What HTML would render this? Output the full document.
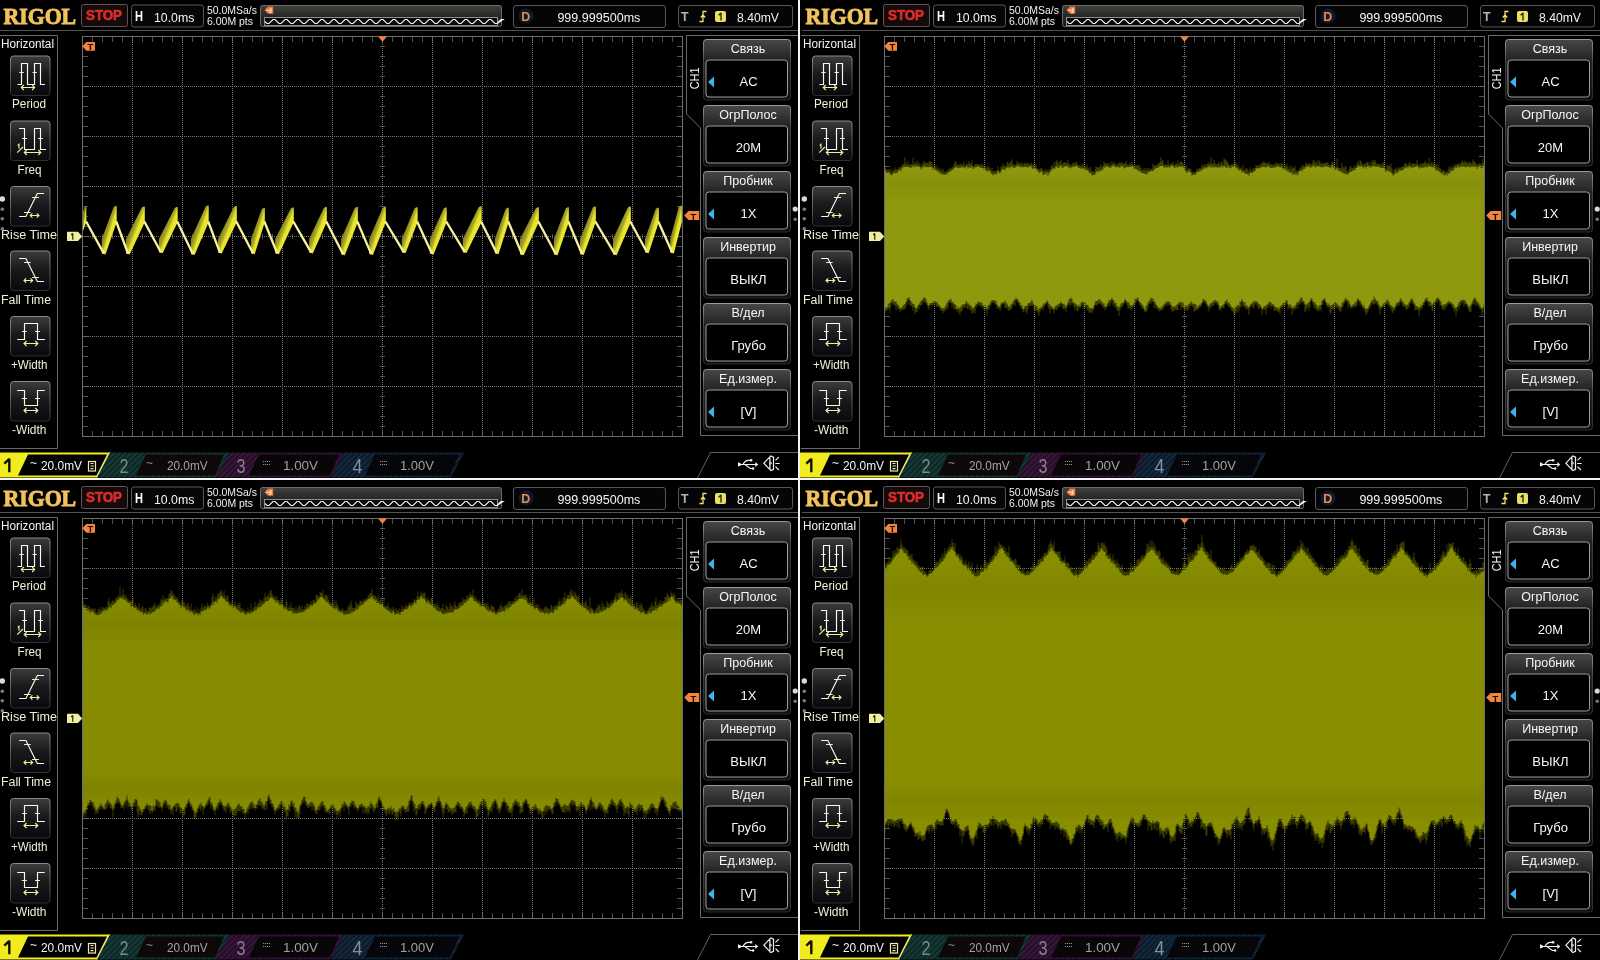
<!DOCTYPE html>
<html><head><meta charset="utf-8"><style>html,body{margin:0;padding:0;background:#000;width:1600px;height:960px;overflow:hidden}svg{display:block}#wrap{will-change:transform}</style></head>
<body><div id="wrap"><svg width="1600" height="960" viewBox="0 0 1600 960" font-family='"Liberation Sans", sans-serif'>

<defs>
<linearGradient id="gMem" x1="0" y1="0" x2="0" y2="1"><stop offset="0" stop-color="#3e423c"/><stop offset="0.55" stop-color="#262624"/><stop offset="1" stop-color="#141414"/></linearGradient>
<linearGradient id="gBtn" x1="0" y1="0" x2="0" y2="1"><stop offset="0" stop-color="#3c3c3c"/><stop offset="0.45" stop-color="#1a1a1c"/><stop offset="1" stop-color="#08080e"/></linearGradient>
<linearGradient id="gBtnS" x1="0" y1="0" x2="0" y2="1"><stop offset="0" stop-color="#8a8a8a"/><stop offset="1" stop-color="#303030"/></linearGradient>
<linearGradient id="gHdr" x1="0" y1="0" x2="0" y2="1"><stop offset="0" stop-color="#474747"/><stop offset="0.33" stop-color="#242424"/><stop offset="1" stop-color="#101010"/></linearGradient>
<linearGradient id="gHdrS" x1="0" y1="0" x2="0" y2="1"><stop offset="0" stop-color="#9a9a9a"/><stop offset="0.4" stop-color="#404040"/><stop offset="1" stop-color="#2a2a2a"/></linearGradient>
<pattern id="hTeal" width="4" height="4" patternUnits="userSpaceOnUse" patternTransform="rotate(45)"><rect width="4" height="4" fill="#0c2826"/><rect width="2" height="4" fill="#153a36"/></pattern>
<pattern id="hPurp" width="4" height="4" patternUnits="userSpaceOnUse" patternTransform="rotate(45)"><rect width="4" height="4" fill="#240e28"/><rect width="2" height="4" fill="#38163a"/></pattern>
<pattern id="hBlue" width="4" height="4" patternUnits="userSpaceOnUse" patternTransform="rotate(45)"><rect width="4" height="4" fill="#0a1a2a"/><rect width="2" height="4" fill="#14283c"/></pattern>
<linearGradient id="gRise" x1="0" y1="0" x2="1" y2="1"><stop offset="0.36" stop-color="#84821e"/><stop offset="0.47" stop-color="#acaa26"/><stop offset="0.54" stop-color="#e8e42c"/><stop offset="1" stop-color="#f6f23c"/></linearGradient>
<filter id="soft" x="-2%" y="-5%" width="104%" height="110%"><feGaussianBlur stdDeviation="0.7"/></filter>
<linearGradient id="gDark" x1="0" y1="0" x2="0" y2="1"><stop offset="0" stop-color="#000" stop-opacity="0"/><stop offset="0.45" stop-color="#000" stop-opacity="0.06"/><stop offset="1" stop-color="#000" stop-opacity="0"/></linearGradient>
<clipPath id="gridClip"><rect x="83" y="37" width="599" height="399"/></clipPath>
<clipPath id="cTL"><rect x="0" y="0" width="798" height="478"/></clipPath>
<clipPath id="cTR"><rect x="800" y="0" width="800" height="478"/></clipPath>
<clipPath id="cBL"><rect x="0" y="480" width="798" height="480"/></clipPath>
<clipPath id="cBR"><rect x="800" y="480" width="800" height="480"/></clipPath>
<g id="chrome"><text x="3.4" y="23.6" font-size="23.5" fill="#f2c25c" textLength="72.8" lengthAdjust="spacingAndGlyphs" font-weight="bold" font-family='"Liberation Serif", serif' stroke="#f2c25c" stroke-width="0.9">RIGOL</text>
<rect x="81.5" y="4.5" width="46" height="22" rx="2" fill="#140a0a" stroke="#5e5656"/>
<text x="86" y="20.3" font-size="14.3" fill="#dc2c2c" textLength="36" lengthAdjust="spacingAndGlyphs" font-weight="bold" stroke="#dc2c2c" stroke-width="0.7">STOP</text>
<rect x="131.5" y="5" width="72" height="22" rx="2.5" fill="#060606" stroke="#585858"/>
<text x="135" y="20.7" font-size="14" fill="#ffffff" textLength="8" lengthAdjust="spacingAndGlyphs" font-weight="bold">H</text>
<text x="154" y="22" font-size="12.5" fill="#f4f4f4" textLength="40.3" lengthAdjust="spacingAndGlyphs">10.0ms</text>
<text x="207" y="13.5" font-size="10" fill="#f0f0f0" textLength="50" lengthAdjust="spacingAndGlyphs">50.0MSa/s</text>
<text x="207" y="24.5" font-size="10" fill="#f0f0f0" textLength="46" lengthAdjust="spacingAndGlyphs">6.00M pts</text>
<rect x="260.5" y="5.5" width="241" height="21" rx="2" fill="url(#gMem)" stroke="#6c6c6c"/>
<rect x="264.5" y="17.5" width="233" height="8" fill="#080808" stroke="#8e8e8e"/>
<path d="M265,21.5 L267,23.5 L269,23.5 L273,19.5 L275,19.5 L279,23.5 L281,23.5 L285,19.5 L287,19.5 L291,23.5 L293,23.5 L297,19.5 L299,19.5 L303,23.5 L305,23.5 L309,19.5 L311,19.5 L315,23.5 L317,23.5 L321,19.5 L323,19.5 L327,23.5 L329,23.5 L333,19.5 L335,19.5 L339,23.5 L341,23.5 L345,19.5 L347,19.5 L351,23.5 L353,23.5 L357,19.5 L359,19.5 L363,23.5 L365,23.5 L369,19.5 L371,19.5 L375,23.5 L377,23.5 L381,19.5 L383,19.5 L387,23.5 L389,23.5 L393,19.5 L395,19.5 L399,23.5 L401,23.5 L405,19.5 L407,19.5 L411,23.5 L413,23.5 L417,19.5 L419,19.5 L423,23.5 L425,23.5 L429,19.5 L431,19.5 L435,23.5 L437,23.5 L441,19.5 L443,19.5 L447,23.5 L449,23.5 L453,19.5 L455,19.5 L459,23.5 L461,23.5 L465,19.5 L467,19.5 L471,23.5 L473,23.5 L477,19.5 L479,19.5 L483,23.5 L485,23.5 L489,19.5 L491,19.5 L495,23.5 L497,23.5 L501,19.5 L503,19.5 L497,23.5" fill="none" stroke="#f4f4f4" stroke-width="1.1"/>
<path d="M264.5,10.2 L268,6.5 H273.2 V13.8 H268 Z" fill="#f07a3a"/>
<path d="M266.5,10.2 H271 M271,8 V12.4 M269,12.4 H271" stroke="#fff2e0" stroke-width="1" fill="none"/>
<rect x="513.5" y="5.5" width="152" height="22" rx="2.5" fill="#050505" stroke="#585858"/>
<circle cx="526" cy="16" r="7.5" fill="#0c1a36"/>
<text x="521.3" y="20.7" font-size="13" fill="#f08a3a" textLength="9" lengthAdjust="spacingAndGlyphs" font-weight="bold">D</text>
<text x="557.4" y="22.3" font-size="12.5" fill="#f4f4f4" textLength="83" lengthAdjust="spacingAndGlyphs">999.999500ms</text>
<rect x="678.5" y="5.5" width="114" height="21.5" rx="2.5" fill="#050508" stroke="#585858"/>
<text x="681" y="21" font-size="13" fill="#b4b4b4" textLength="7.5" lengthAdjust="spacingAndGlyphs" font-weight="bold">T</text>
<path d="M699.5,21.5 H703 V11.5 H706.5 M700.8,17.5 L703,15 L705.2,17.5" stroke="#f0e070" stroke-width="1.3" fill="none"/>
<rect x="715" y="11" width="11" height="11" rx="2" fill="#e6e064"/>
<path d="M721,12.8 V20.6 M721,13 L718.6,15.2" stroke="#202000" stroke-width="1.3" fill="none"/>
<text x="737" y="21.5" font-size="12.5" fill="#f4f4f0" textLength="42" lengthAdjust="spacingAndGlyphs">8.40mV</text>
<path d="M0,30.5 H798" stroke="#525252"/>
<path d="M-1,35.5 H57.5 V448.5 H-1" fill="none" stroke="#6a6a6a"/>
<text x="1" y="48" font-size="12.5" fill="#f4f4f4" textLength="53" lengthAdjust="spacingAndGlyphs">Horizontal</text>
<rect x="10.5" y="56" width="39.5" height="39.5" rx="3" fill="url(#gBtn)" stroke="url(#gBtnS)"/>
<g transform="translate(8,54)"><path d="M11.2,18.5 H15.8 M24.5,18.5 H28.9 M13.3,33.5 H26.6 M15.8,31 L13.3,33.5 L15.8,36 M24.1,31 L26.6,33.5 L24.1,36" stroke="#f0f0a4" stroke-width="1.15" fill="none"/><path d="M9.5,30.5 H13.5 V9.5 H19.5 V30.5 H26.5 V9.5 H32.5 V30.5 H36.9" stroke="#fafaf2" stroke-width="1.15" fill="none"/></g>
<text x="29" y="108" font-size="12" fill="#f2f0d8" textLength="34" lengthAdjust="spacingAndGlyphs" text-anchor="middle">Period</text>
<rect x="10.5" y="121" width="39.5" height="39.5" rx="3" fill="url(#gBtn)" stroke="url(#gBtnS)"/>
<g transform="translate(8,119)"><path d="M14,19.5 H19 M30,19.5 H34.8 M16.3,33.5 H32.8 M18.8,31 L16.3,33.5 L18.8,36 M30.3,31 L32.8,33.5 L30.3,36 M9.2,33.7 L14.9,28 M9.8,26.5 L11,25.3 V29.5" stroke="#f0f0a4" stroke-width="1.15" fill="none"/><path d="M11,9.5 H16.5 V30.5 H26.5 V9.5 H32.5 V30.5 H38" stroke="#fafaf2" stroke-width="1.15" fill="none"/></g>
<text x="29.5" y="174" font-size="12" fill="#f2f0d8" textLength="24" lengthAdjust="spacingAndGlyphs" text-anchor="middle">Freq</text>
<rect x="10.5" y="186.5" width="39.5" height="39.5" rx="3" fill="url(#gBtn)" stroke="url(#gBtnS)"/>
<g transform="translate(8,184)"><path d="M24,13.5 H31 M16,28.5 H22.7 M22.2,31.5 H31 M24.4,29.3 L22.2,31.5 L24.4,33.7 M28.8,29.3 L31,31.5 L28.8,33.7" stroke="#f0f0a4" stroke-width="1.15" fill="none"/><path d="M11.2,32.5 H17.9 L29.3,9.5 H36" stroke="#fafaf2" stroke-width="1.15" fill="none"/></g>
<text x="29" y="239" font-size="12" fill="#f2f0d8" textLength="56" lengthAdjust="spacingAndGlyphs" text-anchor="middle">Rise Time</text>
<rect x="10.5" y="251" width="39.5" height="39.5" rx="3" fill="url(#gBtn)" stroke="url(#gBtnS)"/>
<g transform="translate(8,249)"><path d="M16,13.5 H22.7 M24,28.5 H31 M16,31.5 H24.7 M18.2,29.3 L16,31.5 L18.2,33.7 M22.5,29.3 L24.7,31.5 L22.5,33.7" stroke="#f0f0a4" stroke-width="1.15" fill="none"/><path d="M11.2,9.5 H17.9 L29.3,32.5 H36" stroke="#fafaf2" stroke-width="1.15" fill="none"/></g>
<text x="26" y="304" font-size="12" fill="#f2f0d8" textLength="50" lengthAdjust="spacingAndGlyphs" text-anchor="middle">Fall Time</text>
<rect x="10.5" y="316.5" width="39.5" height="39.5" rx="3" fill="url(#gBtn)" stroke="url(#gBtnS)"/>
<g transform="translate(8,314)"><path d="M14,17.5 H18.8 M27,17.5 H32 M16,29.5 H29.8 M18.5,27 L16,29.5 L18.5,32 M27.3,27 L29.8,29.5 L27.3,32" stroke="#f0f0a4" stroke-width="1.15" fill="none"/><path d="M9.2,25.5 H16.5 V9.5 H29.5 V25.5 H36.9" stroke="#fafaf2" stroke-width="1.15" fill="none"/></g>
<text x="29.2" y="368.5" font-size="12" fill="#f2f0d8" textLength="36.5" lengthAdjust="spacingAndGlyphs" text-anchor="middle">+Width</text>
<rect x="10.5" y="381.5" width="39.5" height="39.5" rx="3" fill="url(#gBtn)" stroke="url(#gBtnS)"/>
<g transform="translate(8,380)"><path d="M13.8,18.5 H19 M27,18.5 H32 M16,30.5 H29.8 M18.5,28 L16,30.5 L18.5,33 M27.3,28 L29.8,30.5 L27.3,33" stroke="#f0f0a4" stroke-width="1.15" fill="none"/><path d="M9.2,10.5 H16.5 V25.5 H29.5 V10.5 H36.7" stroke="#fafaf2" stroke-width="1.15" fill="none"/></g>
<text x="29.2" y="433.5" font-size="12" fill="#f2f0d8" textLength="34.4" lengthAdjust="spacingAndGlyphs" text-anchor="middle">-Width</text>
<circle cx="2.3" cy="199" r="2.7" fill="#dadada"/><circle cx="2.3" cy="209.2" r="1.8" fill="#7c7c7c"/><circle cx="2.3" cy="218.8" r="1.8" fill="#7c7c7c"/><circle cx="2.3" cy="228.9" r="1.8" fill="#7c7c7c"/>
<circle cx="795.2" cy="209" r="2.6" fill="#d8d8d8"/><circle cx="795.2" cy="219.2" r="1.7" fill="#7a7a7a"/>
<path d="M799,35.5 H686.5 V114 L700.5,128 V435.5 H799" fill="none" stroke="#6a6a6a"/>
<text x="0" y="0" font-size="13.5" fill="#f4f4f4" text-anchor="middle" textLength="21.7" lengthAdjust="spacingAndGlyphs" transform="translate(699,78.4) rotate(-90)">CH1</text>
<rect x="703.5" y="39.5" width="87" height="60.5" rx="3" fill="url(#gHdr)" stroke="url(#gHdrS)"/>
<rect x="706" y="60.0" width="81.5" height="37" rx="3" fill="#000" stroke="#9c9c9c"/>
<text x="748" y="52.8" font-size="12.5" fill="#f6f6f6" text-anchor="middle">Связь</text>
<text x="748.5" y="86.0" font-size="13" fill="#f6f6f6" text-anchor="middle">AC</text>
<path d="M708,82.0 L714,76.5 V87.5 Z" fill="#3cb4ec"/>
<rect x="703.5" y="105.5" width="87" height="60.5" rx="3" fill="url(#gHdr)" stroke="url(#gHdrS)"/>
<rect x="706" y="126.0" width="81.5" height="37" rx="3" fill="#000" stroke="#9c9c9c"/>
<text x="748" y="118.8" font-size="12.5" fill="#f6f6f6" text-anchor="middle">ОгрПолос</text>
<text x="748.5" y="152.0" font-size="13" fill="#f6f6f6" text-anchor="middle">20M</text>
<rect x="703.5" y="171.5" width="87" height="60.5" rx="3" fill="url(#gHdr)" stroke="url(#gHdrS)"/>
<rect x="706" y="192.0" width="81.5" height="37" rx="3" fill="#000" stroke="#9c9c9c"/>
<text x="748" y="184.8" font-size="12.5" fill="#f6f6f6" text-anchor="middle">Пробник</text>
<text x="748.5" y="218.0" font-size="13" fill="#f6f6f6" text-anchor="middle">1X</text>
<path d="M708,214.0 L714,208.5 V219.5 Z" fill="#3cb4ec"/>
<rect x="703.5" y="237.5" width="87" height="60.5" rx="3" fill="url(#gHdr)" stroke="url(#gHdrS)"/>
<rect x="706" y="258.0" width="81.5" height="37" rx="3" fill="#000" stroke="#9c9c9c"/>
<text x="748" y="250.8" font-size="12.5" fill="#f6f6f6" text-anchor="middle">Инвертир</text>
<text x="748.5" y="284.0" font-size="13" fill="#f6f6f6" text-anchor="middle">ВЫКЛ</text>
<rect x="703.5" y="303.5" width="87" height="60.5" rx="3" fill="url(#gHdr)" stroke="url(#gHdrS)"/>
<rect x="706" y="324.0" width="81.5" height="37" rx="3" fill="#000" stroke="#9c9c9c"/>
<text x="748" y="316.8" font-size="12.5" fill="#f6f6f6" text-anchor="middle">В/дел</text>
<text x="748.5" y="350.0" font-size="13" fill="#f6f6f6" text-anchor="middle">Грубо</text>
<rect x="703.5" y="369.5" width="87" height="60.5" rx="3" fill="url(#gHdr)" stroke="url(#gHdrS)"/>
<rect x="706" y="390.0" width="81.5" height="37" rx="3" fill="#000" stroke="#9c9c9c"/>
<text x="748" y="382.8" font-size="12.5" fill="#f6f6f6" text-anchor="middle">Ед.измер.</text>
<text x="748.5" y="416.0" font-size="13" fill="#f6f6f6" text-anchor="middle">[V]</text>
<path d="M708,412.0 L714,406.5 V417.5 Z" fill="#3cb4ec"/>
<path d="M-4,452.5 H110 L97,477.5 H-4 Z" fill="#f0ec1e"/>
<path d="M28,454.5 H107 L96.5,475.5 H18 Z" fill="#000"/>
<path d="M110,452.5 L97,477.5" stroke="#f4f0a0" stroke-width="1.5"/>
<path d="M9.3,458.5 V472.3 M9.3,459 L4.3,463.6" stroke="#101000" stroke-width="2.4" fill="none"/>
<text x="30" y="467" font-size="12" fill="#f4f4f4">~</text>
<text x="41" y="470" font-size="12.5" fill="#f4f4f4" textLength="41" lengthAdjust="spacingAndGlyphs">20.0mV</text>
<rect x="88.5" y="461.5" width="7" height="9.5" fill="none" stroke="#f0eab0" stroke-width="1.2"/><path d="M90.5,466 H94 M90.5,463.5 H93.5 M90.5,468.7 H93.5" stroke="#f0eab0" stroke-width="1.2"/>
<path d="M110,452.5 H230 L215,477.5 H97 Z" fill="url(#hTeal)"/>
<path d="M146,454.5 H224 L215,475.5 H136 Z" fill="#0e0808"/>
<text x="119.5" y="472.8" font-size="20" fill="#7e8a86" textLength="9" lengthAdjust="spacingAndGlyphs">2</text>
<text x="146" y="467" font-size="12" fill="#8a8a8a">~</text>
<text x="167" y="470" font-size="12.5" fill="#a4a4a4" textLength="40.6" lengthAdjust="spacingAndGlyphs">20.0mV</text>
<path d="M230,452.5 H344 L331,477.5 H215 Z" fill="url(#hPurp)"/>
<path d="M259,454.5 H339 L330,475.5 H249 Z" fill="#0a0608"/>
<text x="236.5" y="472.8" font-size="20" fill="#8a8090" textLength="9" lengthAdjust="spacingAndGlyphs">3</text>
<path d="M263,461.5 H270 M263,464.5 H270" stroke="#909090" stroke-width="1" stroke-dasharray="1.2 0.8"/>
<text x="283" y="470" font-size="12.5" fill="#a0a0a0" textLength="35" lengthAdjust="spacingAndGlyphs">1.00V</text>
<path d="M344,452.5 H464 L451,477.5 H331 Z" fill="url(#hBlue)"/>
<path d="M375,454.5 H459 L450,475.5 H365 Z" fill="#06060a"/>
<text x="352.5" y="472.8" font-size="20" fill="#8090a0" textLength="10" lengthAdjust="spacingAndGlyphs">4</text>
<path d="M380,461.5 H387 M380,464.5 H387" stroke="#909090" stroke-width="1" stroke-dasharray="1.2 0.8"/>
<text x="400" y="470" font-size="12.5" fill="#a0a0a0" textLength="34" lengthAdjust="spacingAndGlyphs">1.00V</text>
<path d="M799,452.5 H710.5 L697,479" fill="none" stroke="#606060"/>
<g stroke="#f2f2f2" fill="none" stroke-width="1.15"><path d="M740,464.5 H757.2 M755.2,462.6 L757.4,464.5 L755.2,466.4 M742.8,464.5 Q745.3,460.4 748.3,460.4 H750.5 M745.3,464.7 L750.3,468.5 H752.5"/></g>
<path d="M738,462.2 L740.9,463.4 V465.6 L738,466.6 Z" fill="#f2f2f2"/><rect x="750" y="459.2" width="2.3" height="2.2" fill="#f2f2f2"/><circle cx="753.1" cy="468.5" r="1.2" fill="#f2f2f2"/>
<g stroke="#f2f2f2" fill="none" stroke-width="1.2"><path d="M763.9,463.2 L770.8,455.9 L773.5,457.2 V469.4 L770.8,470.6 Z M769.9,457.5 V469 M775.5,460.4 L778.9,457.1 M775.3,463.5 H779.6 M775.5,466.6 L778.9,470"/></g><circle cx="770.6" cy="463.2" r="0.9" fill="none" stroke="#f2f2f2" stroke-width="0.9"/></g>
<g id="grid"><rect x="82.5" y="36.5" width="600" height="400" fill="none" stroke="#6e6e6e"/>
<path d="M92.5,37 V42 M92.5,436 V431 M102.5,37 V42 M102.5,436 V431 M112.5,37 V42 M112.5,436 V431 M122.5,37 V42 M122.5,436 V431 M132.5,37 V42 M132.5,436 V431 M142.5,37 V42 M142.5,436 V431 M152.5,37 V42 M152.5,436 V431 M162.5,37 V42 M162.5,436 V431 M172.5,37 V42 M172.5,436 V431 M182.5,37 V42 M182.5,436 V431 M192.5,37 V42 M192.5,436 V431 M202.5,37 V42 M202.5,436 V431 M212.5,37 V42 M212.5,436 V431 M222.5,37 V42 M222.5,436 V431 M232.5,37 V42 M232.5,436 V431 M242.5,37 V42 M242.5,436 V431 M252.5,37 V42 M252.5,436 V431 M262.5,37 V42 M262.5,436 V431 M272.5,37 V42 M272.5,436 V431 M282.5,37 V42 M282.5,436 V431 M292.5,37 V42 M292.5,436 V431 M302.5,37 V42 M302.5,436 V431 M312.5,37 V42 M312.5,436 V431 M322.5,37 V42 M322.5,436 V431 M332.5,37 V42 M332.5,436 V431 M342.5,37 V42 M342.5,436 V431 M352.5,37 V42 M352.5,436 V431 M362.5,37 V42 M362.5,436 V431 M372.5,37 V42 M372.5,436 V431 M382.5,37 V42 M382.5,436 V431 M392.5,37 V42 M392.5,436 V431 M402.5,37 V42 M402.5,436 V431 M412.5,37 V42 M412.5,436 V431 M422.5,37 V42 M422.5,436 V431 M432.5,37 V42 M432.5,436 V431 M442.5,37 V42 M442.5,436 V431 M452.5,37 V42 M452.5,436 V431 M462.5,37 V42 M462.5,436 V431 M472.5,37 V42 M472.5,436 V431 M482.5,37 V42 M482.5,436 V431 M492.5,37 V42 M492.5,436 V431 M502.5,37 V42 M502.5,436 V431 M512.5,37 V42 M512.5,436 V431 M522.5,37 V42 M522.5,436 V431 M532.5,37 V42 M532.5,436 V431 M542.5,37 V42 M542.5,436 V431 M552.5,37 V42 M552.5,436 V431 M562.5,37 V42 M562.5,436 V431 M572.5,37 V42 M572.5,436 V431 M582.5,37 V42 M582.5,436 V431 M592.5,37 V42 M592.5,436 V431 M602.5,37 V42 M602.5,436 V431 M612.5,37 V42 M612.5,436 V431 M622.5,37 V42 M622.5,436 V431 M632.5,37 V42 M632.5,436 V431 M642.5,37 V42 M642.5,436 V431 M652.5,37 V42 M652.5,436 V431 M662.5,37 V42 M662.5,436 V431 M672.5,37 V42 M672.5,436 V431 M83,46.5 H88 M682,46.5 H677 M83,56.5 H88 M682,56.5 H677 M83,66.5 H88 M682,66.5 H677 M83,76.5 H88 M682,76.5 H677 M83,86.5 H88 M682,86.5 H677 M83,96.5 H88 M682,96.5 H677 M83,106.5 H88 M682,106.5 H677 M83,116.5 H88 M682,116.5 H677 M83,126.5 H88 M682,126.5 H677 M83,136.5 H88 M682,136.5 H677 M83,146.5 H88 M682,146.5 H677 M83,156.5 H88 M682,156.5 H677 M83,166.5 H88 M682,166.5 H677 M83,176.5 H88 M682,176.5 H677 M83,186.5 H88 M682,186.5 H677 M83,196.5 H88 M682,196.5 H677 M83,206.5 H88 M682,206.5 H677 M83,216.5 H88 M682,216.5 H677 M83,226.5 H88 M682,226.5 H677 M83,236.5 H88 M682,236.5 H677 M83,246.5 H88 M682,246.5 H677 M83,256.5 H88 M682,256.5 H677 M83,266.5 H88 M682,266.5 H677 M83,276.5 H88 M682,276.5 H677 M83,286.5 H88 M682,286.5 H677 M83,296.5 H88 M682,296.5 H677 M83,306.5 H88 M682,306.5 H677 M83,316.5 H88 M682,316.5 H677 M83,326.5 H88 M682,326.5 H677 M83,336.5 H88 M682,336.5 H677 M83,346.5 H88 M682,346.5 H677 M83,356.5 H88 M682,356.5 H677 M83,366.5 H88 M682,366.5 H677 M83,376.5 H88 M682,376.5 H677 M83,386.5 H88 M682,386.5 H677 M83,396.5 H88 M682,396.5 H677 M83,406.5 H88 M682,406.5 H677 M83,416.5 H88 M682,416.5 H677 M83,426.5 H88 M682,426.5 H677 M92.5,234 V239 M102.5,234 V239 M112.5,234 V239 M122.5,234 V239 M132.5,234 V239 M142.5,234 V239 M152.5,234 V239 M162.5,234 V239 M172.5,234 V239 M182.5,234 V239 M192.5,234 V239 M202.5,234 V239 M212.5,234 V239 M222.5,234 V239 M232.5,234 V239 M242.5,234 V239 M252.5,234 V239 M262.5,234 V239 M272.5,234 V239 M282.5,234 V239 M292.5,234 V239 M302.5,234 V239 M312.5,234 V239 M322.5,234 V239 M332.5,234 V239 M342.5,234 V239 M352.5,234 V239 M362.5,234 V239 M372.5,234 V239 M382.5,234 V239 M392.5,234 V239 M402.5,234 V239 M412.5,234 V239 M422.5,234 V239 M432.5,234 V239 M442.5,234 V239 M452.5,234 V239 M462.5,234 V239 M472.5,234 V239 M482.5,234 V239 M492.5,234 V239 M502.5,234 V239 M512.5,234 V239 M522.5,234 V239 M532.5,234 V239 M542.5,234 V239 M552.5,234 V239 M562.5,234 V239 M572.5,234 V239 M582.5,234 V239 M592.5,234 V239 M602.5,234 V239 M612.5,234 V239 M622.5,234 V239 M632.5,234 V239 M642.5,234 V239 M652.5,234 V239 M662.5,234 V239 M672.5,234 V239 M380,46.5 H385 M380,56.5 H385 M380,66.5 H385 M380,76.5 H385 M380,86.5 H385 M380,96.5 H385 M380,106.5 H385 M380,116.5 H385 M380,126.5 H385 M380,136.5 H385 M380,146.5 H385 M380,156.5 H385 M380,166.5 H385 M380,176.5 H385 M380,186.5 H385 M380,196.5 H385 M380,206.5 H385 M380,216.5 H385 M380,226.5 H385 M380,236.5 H385 M380,246.5 H385 M380,256.5 H385 M380,266.5 H385 M380,276.5 H385 M380,286.5 H385 M380,296.5 H385 M380,306.5 H385 M380,316.5 H385 M380,326.5 H385 M380,336.5 H385 M380,346.5 H385 M380,356.5 H385 M380,366.5 H385 M380,376.5 H385 M380,386.5 H385 M380,396.5 H385 M380,406.5 H385 M380,416.5 H385 M380,426.5 H385" stroke="#505050" stroke-width="1"/>
<path d="M132.5,36 V436 M182.5,36 V436 M232.5,36 V436 M282.5,36 V436 M332.5,36 V436 M382.5,36 V436 M432.5,36 V436 M482.5,36 V436 M532.5,36 V436 M582.5,36 V436 M632.5,36 V436 M82,86.5 H682 M82,136.5 H682 M82,186.5 H682 M82,236.5 H682 M82,286.5 H682 M82,336.5 H682 M82,386.5 H682" stroke="#787878" stroke-width="1" stroke-dasharray="1 1"/></g>
<g id="markers"><path d="M378,36.5 H387 L382.5,41.8 Z" fill="#f2843e"/>
<path d="M82.3,46.3 L86.3,42 H95 V50.8 H86.3 Z" fill="#f2843e"/>
<text x="90.5" y="50" font-size="9.5" fill="#1a0800" text-anchor="middle" font-weight="bold">T</text>
<path d="M684.2,215.5 L688.5,211 H699.2 V220 H688.5 Z" fill="#f2843e"/>
<text x="693.5" y="219.5" font-size="9.5" fill="#1a0800" text-anchor="middle" font-weight="bold">T</text>
<path d="M67,231.8 H78 L82.2,236.4 L78,241 H67 Z" fill="#f0eea0"/>
<path d="M72.8,233.5 V239.8 M71.2,235 L72.8,233.5" stroke="#141400" stroke-width="1.1" fill="none"/></g>
</defs>
<rect width="1600" height="960" fill="#000"/>
<g clip-path="url(#cTL)"><g transform="translate(0,0)"><use href="#chrome"/><use href="#grid"/><g clip-path="url(#gridClip)"><path d="M101.8,253.4 V239 L113.7,207.1 L115.4,206.1 H116.7 V222 L105.5,254.4 Z" fill="url(#gRise)"/><path d="M126.0,253.5 V239 L141.8,207.4 L143.5,206.4 H144.8 V222 L129.7,254.5 Z" fill="url(#gRise)"/><path d="M158.9,252.2 V239 L174.7,208.1 L176.4,207.1 H177.7 V222 L162.6,253.2 Z" fill="url(#gRise)"/><path d="M190.9,254.1 V239 L205.7,206.5 L207.4,205.5 H208.7 V222 L194.6,255.1 Z" fill="url(#gRise)"/><path d="M218.0,252.6 V239 L233.8,207.1 L235.5,206.1 H236.8 V222 L221.7,253.6 Z" fill="url(#gRise)"/><path d="M251.0,253.2 V239 L261.8,209.0 L263.5,208.0 H264.8 V222 L254.7,254.2 Z" fill="url(#gRise)"/><path d="M275.2,253.2 V239 L290.8,208.6 L292.5,207.6 H293.8 V222 L278.9,254.2 Z" fill="url(#gRise)"/><path d="M309.1,252.4 V239 L323.8,208.1 L325.5,207.1 H326.8 V222 L312.8,253.4 Z" fill="url(#gRise)"/><path d="M341.1,254.2 V239 L354.8,208.1 L356.5,207.1 H357.8 V222 L344.8,255.2 Z" fill="url(#gRise)"/><path d="M369.2,253.9 V239 L382.8,207.8 L384.5,206.8 H385.8 V222 L372.9,254.9 Z" fill="url(#gRise)"/><path d="M401.8,252.2 V239 L414.6,208.2 L416.3,207.2 H417.6 V222 L405.5,253.2 Z" fill="url(#gRise)"/><path d="M429.9,253.5 V239 L443.7,208.4 L445.4,207.4 H446.7 V222 L433.6,254.5 Z" fill="url(#gRise)"/><path d="M462.8,252.1 V239 L478.6,207.3 L480.3,206.3 H481.6 V222 L466.5,253.1 Z" fill="url(#gRise)"/><path d="M494.8,253.2 V239 L505.7,208.7 L507.4,207.7 H508.7 V222 L498.5,254.2 Z" fill="url(#gRise)"/><path d="M520.0,254.2 V239 L535.8,208.3 L537.5,207.3 H538.8 V222 L523.7,255.2 Z" fill="url(#gRise)"/><path d="M553.9,254.3 V239 L565.8,208.3 L567.5,207.3 H568.8 V222 L557.6,255.3 Z" fill="url(#gRise)"/><path d="M580.0,254.0 V239 L592.8,207.5 L594.5,206.5 H595.8 V222 L583.7,255.0 Z" fill="url(#gRise)"/><path d="M613.0,254.3 V239 L627.8,207.6 L629.5,206.6 H630.8 V222 L616.7,255.3 Z" fill="url(#gRise)"/><path d="M645.0,252.2 V239 L655.8,208.7 L657.5,207.7 H658.8 V222 L648.7,253.2 Z" fill="url(#gRise)"/><path d="M670.2,252.5 V239 L678.8,206.8 L680.5,205.8 H681.8 V222 L673.9,253.5 Z" fill="url(#gRise)"/><path d="M82.6,213 L84.8,206.5 H86.3 V222 L82.6,232 Z" fill="url(#gRise)"/>
<path d="M86.1,221.5 L103.8,253.4 M116.2,221.5 L128.0,253.5 M144.3,221.5 L160.9,252.2 M177.2,221.5 L192.9,254.1 M208.2,221.5 L220.0,252.6 M236.3,221.5 L253.0,253.2 M264.3,221.5 L277.2,253.2 M293.3,221.5 L311.1,252.4 M326.3,221.5 L343.1,254.2 M357.3,221.5 L371.2,253.9 M385.3,221.5 L403.8,252.2 M417.1,221.5 L431.9,253.5 M446.2,221.5 L464.8,252.1 M481.1,221.5 L496.8,253.2 M508.2,221.5 L522.0,254.2 M538.3,221.5 L555.9,254.3 M568.3,221.5 L582.0,254.0 M595.3,221.5 L615.0,254.3 M630.3,221.5 L647.0,252.2 M658.3,221.5 L672.2,252.5" stroke="#f6f2a0" stroke-width="2.3" fill="none" stroke-linejoin="round"/></g><use href="#markers"/></g></g>
<g clip-path="url(#cTR)"><g transform="translate(802,0)"><use href="#chrome"/><use href="#grid"/><g clip-path="url(#gridClip)"><g filter="url(#soft)"><path d="M82.5,165.6 83.5,165.6 L83.5,168.9 84.5,168.9 L84.5,169.8 85.5,169.8 L85.5,169.1 86.5,169.1 L86.5,169.6 87.5,169.6 L87.5,171.8 88.5,171.8 L88.5,168.8 89.5,168.8 L89.5,173.4 90.5,173.4 L90.5,169.8 91.5,169.8 L91.5,170.4 92.5,170.4 L92.5,167.5 93.5,167.5 L93.5,169.5 94.5,169.5 L94.5,169.1 95.5,169.1 L95.5,169.4 96.5,169.4 L96.5,167.3 97.5,167.3 L97.5,166.7 98.5,166.7 L98.5,167.6 99.5,167.6 L99.5,165.1 100.5,165.1 L100.5,164.5 101.5,164.5 L101.5,164.0 102.5,164.0 L102.5,156.9 103.5,156.9 L103.5,163.3 104.5,163.3 L104.5,164.4 105.5,164.4 L105.5,160.9 106.5,160.9 L106.5,165.0 107.5,165.0 L107.5,163.7 108.5,163.7 L108.5,164.1 109.5,164.1 L109.5,164.6 110.5,164.6 L110.5,157.9 111.5,157.9 L111.5,164.2 112.5,164.2 L112.5,162.4 113.5,162.4 L113.5,163.2 114.5,163.2 L114.5,160.4 115.5,160.4 L115.5,164.6 116.5,164.6 L116.5,161.9 117.5,161.9 L117.5,164.5 118.5,164.5 L118.5,167.1 119.5,167.1 L119.5,164.3 120.5,164.3 L120.5,163.5 121.5,163.5 L121.5,160.7 122.5,160.7 L122.5,162.6 123.5,162.6 L123.5,163.0 124.5,163.0 L124.5,162.8 125.5,162.8 L125.5,163.5 126.5,163.5 L126.5,161.3 127.5,161.3 L127.5,161.2 128.5,161.2 L128.5,162.3 129.5,162.3 L129.5,162.0 130.5,162.0 L130.5,167.2 131.5,167.2 L131.5,164.2 132.5,164.2 L132.5,166.7 133.5,166.7 L133.5,165.2 134.5,165.2 L134.5,168.6 135.5,168.6 L135.5,167.4 136.5,167.4 L136.5,170.1 137.5,170.1 L137.5,167.7 138.5,167.7 L138.5,171.2 139.5,171.2 L139.5,169.7 140.5,169.7 L140.5,168.7 141.5,168.7 L141.5,172.2 142.5,172.2 L142.5,171.9 143.5,171.9 L143.5,170.9 144.5,170.9 L144.5,171.7 145.5,171.7 L145.5,169.6 146.5,169.6 L146.5,169.5 147.5,169.5 L147.5,167.5 148.5,167.5 L148.5,168.8 149.5,168.8 L149.5,167.8 150.5,167.8 L150.5,166.8 151.5,166.8 L151.5,164.6 152.5,164.6 L152.5,161.0 153.5,161.0 L153.5,161.8 154.5,161.8 L154.5,165.0 155.5,165.0 L155.5,164.3 156.5,164.3 L156.5,164.9 157.5,164.9 L157.5,164.7 158.5,164.7 L158.5,163.4 159.5,163.4 L159.5,164.6 160.5,164.6 L160.5,164.8 161.5,164.8 L161.5,161.6 162.5,161.6 L162.5,166.0 163.5,166.0 L163.5,164.5 164.5,164.5 L164.5,163.4 165.5,163.4 L165.5,164.4 166.5,164.4 L166.5,160.7 167.5,160.7 L167.5,163.2 168.5,163.2 L168.5,163.7 169.5,163.7 L169.5,160.3 170.5,160.3 L170.5,166.1 171.5,166.1 L171.5,166.3 172.5,166.3 L172.5,163.7 173.5,163.7 L173.5,164.5 174.5,164.5 L174.5,163.7 175.5,163.7 L175.5,163.9 176.5,163.9 L176.5,164.4 177.5,164.4 L177.5,164.9 178.5,164.9 L178.5,164.9 179.5,164.9 L179.5,163.6 180.5,163.6 L180.5,164.8 181.5,164.8 L181.5,167.4 182.5,167.4 L182.5,166.1 183.5,166.1 L183.5,166.7 184.5,166.7 L184.5,168.8 185.5,168.8 L185.5,165.2 186.5,165.2 L186.5,167.3 187.5,167.3 L187.5,168.3 188.5,168.3 L188.5,170.4 189.5,170.4 L189.5,168.1 190.5,168.1 L190.5,171.4 191.5,171.4 L191.5,170.6 192.5,170.6 L192.5,171.4 193.5,171.4 L193.5,171.1 194.5,171.1 L194.5,170.6 195.5,170.6 L195.5,166.6 196.5,166.6 L196.5,170.6 197.5,170.6 L197.5,170.6 198.5,170.6 L198.5,166.2 199.5,166.2 L199.5,167.0 200.5,167.0 L200.5,163.2 201.5,163.2 L201.5,165.4 202.5,165.4 L202.5,166.3 203.5,166.3 L203.5,166.0 204.5,166.0 L204.5,162.6 205.5,162.6 L205.5,161.3 206.5,161.3 L206.5,164.1 207.5,164.1 L207.5,162.8 208.5,162.8 L208.5,161.3 209.5,161.3 L209.5,159.2 210.5,159.2 L210.5,164.3 211.5,164.3 L211.5,164.8 212.5,164.8 L212.5,164.8 213.5,164.8 L213.5,164.4 214.5,164.4 L214.5,161.3 215.5,161.3 L215.5,163.3 216.5,163.3 L216.5,162.2 217.5,162.2 L217.5,163.7 218.5,163.7 L218.5,164.1 219.5,164.1 L219.5,162.1 220.5,162.1 L220.5,165.4 221.5,165.4 L221.5,163.6 222.5,163.6 L222.5,162.4 223.5,162.4 L223.5,163.5 224.5,163.5 L224.5,163.5 225.5,163.5 L225.5,162.5 226.5,162.5 L226.5,164.5 227.5,164.5 L227.5,163.7 228.5,163.7 L228.5,162.5 229.5,162.5 L229.5,164.3 230.5,164.3 L230.5,165.0 231.5,165.0 L231.5,163.6 232.5,163.6 L232.5,165.7 233.5,165.7 L233.5,163.6 234.5,163.6 L234.5,168.2 235.5,168.2 L235.5,168.5 236.5,168.5 L236.5,169.4 237.5,169.4 L237.5,168.8 238.5,168.8 L238.5,167.8 239.5,167.8 L239.5,168.4 240.5,168.4 L240.5,170.3 241.5,170.3 L241.5,171.7 242.5,171.7 L242.5,169.1 243.5,169.1 L243.5,170.9 244.5,170.9 L244.5,169.4 245.5,169.4 L245.5,172.1 246.5,172.1 L246.5,169.0 247.5,169.0 L247.5,169.9 248.5,169.9 L248.5,166.5 249.5,166.5 L249.5,164.8 250.5,164.8 L250.5,167.5 251.5,167.5 L251.5,162.3 252.5,162.3 L252.5,166.0 253.5,166.0 L253.5,161.7 254.5,161.7 L254.5,160.0 255.5,160.0 L255.5,161.9 256.5,161.9 L256.5,164.2 257.5,164.2 L257.5,161.6 258.5,161.6 L258.5,159.8 259.5,159.8 L259.5,164.2 260.5,164.2 L260.5,163.3 261.5,163.3 L261.5,161.7 262.5,161.7 L262.5,162.2 263.5,162.2 L263.5,163.1 264.5,163.1 L264.5,163.3 265.5,163.3 L265.5,159.8 266.5,159.8 L266.5,164.2 267.5,164.2 L267.5,163.9 268.5,163.9 L268.5,166.1 269.5,166.1 L269.5,164.6 270.5,164.6 L270.5,162.9 271.5,162.9 L271.5,162.0 272.5,162.0 L272.5,164.1 273.5,164.1 L273.5,161.7 274.5,161.7 L274.5,162.2 275.5,162.2 L275.5,165.4 276.5,165.4 L276.5,165.5 277.5,165.5 L277.5,164.0 278.5,164.0 L278.5,165.9 279.5,165.9 L279.5,164.8 280.5,164.8 L280.5,163.1 281.5,163.1 L281.5,167.5 282.5,167.5 L282.5,166.3 283.5,166.3 L283.5,166.7 284.5,166.7 L284.5,164.3 285.5,164.3 L285.5,168.6 286.5,168.6 L286.5,167.2 287.5,167.2 L287.5,170.2 288.5,170.2 L288.5,167.0 289.5,167.0 L289.5,171.8 290.5,171.8 L290.5,170.9 291.5,170.9 L291.5,172.4 292.5,172.4 L292.5,169.8 293.5,169.8 L293.5,166.2 294.5,166.2 L294.5,167.4 295.5,167.4 L295.5,166.9 296.5,166.9 L296.5,167.5 297.5,167.5 L297.5,166.2 298.5,166.2 L298.5,163.8 299.5,163.8 L299.5,167.2 300.5,167.2 L300.5,165.6 301.5,165.6 L301.5,161.6 302.5,161.6 L302.5,163.0 303.5,163.0 L303.5,164.3 304.5,164.3 L304.5,163.0 305.5,163.0 L305.5,163.2 306.5,163.2 L306.5,165.6 307.5,165.6 L307.5,162.6 308.5,162.6 L308.5,165.7 309.5,165.7 L309.5,161.8 310.5,161.8 L310.5,163.8 311.5,163.8 L311.5,161.7 312.5,161.7 L312.5,163.6 313.5,163.6 L313.5,165.4 314.5,165.4 L314.5,163.5 315.5,163.5 L315.5,164.8 316.5,164.8 L316.5,162.1 317.5,162.1 L317.5,163.5 318.5,163.5 L318.5,162.3 319.5,162.3 L319.5,162.6 320.5,162.6 L320.5,164.0 321.5,164.0 L321.5,163.6 322.5,163.6 L322.5,163.3 323.5,163.3 L323.5,160.6 324.5,160.6 L324.5,164.6 325.5,164.6 L325.5,164.5 326.5,164.5 L326.5,165.1 327.5,165.1 L327.5,161.9 328.5,161.9 L328.5,164.0 329.5,164.0 L329.5,161.6 330.5,161.6 L330.5,164.4 331.5,164.4 L331.5,165.4 332.5,165.4 L332.5,166.5 333.5,166.5 L333.5,165.0 334.5,165.0 L334.5,165.5 335.5,165.5 L335.5,164.8 336.5,164.8 L336.5,166.7 337.5,166.7 L337.5,165.2 338.5,165.2 L338.5,168.0 339.5,168.0 L339.5,170.0 340.5,170.0 L340.5,169.9 341.5,169.9 L341.5,168.1 342.5,168.1 L342.5,169.7 343.5,169.7 L343.5,167.9 344.5,167.9 L344.5,171.1 345.5,171.1 L345.5,167.9 346.5,167.9 L346.5,169.8 347.5,169.8 L347.5,168.2 348.5,168.2 L348.5,169.0 349.5,169.0 L349.5,168.7 350.5,168.7 L350.5,164.2 351.5,164.2 L351.5,164.8 352.5,164.8 L352.5,165.7 353.5,165.7 L353.5,165.8 354.5,165.8 L354.5,164.8 355.5,164.8 L355.5,163.6 356.5,163.6 L356.5,163.0 357.5,163.0 L357.5,162.2 358.5,162.2 L358.5,157.1 359.5,157.1 L359.5,161.1 360.5,161.1 L360.5,160.1 361.5,160.1 L361.5,164.7 362.5,164.7 L362.5,164.7 363.5,164.7 L363.5,164.3 364.5,164.3 L364.5,165.3 365.5,165.3 L365.5,160.5 366.5,160.5 L366.5,164.3 367.5,164.3 L367.5,165.6 368.5,165.6 L368.5,163.5 369.5,163.5 L369.5,163.2 370.5,163.2 L370.5,161.5 371.5,161.5 L371.5,165.0 372.5,165.0 L372.5,164.5 373.5,164.5 L373.5,162.5 374.5,162.5 L374.5,164.3 375.5,164.3 L375.5,160.2 376.5,160.2 L376.5,164.2 377.5,164.2 L377.5,162.1 378.5,162.1 L378.5,161.8 379.5,161.8 L379.5,161.4 380.5,161.4 L380.5,163.1 381.5,163.1 L381.5,165.7 382.5,165.7 L382.5,166.9 383.5,166.9 L383.5,167.0 384.5,167.0 L384.5,170.6 385.5,170.6 L385.5,167.9 386.5,167.9 L386.5,168.2 387.5,168.2 L387.5,169.3 388.5,169.3 L388.5,168.8 389.5,168.8 L389.5,172.7 390.5,172.7 L390.5,171.7 391.5,171.7 L391.5,172.2 392.5,172.2 L392.5,172.8 393.5,172.8 L393.5,171.6 394.5,171.6 L394.5,168.4 395.5,168.4 L395.5,169.4 396.5,169.4 L396.5,168.2 397.5,168.2 L397.5,167.8 398.5,167.8 L398.5,168.2 399.5,168.2 L399.5,164.8 400.5,164.8 L400.5,166.2 401.5,166.2 L401.5,164.8 402.5,164.8 L402.5,164.5 403.5,164.5 L403.5,166.4 404.5,166.4 L404.5,163.6 405.5,163.6 L405.5,164.0 406.5,164.0 L406.5,162.3 407.5,162.3 L407.5,164.1 408.5,164.1 L408.5,157.1 409.5,157.1 L409.5,163.1 410.5,163.1 L410.5,164.4 411.5,164.4 L411.5,159.9 412.5,159.9 L412.5,162.7 413.5,162.7 L413.5,164.6 414.5,164.6 L414.5,164.3 415.5,164.3 L415.5,163.6 416.5,163.6 L416.5,161.7 417.5,161.7 L417.5,165.1 418.5,165.1 L418.5,162.4 419.5,162.4 L419.5,161.3 420.5,161.3 L420.5,164.6 421.5,164.6 L421.5,158.3 422.5,158.3 L422.5,159.4 423.5,159.4 L423.5,159.7 424.5,159.7 L424.5,161.5 425.5,161.5 L425.5,161.9 426.5,161.9 L426.5,165.2 427.5,165.2 L427.5,165.0 428.5,165.0 L428.5,164.5 429.5,164.5 L429.5,164.6 430.5,164.6 L430.5,163.8 431.5,163.8 L431.5,164.1 432.5,164.1 L432.5,161.7 433.5,161.7 L433.5,162.5 434.5,162.5 L434.5,165.3 435.5,165.3 L435.5,164.2 436.5,164.2 L436.5,167.0 437.5,167.0 L437.5,168.1 438.5,168.1 L438.5,167.5 439.5,167.5 L439.5,170.4 440.5,170.4 L440.5,164.9 441.5,164.9 L441.5,169.7 442.5,169.7 L442.5,170.3 443.5,170.3 L443.5,167.9 444.5,167.9 L444.5,168.3 445.5,168.3 L445.5,169.8 446.5,169.8 L446.5,171.8 447.5,171.8 L447.5,167.2 448.5,167.2 L448.5,169.6 449.5,169.6 L449.5,171.0 450.5,171.0 L450.5,167.8 451.5,167.8 L451.5,168.8 452.5,168.8 L452.5,168.5 453.5,168.5 L453.5,164.4 454.5,164.4 L454.5,166.0 455.5,166.0 L455.5,166.3 456.5,166.3 L456.5,164.7 457.5,164.7 L457.5,165.5 458.5,165.5 L458.5,163.5 459.5,163.5 L459.5,163.3 460.5,163.3 L460.5,162.5 461.5,162.5 L461.5,161.0 462.5,161.0 L462.5,162.8 463.5,162.8 L463.5,162.9 464.5,162.9 L464.5,163.5 465.5,163.5 L465.5,162.7 466.5,162.7 L466.5,162.5 467.5,162.5 L467.5,164.6 468.5,164.6 L468.5,164.2 469.5,164.2 L469.5,164.5 470.5,164.5 L470.5,165.6 471.5,165.6 L471.5,163.9 472.5,163.9 L472.5,164.9 473.5,164.9 L473.5,162.4 474.5,162.4 L474.5,163.5 475.5,163.5 L475.5,163.4 476.5,163.4 L476.5,163.3 477.5,163.3 L477.5,164.7 478.5,164.7 L478.5,163.1 479.5,163.1 L479.5,163.5 480.5,163.5 L480.5,163.8 481.5,163.8 L481.5,167.9 482.5,167.9 L482.5,165.2 483.5,165.2 L483.5,166.2 484.5,166.2 L484.5,163.5 485.5,163.5 L485.5,167.2 486.5,167.2 L486.5,169.0 487.5,169.0 L487.5,165.3 488.5,165.3 L488.5,169.4 489.5,169.4 L489.5,166.7 490.5,166.7 L490.5,167.4 491.5,167.4 L491.5,167.8 492.5,167.8 L492.5,165.7 493.5,165.7 L493.5,170.6 494.5,170.6 L494.5,171.1 495.5,171.1 L495.5,170.7 496.5,170.7 L496.5,169.7 497.5,169.7 L497.5,167.4 498.5,167.4 L498.5,168.1 499.5,168.1 L499.5,165.5 500.5,165.5 L500.5,165.2 501.5,165.2 L501.5,166.3 502.5,166.3 L502.5,165.5 503.5,165.5 L503.5,162.6 504.5,162.6 L504.5,163.7 505.5,163.7 L505.5,164.5 506.5,164.5 L506.5,162.4 507.5,162.4 L507.5,163.9 508.5,163.9 L508.5,164.5 509.5,164.5 L509.5,163.7 510.5,163.7 L510.5,160.4 511.5,160.4 L511.5,159.9 512.5,159.9 L512.5,163.2 513.5,163.2 L513.5,162.2 514.5,162.2 L514.5,160.4 515.5,160.4 L515.5,164.9 516.5,164.9 L516.5,160.2 517.5,160.2 L517.5,161.8 518.5,161.8 L518.5,164.1 519.5,164.1 L519.5,162.7 520.5,162.7 L520.5,163.9 521.5,163.9 L521.5,162.9 522.5,162.9 L522.5,162.7 523.5,162.7 L523.5,163.5 524.5,163.5 L524.5,162.0 525.5,162.0 L525.5,162.9 526.5,162.9 L526.5,164.6 527.5,164.6 L527.5,165.4 528.5,165.4 L528.5,164.4 529.5,164.4 L529.5,161.0 530.5,161.0 L530.5,162.5 531.5,162.5 L531.5,163.6 532.5,163.6 L532.5,166.7 533.5,166.7 L533.5,167.0 534.5,167.0 L534.5,158.4 535.5,158.4 L535.5,166.9 536.5,166.9 L536.5,168.1 537.5,168.1 L537.5,167.9 538.5,167.9 L538.5,168.5 539.5,168.5 L539.5,162.9 540.5,162.9 L540.5,166.9 541.5,166.9 L541.5,168.8 542.5,168.8 L542.5,166.6 543.5,166.6 L543.5,166.1 544.5,166.1 L544.5,170.9 545.5,170.9 L545.5,172.5 546.5,172.5 L546.5,169.2 547.5,169.2 L547.5,166.7 548.5,166.7 L548.5,165.7 549.5,165.7 L549.5,168.0 550.5,168.0 L550.5,167.7 551.5,167.7 L551.5,165.2 552.5,165.2 L552.5,167.7 553.5,167.7 L553.5,165.9 554.5,165.9 L554.5,163.1 555.5,163.1 L555.5,161.2 556.5,161.2 L556.5,164.4 557.5,164.4 L557.5,159.9 558.5,159.9 L558.5,161.3 559.5,161.3 L559.5,163.6 560.5,163.6 L560.5,165.3 561.5,165.3 L561.5,163.6 562.5,163.6 L562.5,164.2 563.5,164.2 L563.5,163.2 564.5,163.2 L564.5,162.1 565.5,162.1 L565.5,162.2 566.5,162.2 L566.5,164.7 567.5,164.7 L567.5,161.4 568.5,161.4 L568.5,166.1 569.5,166.1 L569.5,159.5 570.5,159.5 L570.5,161.9 571.5,161.9 L571.5,160.3 572.5,160.3 L572.5,159.9 573.5,159.9 L573.5,162.5 574.5,162.5 L574.5,164.5 575.5,164.5 L575.5,163.3 576.5,163.3 L576.5,163.7 577.5,163.7 L577.5,164.9 578.5,164.9 L578.5,163.7 579.5,163.7 L579.5,165.3 580.5,165.3 L580.5,162.5 581.5,162.5 L581.5,162.6 582.5,162.6 L582.5,166.7 583.5,166.7 L583.5,169.1 584.5,169.1 L584.5,164.8 585.5,164.8 L585.5,165.7 586.5,165.7 L586.5,165.5 587.5,165.5 L587.5,166.2 588.5,166.2 L588.5,163.8 589.5,163.8 L589.5,168.5 590.5,168.5 L590.5,172.7 591.5,172.7 L591.5,169.5 592.5,169.5 L592.5,168.9 593.5,168.9 L593.5,167.5 594.5,167.5 L594.5,170.0 595.5,170.0 L595.5,166.9 596.5,166.9 L596.5,168.4 597.5,168.4 L597.5,168.1 598.5,168.1 L598.5,167.3 599.5,167.3 L599.5,166.9 600.5,166.9 L600.5,166.4 601.5,166.4 L601.5,165.4 602.5,165.4 L602.5,162.7 603.5,162.7 L603.5,163.4 604.5,163.4 L604.5,164.4 605.5,164.4 L605.5,165.6 606.5,165.6 L606.5,163.1 607.5,163.1 L607.5,162.1 608.5,162.1 L608.5,165.2 609.5,165.2 L609.5,163.9 610.5,163.9 L610.5,162.9 611.5,162.9 L611.5,163.7 612.5,163.7 L612.5,164.1 613.5,164.1 L613.5,163.4 614.5,163.4 L614.5,160.1 615.5,160.1 L615.5,164.1 616.5,164.1 L616.5,166.6 617.5,166.6 L617.5,163.2 618.5,163.2 L618.5,164.5 619.5,164.5 L619.5,163.4 620.5,163.4 L620.5,163.3 621.5,163.3 L621.5,163.0 622.5,163.0 L622.5,160.7 623.5,160.7 L623.5,162.7 624.5,162.7 L624.5,163.5 625.5,163.5 L625.5,163.2 626.5,163.2 L626.5,158.0 627.5,158.0 L627.5,164.6 628.5,164.6 L628.5,162.3 629.5,162.3 L629.5,162.3 630.5,162.3 L630.5,164.7 631.5,164.7 L631.5,162.1 632.5,162.1 L632.5,165.5 633.5,165.5 L633.5,163.7 634.5,163.7 L634.5,166.9 635.5,166.9 L635.5,164.0 636.5,164.0 L636.5,168.1 637.5,168.1 L637.5,167.7 638.5,167.7 L638.5,169.0 639.5,169.0 L639.5,171.3 640.5,171.3 L640.5,170.3 641.5,170.3 L641.5,170.1 642.5,170.1 L642.5,172.1 643.5,172.1 L643.5,171.8 644.5,171.8 L644.5,171.9 645.5,171.9 L645.5,170.0 646.5,170.0 L646.5,166.3 647.5,166.3 L647.5,168.4 648.5,168.4 L648.5,167.5 649.5,167.5 L649.5,165.4 650.5,165.4 L650.5,167.8 651.5,167.8 L651.5,165.7 652.5,165.7 L652.5,163.9 653.5,163.9 L653.5,165.3 654.5,165.3 L654.5,164.0 655.5,164.0 L655.5,163.0 656.5,163.0 L656.5,164.5 657.5,164.5 L657.5,163.7 658.5,163.7 L658.5,162.6 659.5,162.6 L659.5,160.4 660.5,160.4 L660.5,161.7 661.5,161.7 L661.5,162.7 662.5,162.7 L662.5,160.8 663.5,160.8 L663.5,162.1 664.5,162.1 L664.5,162.6 665.5,162.6 L665.5,163.7 666.5,163.7 L666.5,161.1 667.5,161.1 L667.5,162.6 668.5,162.6 L668.5,163.3 669.5,163.3 L669.5,163.2 670.5,163.2 L670.5,159.4 671.5,159.4 L671.5,160.9 672.5,160.9 L672.5,161.7 673.5,161.7 L673.5,163.5 674.5,163.5 L674.5,164.7 675.5,164.7 L675.5,164.5 676.5,164.5 L676.5,162.8 677.5,162.8 L677.5,163.9 678.5,163.9 L678.5,164.6 679.5,164.6 L679.5,163.1 680.5,163.1 L680.5,158.5 681.5,158.5 L681.5,162.6 682.5,162.6 L682.5,307.1 681.5,307.1 L681.5,312.6 680.5,312.6 L680.5,316.3 679.5,316.3 L679.5,309.0 678.5,309.0 L678.5,309.1 677.5,309.1 L677.5,306.2 676.5,306.2 L676.5,305.8 675.5,305.8 L675.5,303.8 674.5,303.8 L674.5,306.0 673.5,306.0 L673.5,300.7 672.5,300.7 L672.5,304.7 671.5,304.7 L671.5,303.8 670.5,303.8 L670.5,305.2 669.5,305.2 L669.5,312.0 668.5,312.0 L668.5,311.8 667.5,311.8 L667.5,311.5 666.5,311.5 L666.5,308.5 665.5,308.5 L665.5,306.6 664.5,306.6 L664.5,304.0 663.5,304.0 L663.5,304.3 662.5,304.3 L662.5,306.8 661.5,306.8 L661.5,302.6 660.5,302.6 L660.5,302.1 659.5,302.1 L659.5,304.7 658.5,304.7 L658.5,305.9 657.5,305.9 L657.5,309.9 656.5,309.9 L656.5,306.7 655.5,306.7 L655.5,311.6 654.5,311.6 L654.5,315.4 653.5,315.4 L653.5,309.8 652.5,309.8 L652.5,311.5 651.5,311.5 L651.5,307.9 650.5,307.9 L650.5,307.1 649.5,307.1 L649.5,304.5 648.5,304.5 L648.5,304.3 647.5,304.3 L647.5,303.6 646.5,303.6 L646.5,304.3 645.5,304.3 L645.5,306.2 644.5,306.2 L644.5,306.4 643.5,306.4 L643.5,309.8 642.5,309.8 L642.5,307.5 641.5,307.5 L641.5,310.5 640.5,310.5 L640.5,308.7 639.5,308.7 L639.5,305.2 638.5,305.2 L638.5,306.0 637.5,306.0 L637.5,301.5 636.5,301.5 L636.5,299.6 635.5,299.6 L635.5,303.0 634.5,303.0 L634.5,301.6 633.5,301.6 L633.5,306.0 632.5,306.0 L632.5,303.8 631.5,303.8 L631.5,311.4 630.5,311.4 L630.5,310.0 629.5,310.0 L629.5,306.2 628.5,306.2 L628.5,305.7 627.5,305.7 L627.5,306.3 626.5,306.3 L626.5,303.1 625.5,303.1 L625.5,301.2 624.5,301.2 L624.5,301.2 623.5,301.2 L623.5,302.5 622.5,302.5 L622.5,305.6 621.5,305.6 L621.5,305.1 620.5,305.1 L620.5,309.4 619.5,309.4 L619.5,307.2 618.5,307.2 L618.5,310.4 617.5,310.4 L617.5,315.9 616.5,315.9 L616.5,310.3 615.5,310.3 L615.5,309.2 614.5,309.2 L614.5,310.0 613.5,310.0 L613.5,310.3 612.5,310.3 L612.5,305.7 611.5,305.7 L611.5,303.7 610.5,303.7 L610.5,300.9 609.5,300.9 L609.5,303.1 608.5,303.1 L608.5,304.2 607.5,304.2 L607.5,307.0 606.5,307.0 L606.5,308.8 605.5,308.8 L605.5,309.0 604.5,309.0 L604.5,309.7 603.5,309.7 L603.5,307.1 602.5,307.1 L602.5,305.8 601.5,305.8 L601.5,307.1 600.5,307.1 L600.5,304.5 599.5,304.5 L599.5,301.9 598.5,301.9 L598.5,302.3 597.5,302.3 L597.5,305.8 596.5,305.8 L596.5,304.8 595.5,304.8 L595.5,306.8 594.5,306.8 L594.5,306.1 593.5,306.1 L593.5,310.3 592.5,310.3 L592.5,309.8 591.5,309.8 L591.5,313.0 590.5,313.0 L590.5,311.8 589.5,311.8 L589.5,308.7 588.5,308.7 L588.5,307.2 587.5,307.2 L587.5,304.1 586.5,304.1 L586.5,306.1 585.5,306.1 L585.5,303.7 584.5,303.7 L584.5,304.0 583.5,304.0 L583.5,305.8 582.5,305.8 L582.5,307.2 581.5,307.2 L581.5,306.4 580.5,306.4 L580.5,308.2 579.5,308.2 L579.5,309.2 578.5,309.2 L578.5,314.0 577.5,314.0 L577.5,308.6 576.5,308.6 L576.5,305.7 575.5,305.7 L575.5,304.6 574.5,304.6 L574.5,302.6 573.5,302.6 L573.5,303.8 572.5,303.8 L572.5,305.0 571.5,305.0 L571.5,304.1 570.5,304.1 L570.5,302.7 569.5,302.7 L569.5,305.9 568.5,305.9 L568.5,307.6 567.5,307.6 L567.5,308.7 566.5,308.7 L566.5,311.6 565.5,311.6 L565.5,313.2 564.5,313.2 L564.5,315.0 563.5,315.0 L563.5,311.8 562.5,311.8 L562.5,307.7 561.5,307.7 L561.5,309.2 560.5,309.2 L560.5,306.2 559.5,306.2 L559.5,304.8 558.5,304.8 L558.5,305.4 557.5,305.4 L557.5,302.2 556.5,302.2 L556.5,300.8 555.5,300.8 L555.5,305.2 554.5,305.2 L554.5,307.0 553.5,307.0 L553.5,306.2 552.5,306.2 L552.5,307.5 551.5,307.5 L551.5,307.3 550.5,307.3 L550.5,307.7 549.5,307.7 L549.5,308.8 548.5,308.8 L548.5,306.4 547.5,306.4 L547.5,304.4 546.5,304.4 L546.5,307.9 545.5,307.9 L545.5,302.7 544.5,302.7 L544.5,300.6 543.5,300.6 L543.5,302.0 542.5,302.0 L542.5,304.2 541.5,304.2 L541.5,306.4 540.5,306.4 L540.5,307.8 539.5,307.8 L539.5,311.6 538.5,311.6 L538.5,311.5 537.5,311.5 L537.5,309.9 536.5,309.9 L536.5,307.9 535.5,307.9 L535.5,307.3 534.5,307.3 L534.5,307.9 533.5,307.9 L533.5,306.5 532.5,306.5 L532.5,310.0 531.5,310.0 L531.5,309.2 530.5,309.2 L530.5,308.5 529.5,308.5 L529.5,313.9 528.5,313.9 L528.5,312.3 527.5,312.3 L527.5,307.0 526.5,307.0 L526.5,307.9 525.5,307.9 L525.5,306.1 524.5,306.1 L524.5,304.7 523.5,304.7 L523.5,301.5 522.5,301.5 L522.5,300.3 521.5,300.3 L521.5,304.8 520.5,304.8 L520.5,303.5 519.5,303.5 L519.5,311.5 518.5,311.5 L518.5,309.1 517.5,309.1 L517.5,311.2 516.5,311.2 L516.5,311.2 515.5,311.2 L515.5,309.0 514.5,309.0 L514.5,310.1 513.5,310.1 L513.5,306.7 512.5,306.7 L512.5,308.2 511.5,308.2 L511.5,304.4 510.5,304.4 L510.5,301.6 509.5,301.6 L509.5,301.0 508.5,301.0 L508.5,306.9 507.5,306.9 L507.5,310.7 506.5,310.7 L506.5,306.6 505.5,306.6 L505.5,307.9 504.5,307.9 L504.5,310.4 503.5,310.4 L503.5,312.2 502.5,312.2 L502.5,304.9 501.5,304.9 L501.5,302.7 500.5,302.7 L500.5,301.7 499.5,301.7 L499.5,303.4 498.5,303.4 L498.5,304.4 497.5,304.4 L497.5,303.2 496.5,303.2 L496.5,308.5 495.5,308.5 L495.5,304.5 494.5,304.5 L494.5,308.9 493.5,308.9 L493.5,308.2 492.5,308.2 L492.5,310.9 491.5,310.9 L491.5,309.1 490.5,309.1 L490.5,314.8 489.5,314.8 L489.5,307.8 488.5,307.8 L488.5,309.1 487.5,309.1 L487.5,307.6 486.5,307.6 L486.5,309.6 485.5,309.6 L485.5,302.5 484.5,302.5 L484.5,304.8 483.5,304.8 L483.5,305.2 482.5,305.2 L482.5,307.6 481.5,307.6 L481.5,305.6 480.5,305.6 L480.5,308.7 479.5,308.7 L479.5,308.0 478.5,308.0 L478.5,313.9 477.5,313.9 L477.5,311.5 476.5,311.5 L476.5,312.1 475.5,312.1 L475.5,311.0 474.5,311.0 L474.5,309.7 473.5,309.7 L473.5,310.7 472.5,310.7 L472.5,310.7 471.5,310.7 L471.5,306.4 470.5,306.4 L470.5,306.2 469.5,306.2 L469.5,308.6 468.5,308.6 L468.5,305.9 467.5,305.9 L467.5,305.0 466.5,305.0 L466.5,308.0 465.5,308.0 L465.5,307.8 464.5,307.8 L464.5,314.3 463.5,314.3 L463.5,310.0 462.5,310.0 L462.5,308.6 461.5,308.6 L461.5,310.6 460.5,310.6 L460.5,315.3 459.5,315.3 L459.5,308.4 458.5,308.4 L458.5,307.0 457.5,307.0 L457.5,309.2 456.5,309.2 L456.5,308.2 455.5,308.2 L455.5,305.6 454.5,305.6 L454.5,302.9 453.5,302.9 L453.5,304.3 452.5,304.3 L452.5,307.3 451.5,307.3 L451.5,308.6 450.5,308.6 L450.5,305.2 449.5,305.2 L449.5,307.1 448.5,307.1 L448.5,307.7 447.5,307.7 L447.5,315.1 446.5,315.1 L446.5,309.7 445.5,309.7 L445.5,308.1 444.5,308.1 L444.5,309.8 443.5,309.8 L443.5,306.9 442.5,306.9 L442.5,306.5 441.5,306.5 L441.5,306.5 440.5,306.5 L440.5,301.5 439.5,301.5 L439.5,306.7 438.5,306.7 L438.5,307.7 437.5,307.7 L437.5,311.5 436.5,311.5 L436.5,308.5 435.5,308.5 L435.5,313.0 434.5,313.0 L434.5,311.6 433.5,311.6 L433.5,315.3 432.5,315.3 L432.5,314.6 431.5,314.6 L431.5,312.0 430.5,312.0 L430.5,310.9 429.5,310.9 L429.5,309.7 428.5,309.7 L428.5,306.9 427.5,306.9 L427.5,307.2 426.5,307.2 L426.5,305.4 425.5,305.4 L425.5,304.8 424.5,304.8 L424.5,303.1 423.5,303.1 L423.5,304.6 422.5,304.6 L422.5,308.5 421.5,308.5 L421.5,308.0 420.5,308.0 L420.5,307.5 419.5,307.5 L419.5,310.3 418.5,310.3 L418.5,310.2 417.5,310.2 L417.5,309.6 416.5,309.6 L416.5,304.1 415.5,304.1 L415.5,305.2 414.5,305.2 L414.5,302.7 413.5,302.7 L413.5,303.2 412.5,303.2 L412.5,305.7 411.5,305.7 L411.5,306.1 410.5,306.1 L410.5,305.1 409.5,305.1 L409.5,308.5 408.5,308.5 L408.5,306.7 407.5,306.7 L407.5,311.5 406.5,311.5 L406.5,308.1 405.5,308.1 L405.5,306.1 404.5,306.1 L404.5,303.2 403.5,303.2 L403.5,303.4 402.5,303.4 L402.5,301.1 401.5,301.1 L401.5,303.0 400.5,303.0 L400.5,304.5 399.5,304.5 L399.5,306.6 398.5,306.6 L398.5,307.8 397.5,307.8 L397.5,307.7 396.5,307.7 L396.5,309.6 395.5,309.6 L395.5,309.7 394.5,309.7 L394.5,310.4 393.5,310.4 L393.5,310.7 392.5,310.7 L392.5,311.7 391.5,311.7 L391.5,307.0 390.5,307.0 L390.5,305.6 389.5,305.6 L389.5,305.4 388.5,305.4 L388.5,306.3 387.5,306.3 L387.5,308.8 386.5,308.8 L386.5,310.4 385.5,310.4 L385.5,310.1 384.5,310.1 L384.5,310.0 383.5,310.0 L383.5,308.2 382.5,308.2 L382.5,310.0 381.5,310.0 L381.5,307.5 380.5,307.5 L380.5,306.4 379.5,306.4 L379.5,310.1 378.5,310.1 L378.5,305.6 377.5,305.6 L377.5,304.5 376.5,304.5 L376.5,310.5 375.5,310.5 L375.5,309.6 374.5,309.6 L374.5,310.8 373.5,310.8 L373.5,309.1 372.5,309.1 L372.5,310.4 371.5,310.4 L371.5,311.2 370.5,311.2 L370.5,311.7 369.5,311.7 L369.5,309.6 368.5,309.6 L368.5,305.0 367.5,305.0 L367.5,304.4 366.5,304.4 L366.5,306.1 365.5,306.1 L365.5,303.9 364.5,303.9 L364.5,306.0 363.5,306.0 L363.5,305.8 362.5,305.8 L362.5,307.8 361.5,307.8 L361.5,309.3 360.5,309.3 L360.5,310.0 359.5,310.0 L359.5,311.1 358.5,311.1 L358.5,309.7 357.5,309.7 L357.5,311.8 356.5,311.8 L356.5,309.8 355.5,309.8 L355.5,307.2 354.5,307.2 L354.5,308.4 353.5,308.4 L353.5,303.5 352.5,303.5 L352.5,308.1 351.5,308.1 L351.5,302.1 350.5,302.1 L350.5,301.4 349.5,301.4 L349.5,303.5 348.5,303.5 L348.5,303.7 347.5,303.7 L347.5,303.9 346.5,303.9 L346.5,307.9 345.5,307.9 L345.5,311.3 344.5,311.3 L344.5,311.6 343.5,311.6 L343.5,312.4 342.5,312.4 L342.5,310.3 341.5,310.3 L341.5,308.4 340.5,308.4 L340.5,309.1 339.5,309.1 L339.5,306.0 338.5,306.0 L338.5,305.5 337.5,305.5 L337.5,303.3 336.5,303.3 L336.5,300.7 335.5,300.7 L335.5,300.5 334.5,300.5 L334.5,302.8 333.5,302.8 L333.5,304.6 332.5,304.6 L332.5,305.8 331.5,305.8 L331.5,307.0 330.5,307.0 L330.5,309.4 329.5,309.4 L329.5,310.2 328.5,310.2 L328.5,307.9 327.5,307.9 L327.5,308.0 326.5,308.0 L326.5,308.9 325.5,308.9 L325.5,305.0 324.5,305.0 L324.5,303.2 323.5,303.2 L323.5,300.9 322.5,300.9 L322.5,303.9 321.5,303.9 L321.5,306.5 320.5,306.5 L320.5,306.4 319.5,306.4 L319.5,307.9 318.5,307.9 L318.5,309.9 317.5,309.9 L317.5,315.8 316.5,315.8 L316.5,310.2 315.5,310.2 L315.5,310.9 314.5,310.9 L314.5,307.8 313.5,307.8 L313.5,307.4 312.5,307.4 L312.5,304.1 311.5,304.1 L311.5,306.0 310.5,306.0 L310.5,300.3 309.5,300.3 L309.5,303.0 308.5,303.0 L308.5,305.9 307.5,305.9 L307.5,302.7 306.5,302.7 L306.5,306.2 305.5,306.2 L305.5,306.9 304.5,306.9 L304.5,308.5 303.5,308.5 L303.5,310.6 302.5,310.6 L302.5,306.6 301.5,306.6 L301.5,308.2 300.5,308.2 L300.5,305.4 299.5,305.4 L299.5,304.7 298.5,304.7 L298.5,303.7 297.5,303.7 L297.5,303.6 296.5,303.6 L296.5,304.4 295.5,304.4 L295.5,305.7 294.5,305.7 L294.5,304.8 293.5,304.8 L293.5,305.8 292.5,305.8 L292.5,309.2 291.5,309.2 L291.5,310.5 290.5,310.5 L290.5,313.4 289.5,313.4 L289.5,311.4 288.5,311.4 L288.5,312.9 287.5,312.9 L287.5,312.5 286.5,312.5 L286.5,309.7 285.5,309.7 L285.5,310.0 284.5,310.0 L284.5,307.1 283.5,307.1 L283.5,307.7 282.5,307.7 L282.5,309.1 281.5,309.1 L281.5,306.5 280.5,306.5 L280.5,304.5 279.5,304.5 L279.5,306.9 278.5,306.9 L278.5,308.5 277.5,308.5 L277.5,307.3 276.5,307.3 L276.5,311.4 275.5,311.4 L275.5,310.8 274.5,310.8 L274.5,307.0 273.5,307.0 L273.5,310.0 272.5,310.0 L272.5,306.8 271.5,306.8 L271.5,304.7 270.5,304.7 L270.5,302.9 269.5,302.9 L269.5,304.8 268.5,304.8 L268.5,306.7 267.5,306.7 L267.5,303.4 266.5,303.4 L266.5,304.9 265.5,304.9 L265.5,307.6 264.5,307.6 L264.5,311.9 263.5,311.9 L263.5,308.8 262.5,308.8 L262.5,308.7 261.5,308.7 L261.5,309.4 260.5,309.4 L260.5,306.4 259.5,306.4 L259.5,303.3 258.5,303.3 L258.5,306.8 257.5,306.8 L257.5,307.3 256.5,307.3 L256.5,307.5 255.5,307.5 L255.5,309.7 254.5,309.7 L254.5,310.0 253.5,310.0 L253.5,308.4 252.5,308.4 L252.5,313.7 251.5,313.7 L251.5,310.1 250.5,310.1 L250.5,309.5 249.5,309.5 L249.5,308.6 248.5,308.6 L248.5,313.2 247.5,313.2 L247.5,309.1 246.5,309.1 L246.5,306.4 245.5,306.4 L245.5,302.4 244.5,302.4 L244.5,304.3 243.5,304.3 L243.5,305.9 242.5,305.9 L242.5,306.9 241.5,306.9 L241.5,310.6 240.5,310.6 L240.5,308.8 239.5,308.8 L239.5,309.8 238.5,309.8 L238.5,311.7 237.5,311.7 L237.5,316.1 236.5,316.1 L236.5,312.8 235.5,312.8 L235.5,311.5 234.5,311.5 L234.5,310.1 233.5,310.1 L233.5,311.0 232.5,311.0 L232.5,309.7 231.5,309.7 L231.5,305.4 230.5,305.4 L230.5,305.7 229.5,305.7 L229.5,305.2 228.5,305.2 L228.5,306.6 227.5,306.6 L227.5,306.1 226.5,306.1 L226.5,309.3 225.5,309.3 L225.5,313.8 224.5,313.8 L224.5,311.8 223.5,311.8 L223.5,308.9 222.5,308.9 L222.5,311.7 221.5,311.7 L221.5,312.4 220.5,312.4 L220.5,309.3 219.5,309.3 L219.5,308.3 218.5,308.3 L218.5,306.0 217.5,306.0 L217.5,304.6 216.5,304.6 L216.5,301.5 215.5,301.5 L215.5,302.2 214.5,302.2 L214.5,299.7 213.5,299.7 L213.5,306.1 212.5,306.1 L212.5,304.2 211.5,304.2 L211.5,305.2 210.5,305.2 L210.5,307.9 209.5,307.9 L209.5,308.9 208.5,308.9 L208.5,310.1 207.5,310.1 L207.5,310.6 206.5,310.6 L206.5,309.9 205.5,309.9 L205.5,307.6 204.5,307.6 L204.5,308.3 203.5,308.3 L203.5,307.9 202.5,307.9 L202.5,304.3 201.5,304.3 L201.5,304.5 200.5,304.5 L200.5,304.6 199.5,304.6 L199.5,308.2 198.5,308.2 L198.5,310.9 197.5,310.9 L197.5,308.8 196.5,308.8 L196.5,307.7 195.5,307.7 L195.5,308.4 194.5,308.4 L194.5,304.2 193.5,304.2 L193.5,304.5 192.5,304.5 L192.5,303.1 191.5,303.1 L191.5,302.2 190.5,302.2 L190.5,303.3 189.5,303.3 L189.5,305.3 188.5,305.3 L188.5,306.4 187.5,306.4 L187.5,309.7 186.5,309.7 L186.5,309.2 185.5,309.2 L185.5,314.9 184.5,314.9 L184.5,310.2 183.5,310.2 L183.5,309.8 182.5,309.8 L182.5,307.7 181.5,307.7 L181.5,309.5 180.5,309.5 L180.5,306.7 179.5,306.7 L179.5,306.4 178.5,306.4 L178.5,306.2 177.5,306.2 L177.5,304.2 176.5,304.2 L176.5,304.9 175.5,304.9 L175.5,307.7 174.5,307.7 L174.5,305.6 173.5,305.6 L173.5,313.3 172.5,313.3 L172.5,310.7 171.5,310.7 L171.5,313.1 170.5,313.1 L170.5,313.5 169.5,313.5 L169.5,310.1 168.5,310.1 L168.5,310.0 167.5,310.0 L167.5,306.8 166.5,306.8 L166.5,309.3 165.5,309.3 L165.5,308.3 164.5,308.3 L164.5,304.0 163.5,304.0 L163.5,308.0 162.5,308.0 L162.5,307.1 161.5,307.1 L161.5,308.7 160.5,308.7 L160.5,310.7 159.5,310.7 L159.5,311.7 158.5,311.7 L158.5,315.1 157.5,315.1 L157.5,312.8 156.5,312.8 L156.5,309.3 155.5,309.3 L155.5,312.2 154.5,312.2 L154.5,309.6 153.5,309.6 L153.5,308.2 152.5,308.2 L152.5,309.7 151.5,309.7 L151.5,304.2 150.5,304.2 L150.5,307.6 149.5,307.6 L149.5,303.3 148.5,303.3 L148.5,302.0 147.5,302.0 L147.5,302.9 146.5,302.9 L146.5,307.6 145.5,307.6 L145.5,309.3 144.5,309.3 L144.5,308.9 143.5,308.9 L143.5,311.4 142.5,311.4 L142.5,311.0 141.5,311.0 L141.5,313.3 140.5,313.3 L140.5,310.9 139.5,310.9 L139.5,310.6 138.5,310.6 L138.5,308.8 137.5,308.8 L137.5,307.7 136.5,307.7 L136.5,306.7 135.5,306.7 L135.5,306.6 134.5,306.6 L134.5,306.5 133.5,306.5 L133.5,303.4 132.5,303.4 L132.5,303.4 131.5,303.4 L131.5,305.3 130.5,305.3 L130.5,306.6 129.5,306.6 L129.5,305.2 128.5,305.2 L128.5,305.1 127.5,305.1 L127.5,309.6 126.5,309.6 L126.5,307.7 125.5,307.7 L125.5,304.8 124.5,304.8 L124.5,303.3 123.5,303.3 L123.5,302.4 122.5,302.4 L122.5,302.1 121.5,302.1 L121.5,301.6 120.5,301.6 L120.5,305.0 119.5,305.0 L119.5,306.2 118.5,306.2 L118.5,305.0 117.5,305.0 L117.5,309.5 116.5,309.5 L116.5,307.2 115.5,307.2 L115.5,312.1 114.5,312.1 L114.5,312.0 113.5,312.0 L113.5,314.3 112.5,314.3 L112.5,306.4 111.5,306.4 L111.5,310.8 110.5,310.8 L110.5,307.0 109.5,307.0 L109.5,305.1 108.5,305.1 L108.5,306.3 107.5,306.3 L107.5,299.7 106.5,299.7 L106.5,304.5 105.5,304.5 L105.5,300.9 104.5,300.9 L104.5,306.9 103.5,306.9 L103.5,308.9 102.5,308.9 L102.5,309.5 101.5,309.5 L101.5,309.5 100.5,309.5 L100.5,310.3 99.5,310.3 L99.5,309.8 98.5,309.8 L98.5,312.2 97.5,312.2 L97.5,309.5 96.5,309.5 L96.5,309.1 95.5,309.1 L95.5,306.2 94.5,306.2 L94.5,310.5 93.5,310.5 L93.5,305.4 92.5,305.4 L92.5,305.5 91.5,305.5 L91.5,303.8 90.5,303.8 L90.5,302.9 89.5,302.9 L89.5,306.2 88.5,306.2 L88.5,312.7 87.5,312.7 L87.5,308.1 86.5,308.1 L86.5,310.0 85.5,310.0 L85.5,310.5 84.5,310.5 L84.5,310.6 83.5,310.6 L83.5,312.1 82.5,312.1 Z" fill="#90980a" opacity="0.42"/>
<path d="M82.5,170.0 83.5,170.0 L83.5,171.9 84.5,171.9 L84.5,173.0 85.5,173.0 L85.5,172.4 86.5,172.4 L86.5,172.3 87.5,172.3 L87.5,174.0 88.5,174.0 L88.5,175.0 89.5,175.0 L89.5,175.6 90.5,175.6 L90.5,173.2 91.5,173.2 L91.5,172.5 92.5,172.5 L92.5,173.5 93.5,173.5 L93.5,172.7 94.5,172.7 L94.5,172.9 95.5,172.9 L95.5,171.8 96.5,171.8 L96.5,170.4 97.5,170.4 L97.5,169.6 98.5,169.6 L98.5,171.3 99.5,171.3 L99.5,168.4 100.5,168.4 L100.5,167.4 101.5,167.4 L101.5,166.5 102.5,166.5 L102.5,167.1 103.5,167.1 L103.5,167.1 104.5,167.1 L104.5,166.7 105.5,166.7 L105.5,167.0 106.5,167.0 L106.5,167.2 107.5,167.2 L107.5,167.6 108.5,167.6 L108.5,167.9 109.5,167.9 L109.5,167.2 110.5,167.2 L110.5,165.6 111.5,165.6 L111.5,167.6 112.5,167.6 L112.5,165.9 113.5,165.9 L113.5,166.9 114.5,166.9 L114.5,165.8 115.5,165.8 L115.5,167.0 116.5,167.0 L116.5,166.4 117.5,166.4 L117.5,167.2 118.5,167.2 L118.5,169.6 119.5,169.6 L119.5,167.0 120.5,167.0 L120.5,167.7 121.5,167.7 L121.5,165.9 122.5,165.9 L122.5,166.8 123.5,166.8 L123.5,167.5 124.5,167.5 L124.5,166.9 125.5,166.9 L125.5,167.3 126.5,167.3 L126.5,167.1 127.5,167.1 L127.5,166.2 128.5,166.2 L128.5,167.5 129.5,167.5 L129.5,167.0 130.5,167.0 L130.5,169.7 131.5,169.7 L131.5,168.4 132.5,168.4 L132.5,170.0 133.5,170.0 L133.5,170.1 134.5,170.1 L134.5,171.5 135.5,171.5 L135.5,170.8 136.5,170.8 L136.5,172.7 137.5,172.7 L137.5,172.4 138.5,172.4 L138.5,174.2 139.5,174.2 L139.5,174.3 140.5,174.3 L140.5,174.5 141.5,174.5 L141.5,174.4 142.5,174.4 L142.5,175.0 143.5,175.0 L143.5,174.1 144.5,174.1 L144.5,174.5 145.5,174.5 L145.5,172.2 146.5,172.2 L146.5,172.4 147.5,172.4 L147.5,171.7 148.5,171.7 L148.5,170.9 149.5,170.9 L149.5,170.2 150.5,170.2 L150.5,169.6 151.5,169.6 L151.5,168.4 152.5,168.4 L152.5,167.4 153.5,167.4 L153.5,167.3 154.5,167.3 L154.5,167.5 155.5,167.5 L155.5,168.2 156.5,168.2 L156.5,167.8 157.5,167.8 L157.5,167.8 158.5,167.8 L158.5,167.6 159.5,167.6 L159.5,167.6 160.5,167.6 L160.5,167.1 161.5,167.1 L161.5,167.6 162.5,167.6 L162.5,168.4 163.5,168.4 L163.5,166.7 164.5,166.7 L164.5,166.4 165.5,166.4 L165.5,168.6 166.5,168.6 L166.5,167.2 167.5,167.2 L167.5,167.8 168.5,167.8 L168.5,167.7 169.5,167.7 L169.5,166.1 170.5,166.1 L170.5,168.9 171.5,168.9 L171.5,168.4 172.5,168.4 L172.5,167.1 173.5,167.1 L173.5,167.6 174.5,167.6 L174.5,167.1 175.5,167.1 L175.5,166.3 176.5,166.3 L176.5,166.9 177.5,166.9 L177.5,167.3 178.5,167.3 L178.5,167.9 179.5,167.9 L179.5,168.0 180.5,168.0 L180.5,168.1 181.5,168.1 L181.5,169.7 182.5,169.7 L182.5,168.7 183.5,168.7 L183.5,170.5 184.5,170.5 L184.5,171.4 185.5,171.4 L185.5,170.9 186.5,170.9 L186.5,170.3 187.5,170.3 L187.5,171.6 188.5,171.6 L188.5,173.2 189.5,173.2 L189.5,174.0 190.5,174.0 L190.5,175.4 191.5,175.4 L191.5,174.0 192.5,174.0 L192.5,174.6 193.5,174.6 L193.5,174.5 194.5,174.5 L194.5,173.2 195.5,173.2 L195.5,170.8 196.5,170.8 L196.5,172.8 197.5,172.8 L197.5,173.3 198.5,173.3 L198.5,171.7 199.5,171.7 L199.5,169.5 200.5,169.5 L200.5,169.3 201.5,169.3 L201.5,169.2 202.5,169.2 L202.5,170.4 203.5,170.4 L203.5,168.3 204.5,168.3 L204.5,167.3 205.5,167.3 L205.5,168.2 206.5,168.2 L206.5,166.9 207.5,166.9 L207.5,168.5 208.5,168.5 L208.5,166.5 209.5,166.5 L209.5,166.6 210.5,166.6 L210.5,167.6 211.5,167.6 L211.5,168.1 212.5,168.1 L212.5,167.5 213.5,167.5 L213.5,167.2 214.5,167.2 L214.5,165.5 215.5,165.5 L215.5,166.4 216.5,166.4 L216.5,166.5 217.5,166.5 L217.5,166.6 218.5,166.6 L218.5,167.5 219.5,167.5 L219.5,166.7 220.5,166.7 L220.5,167.6 221.5,167.6 L221.5,167.1 222.5,167.1 L222.5,166.7 223.5,166.7 L223.5,167.1 224.5,167.1 L224.5,167.3 225.5,167.3 L225.5,167.7 226.5,167.7 L226.5,166.6 227.5,166.6 L227.5,166.8 228.5,166.8 L228.5,165.9 229.5,165.9 L229.5,168.5 230.5,168.5 L230.5,169.0 231.5,169.0 L231.5,168.3 232.5,168.3 L232.5,168.6 233.5,168.6 L233.5,168.7 234.5,168.7 L234.5,170.4 235.5,170.4 L235.5,171.0 236.5,171.0 L236.5,173.2 237.5,173.2 L237.5,172.3 238.5,172.3 L238.5,172.1 239.5,172.1 L239.5,171.4 240.5,171.4 L240.5,175.1 241.5,175.1 L241.5,174.7 242.5,174.7 L242.5,173.5 243.5,173.5 L243.5,174.3 244.5,174.3 L244.5,172.3 245.5,172.3 L245.5,175.8 246.5,175.8 L246.5,173.2 247.5,173.2 L247.5,172.2 248.5,172.2 L248.5,171.0 249.5,171.0 L249.5,168.8 250.5,168.8 L250.5,169.8 251.5,169.8 L251.5,168.0 252.5,168.0 L252.5,169.1 253.5,169.1 L253.5,166.3 254.5,166.3 L254.5,166.7 255.5,166.7 L255.5,168.0 256.5,168.0 L256.5,168.3 257.5,168.3 L257.5,166.1 258.5,166.1 L258.5,165.8 259.5,165.8 L259.5,167.7 260.5,167.7 L260.5,167.7 261.5,167.7 L261.5,166.2 262.5,166.2 L262.5,166.4 263.5,166.4 L263.5,166.4 264.5,166.4 L264.5,166.0 265.5,166.0 L265.5,166.5 266.5,166.5 L266.5,168.0 267.5,168.0 L267.5,167.6 268.5,167.6 L268.5,168.6 269.5,168.6 L269.5,166.9 270.5,166.9 L270.5,166.9 271.5,166.9 L271.5,166.2 272.5,166.2 L272.5,166.9 273.5,166.9 L273.5,165.9 274.5,165.9 L274.5,165.6 275.5,165.6 L275.5,167.6 276.5,167.6 L276.5,168.2 277.5,168.2 L277.5,167.7 278.5,167.7 L278.5,168.7 279.5,168.7 L279.5,168.4 280.5,168.4 L280.5,168.3 281.5,168.3 L281.5,169.5 282.5,169.5 L282.5,169.8 283.5,169.8 L283.5,169.8 284.5,169.8 L284.5,170.0 285.5,170.0 L285.5,170.7 286.5,170.7 L286.5,172.5 287.5,172.5 L287.5,173.3 288.5,173.3 L288.5,173.4 289.5,173.4 L289.5,175.5 290.5,175.5 L290.5,175.1 291.5,175.1 L291.5,174.9 292.5,174.9 L292.5,174.7 293.5,174.7 L293.5,172.5 294.5,172.5 L294.5,171.0 295.5,171.0 L295.5,172.5 296.5,172.5 L296.5,170.8 297.5,170.8 L297.5,171.7 298.5,171.7 L298.5,170.3 299.5,170.3 L299.5,170.3 300.5,170.3 L300.5,169.5 301.5,169.5 L301.5,166.6 302.5,166.6 L302.5,168.2 303.5,168.2 L303.5,166.5 304.5,166.5 L304.5,166.4 305.5,166.4 L305.5,166.7 306.5,166.7 L306.5,167.6 307.5,167.6 L307.5,167.7 308.5,167.7 L308.5,167.8 309.5,167.8 L309.5,165.7 310.5,165.7 L310.5,166.5 311.5,166.5 L311.5,165.1 312.5,165.1 L312.5,166.9 313.5,166.9 L313.5,167.5 314.5,167.5 L314.5,166.4 315.5,166.4 L315.5,167.2 316.5,167.2 L316.5,167.2 317.5,167.2 L317.5,167.8 318.5,167.8 L318.5,166.3 319.5,166.3 L319.5,166.3 320.5,166.3 L320.5,166.4 321.5,166.4 L321.5,168.4 322.5,168.4 L322.5,167.9 323.5,167.9 L323.5,166.9 324.5,166.9 L324.5,167.2 325.5,167.2 L325.5,167.1 326.5,167.1 L326.5,167.2 327.5,167.2 L327.5,166.8 328.5,166.8 L328.5,166.7 329.5,166.7 L329.5,166.0 330.5,166.0 L330.5,166.8 331.5,166.8 L331.5,169.2 332.5,169.2 L332.5,169.0 333.5,169.0 L333.5,169.2 334.5,169.2 L334.5,169.6 335.5,169.6 L335.5,170.4 336.5,170.4 L336.5,171.3 337.5,171.3 L337.5,171.1 338.5,171.1 L338.5,172.4 339.5,172.4 L339.5,173.0 340.5,173.0 L340.5,172.9 341.5,172.9 L341.5,173.4 342.5,173.4 L342.5,173.9 343.5,173.9 L343.5,173.8 344.5,173.8 L344.5,174.8 345.5,174.8 L345.5,171.6 346.5,171.6 L346.5,172.6 347.5,172.6 L347.5,171.7 348.5,171.7 L348.5,171.1 349.5,171.1 L349.5,171.1 350.5,171.1 L350.5,171.3 351.5,171.3 L351.5,169.8 352.5,169.8 L352.5,169.0 353.5,169.0 L353.5,168.0 354.5,168.0 L354.5,167.8 355.5,167.8 L355.5,168.0 356.5,168.0 L356.5,166.7 357.5,166.7 L357.5,166.1 358.5,166.1 L358.5,166.0 359.5,166.0 L359.5,166.1 360.5,166.1 L360.5,165.9 361.5,165.9 L361.5,167.9 362.5,167.9 L362.5,167.3 363.5,167.3 L363.5,166.8 364.5,166.8 L364.5,168.2 365.5,168.2 L365.5,166.5 366.5,166.5 L366.5,167.6 367.5,167.6 L367.5,167.6 368.5,167.6 L368.5,165.8 369.5,165.8 L369.5,165.8 370.5,165.8 L370.5,166.3 371.5,166.3 L371.5,167.7 372.5,167.7 L372.5,168.0 373.5,168.0 L373.5,166.0 374.5,166.0 L374.5,167.8 375.5,167.8 L375.5,166.7 376.5,166.7 L376.5,166.7 377.5,166.7 L377.5,166.6 378.5,166.6 L378.5,166.9 379.5,166.9 L379.5,166.3 380.5,166.3 L380.5,167.6 381.5,167.6 L381.5,168.0 382.5,168.0 L382.5,170.0 383.5,170.0 L383.5,171.9 384.5,171.9 L384.5,173.0 385.5,173.0 L385.5,171.2 386.5,171.2 L386.5,170.7 387.5,170.7 L387.5,172.4 388.5,172.4 L388.5,172.6 389.5,172.6 L389.5,175.5 390.5,175.5 L390.5,175.0 391.5,175.0 L391.5,174.3 392.5,174.3 L392.5,175.0 393.5,175.0 L393.5,174.0 394.5,174.0 L394.5,171.7 395.5,171.7 L395.5,172.0 396.5,172.0 L396.5,171.6 397.5,171.6 L397.5,171.2 398.5,171.2 L398.5,170.6 399.5,170.6 L399.5,169.7 400.5,169.7 L400.5,169.5 401.5,169.5 L401.5,168.2 402.5,168.2 L402.5,167.4 403.5,167.4 L403.5,168.7 404.5,168.7 L404.5,167.3 405.5,167.3 L405.5,167.4 406.5,167.4 L406.5,165.7 407.5,165.7 L407.5,166.9 408.5,166.9 L408.5,167.7 409.5,167.7 L409.5,166.0 410.5,166.0 L410.5,167.9 411.5,167.9 L411.5,166.7 412.5,166.7 L412.5,167.3 413.5,167.3 L413.5,166.9 414.5,166.9 L414.5,167.2 415.5,167.2 L415.5,168.0 416.5,168.0 L416.5,166.7 417.5,166.7 L417.5,168.3 418.5,168.3 L418.5,166.4 419.5,166.4 L419.5,166.3 420.5,166.3 L420.5,167.6 421.5,167.6 L421.5,166.1 422.5,166.1 L422.5,166.7 423.5,166.7 L423.5,167.7 424.5,167.7 L424.5,168.0 425.5,168.0 L425.5,165.6 426.5,165.6 L426.5,167.4 427.5,167.4 L427.5,168.5 428.5,168.5 L428.5,168.0 429.5,168.0 L429.5,166.8 430.5,166.8 L430.5,166.5 431.5,166.5 L431.5,166.8 432.5,166.8 L432.5,166.4 433.5,166.4 L433.5,167.7 434.5,167.7 L434.5,168.4 435.5,168.4 L435.5,169.0 436.5,169.0 L436.5,170.7 437.5,170.7 L437.5,170.2 438.5,170.2 L438.5,169.8 439.5,169.8 L439.5,172.5 440.5,172.5 L440.5,171.4 441.5,171.4 L441.5,172.5 442.5,172.5 L442.5,173.4 443.5,173.4 L443.5,173.8 444.5,173.8 L444.5,173.9 445.5,173.9 L445.5,174.5 446.5,174.5 L446.5,175.8 447.5,175.8 L447.5,173.0 448.5,173.0 L448.5,172.7 449.5,172.7 L449.5,173.1 450.5,173.1 L450.5,172.2 451.5,172.2 L451.5,171.6 452.5,171.6 L452.5,171.1 453.5,171.1 L453.5,168.2 454.5,168.2 L454.5,168.5 455.5,168.5 L455.5,168.6 456.5,168.6 L456.5,168.3 457.5,168.3 L457.5,168.3 458.5,168.3 L458.5,167.4 459.5,167.4 L459.5,166.8 460.5,166.8 L460.5,167.0 461.5,167.0 L461.5,166.8 462.5,166.8 L462.5,167.2 463.5,167.2 L463.5,167.5 464.5,167.5 L464.5,166.7 465.5,166.7 L465.5,166.3 466.5,166.3 L466.5,166.3 467.5,166.3 L467.5,167.9 468.5,167.9 L468.5,168.0 469.5,168.0 L469.5,167.8 470.5,167.8 L470.5,167.7 471.5,167.7 L471.5,167.7 472.5,167.7 L472.5,167.0 473.5,167.0 L473.5,167.5 474.5,167.5 L474.5,166.2 475.5,166.2 L475.5,166.8 476.5,166.8 L476.5,166.4 477.5,166.4 L477.5,167.6 478.5,167.6 L478.5,166.7 479.5,166.7 L479.5,167.7 480.5,167.7 L480.5,168.7 481.5,168.7 L481.5,170.1 482.5,170.1 L482.5,169.0 483.5,169.0 L483.5,169.5 484.5,169.5 L484.5,171.5 485.5,171.5 L485.5,170.6 486.5,170.6 L486.5,172.4 487.5,172.4 L487.5,172.2 488.5,172.2 L488.5,173.2 489.5,173.2 L489.5,172.5 490.5,172.5 L490.5,175.1 491.5,175.1 L491.5,174.4 492.5,174.4 L492.5,173.5 493.5,173.5 L493.5,175.3 494.5,175.3 L494.5,173.6 495.5,173.6 L495.5,175.2 496.5,175.2 L496.5,172.1 497.5,172.1 L497.5,170.9 498.5,170.9 L498.5,170.6 499.5,170.6 L499.5,171.2 500.5,171.2 L500.5,169.3 501.5,169.3 L501.5,169.1 502.5,169.1 L502.5,168.5 503.5,168.5 L503.5,166.7 504.5,166.7 L504.5,167.1 505.5,167.1 L505.5,166.6 506.5,166.6 L506.5,166.0 507.5,166.0 L507.5,167.7 508.5,167.7 L508.5,167.5 509.5,167.5 L509.5,167.1 510.5,167.1 L510.5,166.3 511.5,166.3 L511.5,165.4 512.5,165.4 L512.5,167.4 513.5,167.4 L513.5,166.9 514.5,166.9 L514.5,165.7 515.5,165.7 L515.5,167.0 516.5,167.0 L516.5,165.8 517.5,165.8 L517.5,167.0 518.5,167.0 L518.5,167.1 519.5,167.1 L519.5,167.3 520.5,167.3 L520.5,167.2 521.5,167.2 L521.5,167.1 522.5,167.1 L522.5,166.1 523.5,166.1 L523.5,166.7 524.5,166.7 L524.5,166.6 525.5,166.6 L525.5,166.8 526.5,166.8 L526.5,167.2 527.5,167.2 L527.5,167.5 528.5,167.5 L528.5,168.3 529.5,168.3 L529.5,164.9 530.5,164.9 L530.5,167.3 531.5,167.3 L531.5,167.5 532.5,167.5 L532.5,170.1 533.5,170.1 L533.5,169.6 534.5,169.6 L534.5,168.1 535.5,168.1 L535.5,170.4 536.5,170.4 L536.5,170.3 537.5,170.3 L537.5,172.1 538.5,172.1 L538.5,171.1 539.5,171.1 L539.5,172.5 540.5,172.5 L540.5,173.0 541.5,173.0 L541.5,173.7 542.5,173.7 L542.5,173.9 543.5,173.9 L543.5,173.5 544.5,173.5 L544.5,174.8 545.5,174.8 L545.5,174.6 546.5,174.6 L546.5,173.1 547.5,173.1 L547.5,171.7 548.5,171.7 L548.5,172.1 549.5,172.1 L549.5,171.8 550.5,171.8 L550.5,170.6 551.5,170.6 L551.5,170.1 552.5,170.1 L552.5,170.6 553.5,170.6 L553.5,168.0 554.5,168.0 L554.5,167.8 555.5,167.8 L555.5,166.1 556.5,166.1 L556.5,166.4 557.5,166.4 L557.5,166.4 558.5,166.4 L558.5,166.2 559.5,166.2 L559.5,166.4 560.5,166.4 L560.5,168.4 561.5,168.4 L561.5,166.8 562.5,166.8 L562.5,166.9 563.5,166.9 L563.5,168.8 564.5,168.8 L564.5,167.0 565.5,167.0 L565.5,165.6 566.5,165.6 L566.5,167.3 567.5,167.3 L567.5,166.3 568.5,166.3 L568.5,168.3 569.5,168.3 L569.5,166.0 570.5,166.0 L570.5,166.5 571.5,166.5 L571.5,165.7 572.5,165.7 L572.5,167.1 573.5,167.1 L573.5,166.2 574.5,166.2 L574.5,166.9 575.5,166.9 L575.5,166.7 576.5,166.7 L576.5,166.5 577.5,166.5 L577.5,167.8 578.5,167.8 L578.5,167.9 579.5,167.9 L579.5,167.8 580.5,167.8 L580.5,167.7 581.5,167.7 L581.5,168.1 582.5,168.1 L582.5,169.8 583.5,169.8 L583.5,172.1 584.5,172.1 L584.5,170.5 585.5,170.5 L585.5,170.8 586.5,170.8 L586.5,171.5 587.5,171.5 L587.5,171.8 588.5,171.8 L588.5,172.5 589.5,172.5 L589.5,173.8 590.5,173.8 L590.5,175.7 591.5,175.7 L591.5,174.8 592.5,174.8 L592.5,173.8 593.5,173.8 L593.5,172.3 594.5,172.3 L594.5,173.2 595.5,173.2 L595.5,172.4 596.5,172.4 L596.5,170.8 597.5,170.8 L597.5,170.3 598.5,170.3 L598.5,170.5 599.5,170.5 L599.5,170.7 600.5,170.7 L600.5,169.8 601.5,169.8 L601.5,168.9 602.5,168.9 L602.5,167.8 603.5,167.8 L603.5,167.7 604.5,167.7 L604.5,167.0 605.5,167.0 L605.5,168.7 606.5,168.7 L606.5,166.1 607.5,166.1 L607.5,166.7 608.5,166.7 L608.5,168.0 609.5,168.0 L609.5,166.8 610.5,166.8 L610.5,168.1 611.5,168.1 L611.5,167.0 612.5,167.0 L612.5,167.1 613.5,167.1 L613.5,166.7 614.5,166.7 L614.5,165.9 615.5,165.9 L615.5,166.2 616.5,166.2 L616.5,168.8 617.5,168.8 L617.5,167.5 618.5,167.5 L618.5,167.5 619.5,167.5 L619.5,167.8 620.5,167.8 L620.5,167.5 621.5,167.5 L621.5,167.8 622.5,167.8 L622.5,166.8 623.5,166.8 L623.5,166.8 624.5,166.8 L624.5,167.8 625.5,167.8 L625.5,166.7 626.5,166.7 L626.5,165.9 627.5,165.9 L627.5,166.8 628.5,166.8 L628.5,166.6 629.5,166.6 L629.5,167.5 630.5,167.5 L630.5,167.0 631.5,167.0 L631.5,167.4 632.5,167.4 L632.5,168.6 633.5,168.6 L633.5,170.7 634.5,170.7 L634.5,170.0 635.5,170.0 L635.5,170.8 636.5,170.8 L636.5,171.3 637.5,171.3 L637.5,172.2 638.5,172.2 L638.5,173.3 639.5,173.3 L639.5,174.3 640.5,174.3 L640.5,172.5 641.5,172.5 L641.5,175.5 642.5,175.5 L642.5,175.0 643.5,175.0 L643.5,174.1 644.5,174.1 L644.5,175.7 645.5,175.7 L645.5,173.0 646.5,173.0 L646.5,174.1 647.5,174.1 L647.5,172.7 648.5,172.7 L648.5,170.5 649.5,170.5 L649.5,171.1 650.5,171.1 L650.5,170.7 651.5,170.7 L651.5,169.4 652.5,169.4 L652.5,167.0 653.5,167.0 L653.5,168.0 654.5,168.0 L654.5,167.5 655.5,167.5 L655.5,166.1 656.5,166.1 L656.5,168.5 657.5,168.5 L657.5,166.8 658.5,166.8 L658.5,166.7 659.5,166.7 L659.5,166.8 660.5,166.8 L660.5,166.4 661.5,166.4 L661.5,166.4 662.5,166.4 L662.5,167.1 663.5,167.1 L663.5,167.3 664.5,167.3 L664.5,166.6 665.5,166.6 L665.5,166.9 666.5,166.9 L666.5,165.9 667.5,165.9 L667.5,167.4 668.5,167.4 L668.5,166.4 669.5,166.4 L669.5,167.2 670.5,167.2 L670.5,166.3 671.5,166.3 L671.5,166.6 672.5,166.6 L672.5,167.2 673.5,167.2 L673.5,166.0 674.5,166.0 L674.5,169.0 675.5,169.0 L675.5,167.0 676.5,167.0 L676.5,166.9 677.5,166.9 L677.5,166.4 678.5,166.4 L678.5,168.3 679.5,168.3 L679.5,168.1 680.5,168.1 L680.5,167.2 681.5,167.2 L681.5,165.9 682.5,165.9 L682.5,304.6 681.5,304.6 L681.5,307.6 680.5,307.6 L680.5,308.7 679.5,308.7 L679.5,306.8 678.5,306.8 L678.5,305.1 677.5,305.1 L677.5,303.4 676.5,303.4 L676.5,302.3 675.5,302.3 L675.5,301.3 674.5,301.3 L674.5,299.6 673.5,299.6 L673.5,297.6 672.5,297.6 L672.5,298.6 671.5,298.6 L671.5,300.1 670.5,300.1 L670.5,302.5 669.5,302.5 L669.5,304.5 668.5,304.5 L668.5,305.9 667.5,305.9 L667.5,307.3 666.5,307.3 L666.5,304.9 665.5,304.9 L665.5,304.1 664.5,304.1 L664.5,302.0 663.5,302.0 L663.5,300.0 662.5,300.0 L662.5,300.1 661.5,300.1 L661.5,299.4 660.5,299.4 L660.5,299.9 659.5,299.9 L659.5,299.9 658.5,299.9 L658.5,301.8 657.5,301.8 L657.5,302.2 656.5,302.2 L656.5,304.6 655.5,304.6 L655.5,307.0 654.5,307.0 L654.5,308.0 653.5,308.0 L653.5,307.6 652.5,307.6 L652.5,305.6 651.5,305.6 L651.5,303.7 650.5,303.7 L650.5,303.4 649.5,303.4 L649.5,302.0 648.5,302.0 L648.5,301.9 647.5,301.9 L647.5,300.6 646.5,300.6 L646.5,301.9 645.5,301.9 L645.5,302.2 644.5,302.2 L644.5,304.0 643.5,304.0 L643.5,304.3 642.5,304.3 L642.5,303.9 641.5,303.9 L641.5,306.0 640.5,306.0 L640.5,304.7 639.5,304.7 L639.5,301.4 638.5,301.4 L638.5,300.7 637.5,300.7 L637.5,299.1 636.5,299.1 L636.5,297.6 635.5,297.6 L635.5,298.1 634.5,298.1 L634.5,299.4 633.5,299.4 L633.5,301.6 632.5,301.6 L632.5,301.7 631.5,301.7 L631.5,303.8 630.5,303.8 L630.5,305.3 629.5,305.3 L629.5,302.4 628.5,302.4 L628.5,301.5 627.5,301.5 L627.5,301.2 626.5,301.2 L626.5,300.4 625.5,300.4 L625.5,297.3 624.5,297.3 L624.5,298.4 623.5,298.4 L623.5,299.2 622.5,299.2 L622.5,301.8 621.5,301.8 L621.5,302.7 620.5,302.7 L620.5,305.9 619.5,305.9 L619.5,304.8 618.5,304.8 L618.5,308.0 617.5,308.0 L617.5,306.7 616.5,306.7 L616.5,307.3 615.5,307.3 L615.5,306.1 614.5,306.1 L614.5,306.1 613.5,306.1 L613.5,303.8 612.5,303.8 L612.5,302.7 611.5,302.7 L611.5,300.2 610.5,300.2 L610.5,298.4 609.5,298.4 L609.5,299.0 608.5,299.0 L608.5,300.7 607.5,300.7 L607.5,302.3 606.5,302.3 L606.5,304.6 605.5,304.6 L605.5,304.5 604.5,304.5 L604.5,305.5 603.5,305.5 L603.5,304.2 602.5,304.2 L602.5,303.2 601.5,303.2 L601.5,301.6 600.5,301.6 L600.5,300.8 599.5,300.8 L599.5,298.1 598.5,298.1 L598.5,299.8 597.5,299.8 L597.5,301.9 596.5,301.9 L596.5,302.6 595.5,302.6 L595.5,302.6 594.5,302.6 L594.5,303.7 593.5,303.7 L593.5,306.7 592.5,306.7 L592.5,307.7 591.5,307.7 L591.5,307.3 590.5,307.3 L590.5,305.4 589.5,305.4 L589.5,305.8 588.5,305.8 L588.5,304.7 587.5,304.7 L587.5,302.0 586.5,302.0 L586.5,300.5 585.5,300.5 L585.5,299.8 584.5,299.8 L584.5,301.5 583.5,301.5 L583.5,302.4 582.5,302.4 L582.5,302.7 581.5,302.7 L581.5,304.2 580.5,304.2 L580.5,306.1 579.5,306.1 L579.5,306.7 578.5,306.7 L578.5,306.4 577.5,306.4 L577.5,304.4 576.5,304.4 L576.5,301.4 575.5,301.4 L575.5,301.1 574.5,301.1 L574.5,299.7 573.5,299.7 L573.5,298.5 572.5,298.5 L572.5,296.5 571.5,296.5 L571.5,300.3 570.5,300.3 L570.5,299.9 569.5,299.9 L569.5,302.0 568.5,302.0 L568.5,303.7 567.5,303.7 L567.5,305.5 566.5,305.5 L566.5,308.2 565.5,308.2 L565.5,308.6 564.5,308.6 L564.5,309.1 563.5,309.1 L563.5,308.3 562.5,308.3 L562.5,304.7 561.5,304.7 L561.5,307.1 560.5,307.1 L560.5,303.8 559.5,303.8 L559.5,301.9 558.5,301.9 L558.5,300.3 557.5,300.3 L557.5,299.9 556.5,299.9 L556.5,298.0 555.5,298.0 L555.5,300.1 554.5,300.1 L554.5,302.8 553.5,302.8 L553.5,302.0 552.5,302.0 L552.5,304.0 551.5,304.0 L551.5,304.7 550.5,304.7 L550.5,305.0 549.5,305.0 L549.5,306.4 548.5,306.4 L548.5,303.7 547.5,303.7 L547.5,300.9 546.5,300.9 L546.5,300.1 545.5,300.1 L545.5,299.9 544.5,299.9 L544.5,297.7 543.5,297.7 L543.5,299.1 542.5,299.1 L542.5,301.3 541.5,301.3 L541.5,301.8 540.5,301.8 L540.5,303.0 539.5,303.0 L539.5,306.7 538.5,306.7 L538.5,306.7 537.5,306.7 L537.5,305.4 536.5,305.4 L536.5,305.3 535.5,305.3 L535.5,303.8 534.5,303.8 L534.5,302.8 533.5,302.8 L533.5,302.0 532.5,302.0 L532.5,303.2 531.5,303.2 L531.5,304.1 530.5,304.1 L530.5,305.1 529.5,305.1 L529.5,306.3 528.5,306.3 L528.5,305.3 527.5,305.3 L527.5,303.6 526.5,303.6 L526.5,305.2 525.5,305.2 L525.5,302.9 524.5,302.9 L524.5,302.0 523.5,302.0 L523.5,298.8 522.5,298.8 L522.5,298.0 521.5,298.0 L521.5,299.9 520.5,299.9 L520.5,300.8 519.5,300.8 L519.5,305.0 518.5,305.0 L518.5,304.8 517.5,304.8 L517.5,305.8 516.5,305.8 L516.5,307.8 515.5,307.8 L515.5,305.5 514.5,305.5 L514.5,304.3 513.5,304.3 L513.5,302.4 512.5,302.4 L512.5,302.0 511.5,302.0 L511.5,301.3 510.5,301.3 L510.5,298.7 509.5,298.7 L509.5,298.0 508.5,298.0 L508.5,300.8 507.5,300.8 L507.5,302.3 506.5,302.3 L506.5,302.9 505.5,302.9 L505.5,304.2 504.5,304.2 L504.5,304.5 503.5,304.5 L503.5,303.7 502.5,303.7 L502.5,301.2 501.5,301.2 L501.5,300.7 500.5,300.7 L500.5,297.7 499.5,297.7 L499.5,297.6 498.5,297.6 L498.5,299.4 497.5,299.4 L497.5,300.5 496.5,300.5 L496.5,302.8 495.5,302.8 L495.5,301.9 494.5,301.9 L494.5,304.8 493.5,304.8 L493.5,305.5 492.5,305.5 L492.5,307.2 491.5,307.2 L491.5,306.4 490.5,306.4 L490.5,307.7 489.5,307.7 L489.5,305.6 488.5,305.6 L488.5,304.1 487.5,304.1 L487.5,305.4 486.5,305.4 L486.5,303.9 485.5,303.9 L485.5,300.3 484.5,300.3 L484.5,300.6 483.5,300.6 L483.5,302.8 482.5,302.8 L482.5,302.7 481.5,302.7 L481.5,303.6 480.5,303.6 L480.5,305.5 479.5,305.5 L479.5,305.4 478.5,305.4 L478.5,306.8 477.5,306.8 L477.5,309.0 476.5,309.0 L476.5,307.6 475.5,307.6 L475.5,307.8 474.5,307.8 L474.5,307.3 473.5,307.3 L473.5,306.4 472.5,306.4 L472.5,305.4 471.5,305.4 L471.5,304.1 470.5,304.1 L470.5,303.8 469.5,303.8 L469.5,302.4 468.5,302.4 L468.5,301.9 467.5,301.9 L467.5,301.8 466.5,301.8 L466.5,303.7 465.5,303.7 L465.5,304.5 464.5,304.5 L464.5,305.8 463.5,305.8 L463.5,306.1 462.5,306.1 L462.5,306.6 461.5,306.6 L461.5,307.7 460.5,307.7 L460.5,308.7 459.5,308.7 L459.5,306.2 458.5,306.2 L458.5,304.6 457.5,304.6 L457.5,304.0 456.5,304.0 L456.5,302.8 455.5,302.8 L455.5,301.8 454.5,301.8 L454.5,300.8 453.5,300.8 L453.5,301.7 452.5,301.7 L452.5,300.7 451.5,300.7 L451.5,302.3 450.5,302.3 L450.5,302.9 449.5,302.9 L449.5,303.9 448.5,303.9 L448.5,305.0 447.5,305.0 L447.5,306.9 446.5,306.9 L446.5,307.3 445.5,307.3 L445.5,305.1 444.5,305.1 L444.5,305.5 443.5,305.5 L443.5,302.2 442.5,302.2 L442.5,302.5 441.5,302.5 L441.5,301.3 440.5,301.3 L440.5,299.1 439.5,299.1 L439.5,301.8 438.5,301.8 L438.5,301.2 437.5,301.2 L437.5,305.8 436.5,305.8 L436.5,304.7 435.5,304.7 L435.5,305.6 434.5,305.6 L434.5,307.1 433.5,307.1 L433.5,307.0 432.5,307.0 L432.5,309.3 431.5,309.3 L431.5,308.0 430.5,308.0 L430.5,307.3 429.5,307.3 L429.5,306.3 428.5,306.3 L428.5,304.3 427.5,304.3 L427.5,302.0 426.5,302.0 L426.5,303.1 425.5,303.1 L425.5,299.6 424.5,299.6 L424.5,301.0 423.5,301.0 L423.5,301.6 422.5,301.6 L422.5,304.0 421.5,304.0 L421.5,305.3 420.5,305.3 L420.5,305.5 419.5,305.5 L419.5,306.6 418.5,306.6 L418.5,307.8 417.5,307.8 L417.5,305.3 416.5,305.3 L416.5,301.8 415.5,301.8 L415.5,301.6 414.5,301.6 L414.5,300.5 413.5,300.5 L413.5,300.2 412.5,300.2 L412.5,300.3 411.5,300.3 L411.5,301.4 410.5,301.4 L410.5,302.7 409.5,302.7 L409.5,302.8 408.5,302.8 L408.5,304.1 407.5,304.1 L407.5,306.3 406.5,306.3 L406.5,305.3 405.5,305.3 L405.5,303.6 404.5,303.6 L404.5,300.6 403.5,300.6 L403.5,300.8 402.5,300.8 L402.5,298.9 401.5,298.9 L401.5,298.9 400.5,298.9 L400.5,302.0 399.5,302.0 L399.5,303.4 398.5,303.4 L398.5,305.1 397.5,305.1 L397.5,304.8 396.5,304.8 L396.5,306.8 395.5,306.8 L395.5,307.2 394.5,307.2 L394.5,304.6 393.5,304.6 L393.5,304.1 392.5,304.1 L392.5,303.6 391.5,303.6 L391.5,304.3 390.5,304.3 L390.5,302.7 389.5,302.7 L389.5,301.3 388.5,301.3 L388.5,303.3 387.5,303.3 L387.5,304.0 386.5,304.0 L386.5,305.5 385.5,305.5 L385.5,305.4 384.5,305.4 L384.5,305.2 383.5,305.2 L383.5,305.9 382.5,305.9 L382.5,304.7 381.5,304.7 L381.5,302.6 380.5,302.6 L380.5,302.4 379.5,302.4 L379.5,302.6 378.5,302.6 L378.5,301.6 377.5,301.6 L377.5,302.2 376.5,302.2 L376.5,303.8 375.5,303.8 L375.5,304.6 374.5,304.6 L374.5,305.7 373.5,305.7 L373.5,306.8 372.5,306.8 L372.5,306.4 371.5,306.4 L371.5,306.8 370.5,306.8 L370.5,305.9 369.5,305.9 L369.5,304.4 368.5,304.4 L368.5,301.9 367.5,301.9 L367.5,301.4 366.5,301.4 L366.5,301.2 365.5,301.2 L365.5,301.4 364.5,301.4 L364.5,302.0 363.5,302.0 L363.5,303.5 362.5,303.5 L362.5,303.7 361.5,303.7 L361.5,305.4 360.5,305.4 L360.5,306.2 359.5,306.2 L359.5,308.6 358.5,308.6 L358.5,307.3 357.5,307.3 L357.5,307.9 356.5,307.9 L356.5,307.3 355.5,307.3 L355.5,305.2 354.5,305.2 L354.5,304.4 353.5,304.4 L353.5,301.2 352.5,301.2 L352.5,301.3 351.5,301.3 L351.5,298.8 350.5,298.8 L350.5,298.2 349.5,298.2 L349.5,297.7 348.5,297.7 L348.5,299.5 347.5,299.5 L347.5,301.0 346.5,301.0 L346.5,302.5 345.5,302.5 L345.5,304.7 344.5,304.7 L344.5,306.3 343.5,306.3 L343.5,310.1 342.5,310.1 L342.5,307.4 341.5,307.4 L341.5,305.4 340.5,305.4 L340.5,304.2 339.5,304.2 L339.5,303.1 338.5,303.1 L338.5,301.7 337.5,301.7 L337.5,300.9 336.5,300.9 L336.5,297.6 335.5,297.6 L335.5,298.1 334.5,298.1 L334.5,299.5 333.5,299.5 L333.5,298.5 332.5,298.5 L332.5,302.6 331.5,302.6 L331.5,304.3 330.5,304.3 L330.5,306.1 329.5,306.1 L329.5,305.3 328.5,305.3 L328.5,305.0 327.5,305.0 L327.5,302.2 326.5,302.2 L326.5,302.4 325.5,302.4 L325.5,301.4 324.5,301.4 L324.5,300.0 323.5,300.0 L323.5,298.9 322.5,298.9 L322.5,301.8 321.5,301.8 L321.5,302.7 320.5,302.7 L320.5,302.9 319.5,302.9 L319.5,303.6 318.5,303.6 L318.5,305.4 317.5,305.4 L317.5,307.5 316.5,307.5 L316.5,306.8 315.5,306.8 L315.5,305.7 314.5,305.7 L314.5,303.1 313.5,303.1 L313.5,302.5 312.5,302.5 L312.5,300.3 311.5,300.3 L311.5,299.7 310.5,299.7 L310.5,297.4 309.5,297.4 L309.5,299.3 308.5,299.3 L308.5,299.9 307.5,299.9 L307.5,300.4 306.5,300.4 L306.5,302.5 305.5,302.5 L305.5,304.3 304.5,304.3 L304.5,306.3 303.5,306.3 L303.5,306.4 302.5,306.4 L302.5,303.2 301.5,303.2 L301.5,303.8 300.5,303.8 L300.5,301.4 299.5,301.4 L299.5,301.4 298.5,301.4 L298.5,299.6 297.5,299.6 L297.5,299.1 296.5,299.1 L296.5,300.7 295.5,300.7 L295.5,301.1 294.5,301.1 L294.5,300.8 293.5,300.8 L293.5,302.6 292.5,302.6 L292.5,305.0 291.5,305.0 L291.5,307.8 290.5,307.8 L290.5,308.6 289.5,308.6 L289.5,307.7 288.5,307.7 L288.5,308.3 287.5,308.3 L287.5,307.2 286.5,307.2 L286.5,304.9 285.5,304.9 L285.5,304.7 284.5,304.7 L284.5,304.9 283.5,304.9 L283.5,301.9 282.5,301.9 L282.5,302.0 281.5,302.0 L281.5,301.9 280.5,301.9 L280.5,301.5 279.5,301.5 L279.5,302.7 278.5,302.7 L278.5,306.4 277.5,306.4 L277.5,304.6 276.5,304.6 L276.5,305.9 275.5,305.9 L275.5,305.2 274.5,305.2 L274.5,303.9 273.5,303.9 L273.5,303.4 272.5,303.4 L272.5,302.3 271.5,302.3 L271.5,302.0 270.5,302.0 L270.5,298.8 269.5,298.8 L269.5,297.5 268.5,297.5 L268.5,299.0 267.5,299.0 L267.5,299.1 266.5,299.1 L266.5,302.1 265.5,302.1 L265.5,304.6 264.5,304.6 L264.5,307.1 263.5,307.1 L263.5,305.3 262.5,305.3 L262.5,303.6 261.5,303.6 L261.5,303.9 260.5,303.9 L260.5,303.5 259.5,303.5 L259.5,301.2 258.5,301.2 L258.5,303.3 257.5,303.3 L257.5,303.7 256.5,303.7 L256.5,304.6 255.5,304.6 L255.5,305.2 254.5,305.2 L254.5,305.6 253.5,305.6 L253.5,306.4 252.5,306.4 L252.5,309.1 251.5,309.1 L251.5,307.6 250.5,307.6 L250.5,307.0 249.5,307.0 L249.5,305.8 248.5,305.8 L248.5,304.7 247.5,304.7 L247.5,304.0 246.5,304.0 L246.5,301.8 245.5,301.8 L245.5,300.2 244.5,300.2 L244.5,302.2 243.5,302.2 L243.5,303.6 242.5,303.6 L242.5,303.3 241.5,303.3 L241.5,304.8 240.5,304.8 L240.5,306.4 239.5,306.4 L239.5,307.5 238.5,307.5 L238.5,307.8 237.5,307.8 L237.5,308.6 236.5,308.6 L236.5,309.8 235.5,309.8 L235.5,306.2 234.5,306.2 L234.5,306.6 233.5,306.6 L233.5,305.0 232.5,305.0 L232.5,304.2 231.5,304.2 L231.5,302.5 230.5,302.5 L230.5,299.4 229.5,299.4 L229.5,301.3 228.5,301.3 L228.5,302.7 227.5,302.7 L227.5,303.0 226.5,303.0 L226.5,303.6 225.5,303.6 L225.5,305.6 224.5,305.6 L224.5,306.1 223.5,306.1 L223.5,306.1 222.5,306.1 L222.5,307.7 221.5,307.7 L221.5,308.8 220.5,308.8 L220.5,304.7 219.5,304.7 L219.5,305.5 218.5,305.5 L218.5,302.0 217.5,302.0 L217.5,302.5 216.5,302.5 L216.5,299.1 215.5,299.1 L215.5,299.2 214.5,299.2 L214.5,297.3 213.5,297.3 L213.5,299.9 212.5,299.9 L212.5,299.5 211.5,299.5 L211.5,302.0 210.5,302.0 L210.5,303.8 209.5,303.8 L209.5,304.3 208.5,304.3 L208.5,306.5 207.5,306.5 L207.5,307.1 206.5,307.1 L206.5,305.4 205.5,305.4 L205.5,303.4 204.5,303.4 L204.5,302.7 203.5,302.7 L203.5,300.6 202.5,300.6 L202.5,302.3 201.5,302.3 L201.5,302.2 200.5,302.2 L200.5,302.5 199.5,302.5 L199.5,303.6 198.5,303.6 L198.5,306.0 197.5,306.0 L197.5,306.8 196.5,306.8 L196.5,305.5 195.5,305.5 L195.5,304.6 194.5,304.6 L194.5,300.7 193.5,300.7 L193.5,301.0 192.5,301.0 L192.5,300.0 191.5,300.0 L191.5,300.0 190.5,300.0 L190.5,300.5 189.5,300.5 L189.5,300.9 188.5,300.9 L188.5,303.2 187.5,303.2 L187.5,304.8 186.5,304.8 L186.5,305.8 185.5,305.8 L185.5,308.4 184.5,308.4 L184.5,307.0 183.5,307.0 L183.5,305.3 182.5,305.3 L182.5,305.4 181.5,305.4 L181.5,305.2 180.5,305.2 L180.5,302.7 179.5,302.7 L179.5,302.6 178.5,302.6 L178.5,302.3 177.5,302.3 L177.5,302.1 176.5,302.1 L176.5,301.6 175.5,301.6 L175.5,304.1 174.5,304.1 L174.5,303.6 173.5,303.6 L173.5,305.9 172.5,305.9 L172.5,307.6 171.5,307.6 L171.5,308.0 170.5,308.0 L170.5,307.2 169.5,307.2 L169.5,305.2 168.5,305.2 L168.5,305.4 167.5,305.4 L167.5,303.4 166.5,303.4 L166.5,303.7 165.5,303.7 L165.5,302.0 164.5,302.0 L164.5,301.1 163.5,301.1 L163.5,304.3 162.5,304.3 L162.5,304.4 161.5,304.4 L161.5,304.3 160.5,304.3 L160.5,304.9 159.5,304.9 L159.5,306.7 158.5,306.7 L158.5,307.0 157.5,307.0 L157.5,308.7 156.5,308.7 L156.5,307.1 155.5,307.1 L155.5,309.1 154.5,309.1 L154.5,305.1 153.5,305.1 L153.5,304.5 152.5,304.5 L152.5,303.7 151.5,303.7 L151.5,301.9 150.5,301.9 L150.5,301.8 149.5,301.8 L149.5,298.7 148.5,298.7 L148.5,299.8 147.5,299.8 L147.5,300.6 146.5,300.6 L146.5,300.8 145.5,300.8 L145.5,303.1 144.5,303.1 L144.5,305.0 143.5,305.0 L143.5,306.6 142.5,306.6 L142.5,308.4 141.5,308.4 L141.5,308.3 140.5,308.3 L140.5,307.7 139.5,307.7 L139.5,307.7 138.5,307.7 L138.5,305.8 137.5,305.8 L137.5,305.0 136.5,305.0 L136.5,303.7 135.5,303.7 L135.5,302.0 134.5,302.0 L134.5,301.9 133.5,301.9 L133.5,300.8 132.5,300.8 L132.5,301.0 131.5,301.0 L131.5,302.5 130.5,302.5 L130.5,302.7 129.5,302.7 L129.5,302.9 128.5,302.9 L128.5,303.0 127.5,303.0 L127.5,305.5 126.5,305.5 L126.5,304.9 125.5,304.9 L125.5,302.1 124.5,302.1 L124.5,299.0 123.5,299.0 L123.5,298.1 122.5,298.1 L122.5,297.3 121.5,297.3 L121.5,298.6 120.5,298.6 L120.5,300.1 119.5,300.1 L119.5,300.8 118.5,300.8 L118.5,302.3 117.5,302.3 L117.5,304.5 116.5,304.5 L116.5,304.9 115.5,304.9 L115.5,307.8 114.5,307.8 L114.5,308.2 113.5,308.2 L113.5,307.3 112.5,307.3 L112.5,303.9 111.5,303.9 L111.5,303.8 110.5,303.8 L110.5,303.1 109.5,303.1 L109.5,301.0 108.5,301.0 L108.5,300.0 107.5,300.0 L107.5,297.1 106.5,297.1 L106.5,298.0 105.5,298.0 L105.5,298.8 104.5,298.8 L104.5,302.0 103.5,302.0 L103.5,303.9 102.5,303.9 L102.5,304.4 101.5,304.4 L101.5,305.7 100.5,305.7 L100.5,307.3 99.5,307.3 L99.5,307.7 98.5,307.7 L98.5,308.3 97.5,308.3 L97.5,305.9 96.5,305.9 L96.5,304.7 95.5,304.7 L95.5,303.5 94.5,303.5 L94.5,301.1 93.5,301.1 L93.5,301.9 92.5,301.9 L92.5,301.3 91.5,301.3 L91.5,298.9 90.5,298.9 L90.5,299.7 89.5,299.7 L89.5,301.6 88.5,301.6 L88.5,302.4 87.5,302.4 L87.5,303.5 86.5,303.5 L86.5,304.8 85.5,304.8 L85.5,306.8 84.5,306.8 L84.5,308.5 83.5,308.5 L83.5,307.6 82.5,307.6 Z" fill="#90980a"/></g></g><rect x="83" y="168" width="599" height="36" fill="url(#gDark)"/><use href="#markers"/></g></g>
<g clip-path="url(#cBL)"><g transform="translate(0,482)"><use href="#chrome"/><use href="#grid"/><g clip-path="url(#gridClip)"><g filter="url(#soft)"><path d="M82.5,118.7 83.5,118.7 L83.5,122.8 84.5,122.8 L84.5,122.3 85.5,122.3 L85.5,122.7 86.5,122.7 L86.5,125.8 87.5,125.8 L87.5,123.7 88.5,123.7 L88.5,124.3 89.5,124.3 L89.5,126.4 90.5,126.4 L90.5,126.9 91.5,126.9 L91.5,126.4 92.5,126.4 L92.5,127.1 93.5,127.1 L93.5,127.4 94.5,127.4 L94.5,125.9 95.5,125.9 L95.5,129.9 96.5,129.9 L96.5,131.0 97.5,131.0 L97.5,127.1 98.5,127.1 L98.5,128.3 99.5,128.3 L99.5,124.8 100.5,124.8 L100.5,128.3 101.5,128.3 L101.5,126.8 102.5,126.8 L102.5,124.9 103.5,124.9 L103.5,126.3 104.5,126.3 L104.5,126.3 105.5,126.3 L105.5,124.3 106.5,124.3 L106.5,125.4 107.5,125.4 L107.5,119.0 108.5,119.0 L108.5,116.4 109.5,116.4 L109.5,121.2 110.5,121.2 L110.5,121.2 111.5,121.2 L111.5,118.4 112.5,118.4 L112.5,118.6 113.5,118.6 L113.5,120.1 114.5,120.1 L114.5,117.5 115.5,117.5 L115.5,114.9 116.5,114.9 L116.5,116.2 117.5,116.2 L117.5,113.2 118.5,113.2 L118.5,114.2 119.5,114.2 L119.5,104.6 120.5,104.6 L120.5,114.1 121.5,114.1 L121.5,113.3 122.5,113.3 L122.5,106.4 123.5,106.4 L123.5,112.6 124.5,112.6 L124.5,114.4 125.5,114.4 L125.5,112.4 126.5,112.4 L126.5,115.7 127.5,115.7 L127.5,116.8 128.5,116.8 L128.5,119.2 129.5,119.2 L129.5,117.9 130.5,117.9 L130.5,119.3 131.5,119.3 L131.5,118.4 132.5,118.4 L132.5,115.3 133.5,115.3 L133.5,124.1 134.5,124.1 L134.5,121.2 135.5,121.2 L135.5,122.8 136.5,122.8 L136.5,124.6 137.5,124.6 L137.5,125.5 138.5,125.5 L138.5,120.8 139.5,120.8 L139.5,127.6 140.5,127.6 L140.5,126.5 141.5,126.5 L141.5,123.2 142.5,123.2 L142.5,125.2 143.5,125.2 L143.5,129.5 144.5,129.5 L144.5,126.6 145.5,126.6 L145.5,125.8 146.5,125.8 L146.5,128.8 147.5,128.8 L147.5,129.5 148.5,129.5 L148.5,126.2 149.5,126.2 L149.5,124.8 150.5,124.8 L150.5,126.2 151.5,126.2 L151.5,125.5 152.5,125.5 L152.5,124.1 153.5,124.1 L153.5,122.7 154.5,122.7 L154.5,120.4 155.5,120.4 L155.5,125.2 156.5,125.2 L156.5,123.9 157.5,123.9 L157.5,122.2 158.5,122.2 L158.5,123.2 159.5,123.2 L159.5,120.2 160.5,120.2 L160.5,117.2 161.5,117.2 L161.5,117.5 162.5,117.5 L162.5,113.6 163.5,113.6 L163.5,118.6 164.5,118.6 L164.5,116.0 165.5,116.0 L165.5,116.3 166.5,116.3 L166.5,116.7 167.5,116.7 L167.5,115.4 168.5,115.4 L168.5,112.2 169.5,112.2 L169.5,111.2 170.5,111.2 L170.5,108.5 171.5,108.5 L171.5,108.6 172.5,108.6 L172.5,113.3 173.5,113.3 L173.5,111.6 174.5,111.6 L174.5,114.3 175.5,114.3 L175.5,115.7 176.5,115.7 L176.5,115.3 177.5,115.3 L177.5,116.7 178.5,116.7 L178.5,119.6 179.5,119.6 L179.5,119.4 180.5,119.4 L180.5,122.8 181.5,122.8 L181.5,117.7 182.5,117.7 L182.5,119.4 183.5,119.4 L183.5,119.8 184.5,119.8 L184.5,121.5 185.5,121.5 L185.5,124.3 186.5,124.3 L186.5,122.8 187.5,122.8 L187.5,120.5 188.5,120.5 L188.5,124.4 189.5,124.4 L189.5,127.6 190.5,127.6 L190.5,121.7 191.5,121.7 L191.5,128.3 192.5,128.3 L192.5,128.4 193.5,128.4 L193.5,126.4 194.5,126.4 L194.5,128.0 195.5,128.0 L195.5,129.6 196.5,129.6 L196.5,125.1 197.5,125.1 L197.5,131.3 198.5,131.3 L198.5,127.2 199.5,127.2 L199.5,130.9 200.5,130.9 L200.5,125.6 201.5,125.6 L201.5,121.4 202.5,121.4 L202.5,126.2 203.5,126.2 L203.5,123.7 204.5,123.7 L204.5,123.4 205.5,123.4 L205.5,125.0 206.5,125.0 L206.5,120.6 207.5,120.6 L207.5,122.7 208.5,122.7 L208.5,123.2 209.5,123.2 L209.5,124.1 210.5,124.1 L210.5,120.9 211.5,120.9 L211.5,115.0 212.5,115.0 L212.5,111.4 213.5,111.4 L213.5,119.1 214.5,119.1 L214.5,114.4 215.5,114.4 L215.5,117.4 216.5,117.4 L216.5,114.5 217.5,114.5 L217.5,111.5 218.5,111.5 L218.5,112.1 219.5,112.1 L219.5,109.2 220.5,109.2 L220.5,107.9 221.5,107.9 L221.5,110.8 222.5,110.8 L222.5,114.5 223.5,114.5 L223.5,108.5 224.5,108.5 L224.5,113.5 225.5,113.5 L225.5,116.8 226.5,116.8 L226.5,113.4 227.5,113.4 L227.5,113.8 228.5,113.8 L228.5,120.7 229.5,120.7 L229.5,119.6 230.5,119.6 L230.5,121.7 231.5,121.7 L231.5,118.7 232.5,118.7 L232.5,123.6 233.5,123.6 L233.5,121.6 234.5,121.6 L234.5,119.0 235.5,119.0 L235.5,123.7 236.5,123.7 L236.5,123.2 237.5,123.2 L237.5,121.4 238.5,121.4 L238.5,123.2 239.5,123.2 L239.5,120.7 240.5,120.7 L240.5,126.1 241.5,126.1 L241.5,127.9 242.5,127.9 L242.5,126.4 243.5,126.4 L243.5,128.8 244.5,128.8 L244.5,127.3 245.5,127.3 L245.5,130.0 246.5,130.0 L246.5,129.0 247.5,129.0 L247.5,125.3 248.5,125.3 L248.5,129.3 249.5,129.3 L249.5,127.8 250.5,127.8 L250.5,121.9 251.5,121.9 L251.5,128.9 252.5,128.9 L252.5,126.6 253.5,126.6 L253.5,124.9 254.5,124.9 L254.5,120.2 255.5,120.2 L255.5,124.8 256.5,124.8 L256.5,123.3 257.5,123.3 L257.5,120.7 258.5,120.7 L258.5,120.6 259.5,120.6 L259.5,117.3 260.5,117.3 L260.5,118.3 261.5,118.3 L261.5,119.8 262.5,119.8 L262.5,118.8 263.5,118.8 L263.5,115.8 264.5,115.8 L264.5,110.9 265.5,110.9 L265.5,114.7 266.5,114.7 L266.5,114.6 267.5,114.6 L267.5,111.8 268.5,111.8 L268.5,114.5 269.5,114.5 L269.5,108.7 270.5,108.7 L270.5,108.1 271.5,108.1 L271.5,111.8 272.5,111.8 L272.5,113.4 273.5,113.4 L273.5,114.9 274.5,114.9 L274.5,114.3 275.5,114.3 L275.5,117.6 276.5,117.6 L276.5,113.7 277.5,113.7 L277.5,118.2 278.5,118.2 L278.5,118.0 279.5,118.0 L279.5,119.5 280.5,119.5 L280.5,116.1 281.5,116.1 L281.5,117.7 282.5,117.7 L282.5,122.8 283.5,122.8 L283.5,122.5 284.5,122.5 L284.5,124.3 285.5,124.3 L285.5,117.1 286.5,117.1 L286.5,120.1 287.5,120.1 L287.5,126.5 288.5,126.5 L288.5,123.4 289.5,123.4 L289.5,125.6 290.5,125.6 L290.5,120.8 291.5,120.8 L291.5,125.9 292.5,125.9 L292.5,125.5 293.5,125.5 L293.5,126.0 294.5,126.0 L294.5,128.3 295.5,128.3 L295.5,124.3 296.5,124.3 L296.5,128.6 297.5,128.6 L297.5,126.3 298.5,126.3 L298.5,123.2 299.5,123.2 L299.5,123.8 300.5,123.8 L300.5,127.9 301.5,127.9 L301.5,123.6 302.5,123.6 L302.5,126.9 303.5,126.9 L303.5,127.7 304.5,127.7 L304.5,123.4 305.5,123.4 L305.5,125.1 306.5,125.1 L306.5,121.0 307.5,121.0 L307.5,121.6 308.5,121.6 L308.5,122.7 309.5,122.7 L309.5,122.2 310.5,122.2 L310.5,118.9 311.5,118.9 L311.5,121.8 312.5,121.8 L312.5,118.3 313.5,118.3 L313.5,117.9 314.5,117.9 L314.5,119.5 315.5,119.5 L315.5,112.8 316.5,112.8 L316.5,113.2 317.5,113.2 L317.5,113.2 318.5,113.2 L318.5,114.9 319.5,114.9 L319.5,110.1 320.5,110.1 L320.5,110.8 321.5,110.8 L321.5,111.1 322.5,111.1 L322.5,108.5 323.5,108.5 L323.5,115.6 324.5,115.6 L324.5,113.0 325.5,113.0 L325.5,113.5 326.5,113.5 L326.5,112.8 327.5,112.8 L327.5,114.9 328.5,114.9 L328.5,117.9 329.5,117.9 L329.5,120.8 330.5,120.8 L330.5,121.1 331.5,121.1 L331.5,121.4 332.5,121.4 L332.5,121.8 333.5,121.8 L333.5,118.6 334.5,118.6 L334.5,123.7 335.5,123.7 L335.5,118.4 336.5,118.4 L336.5,121.7 337.5,121.7 L337.5,123.8 338.5,123.8 L338.5,125.8 339.5,125.8 L339.5,127.8 340.5,127.8 L340.5,128.8 341.5,128.8 L341.5,126.9 342.5,126.9 L342.5,126.6 343.5,126.6 L343.5,129.4 344.5,129.4 L344.5,128.2 345.5,128.2 L345.5,127.7 346.5,127.7 L346.5,129.0 347.5,129.0 L347.5,124.6 348.5,124.6 L348.5,124.5 349.5,124.5 L349.5,122.1 350.5,122.1 L350.5,118.8 351.5,118.8 L351.5,123.5 352.5,123.5 L352.5,126.1 353.5,126.1 L353.5,126.1 354.5,126.1 L354.5,125.4 355.5,125.4 L355.5,119.4 356.5,119.4 L356.5,121.0 357.5,121.0 L357.5,123.0 358.5,123.0 L358.5,121.4 359.5,121.4 L359.5,118.2 360.5,118.2 L360.5,119.0 361.5,119.0 L361.5,118.8 362.5,118.8 L362.5,119.8 363.5,119.8 L363.5,117.0 364.5,117.0 L364.5,117.7 365.5,117.7 L365.5,116.4 366.5,116.4 L366.5,116.5 367.5,116.5 L367.5,114.2 368.5,114.2 L368.5,113.0 369.5,113.0 L369.5,110.9 370.5,110.9 L370.5,110.9 371.5,110.9 L371.5,106.8 372.5,106.8 L372.5,113.1 373.5,113.1 L373.5,113.5 374.5,113.5 L374.5,113.7 375.5,113.7 L375.5,114.6 376.5,114.6 L376.5,116.5 377.5,116.5 L377.5,113.6 378.5,113.6 L378.5,118.5 379.5,118.5 L379.5,118.1 380.5,118.1 L380.5,117.2 381.5,117.2 L381.5,119.9 382.5,119.9 L382.5,122.1 383.5,122.1 L383.5,116.2 384.5,116.2 L384.5,124.1 385.5,124.1 L385.5,124.2 386.5,124.2 L386.5,124.1 387.5,124.1 L387.5,120.7 388.5,120.7 L388.5,125.3 389.5,125.3 L389.5,127.2 390.5,127.2 L390.5,125.8 391.5,125.8 L391.5,127.9 392.5,127.9 L392.5,125.0 393.5,125.0 L393.5,127.0 394.5,127.0 L394.5,131.1 395.5,131.1 L395.5,125.9 396.5,125.9 L396.5,127.7 397.5,127.7 L397.5,128.6 398.5,128.6 L398.5,126.1 399.5,126.1 L399.5,129.7 400.5,129.7 L400.5,126.9 401.5,126.9 L401.5,123.1 402.5,123.1 L402.5,127.1 403.5,127.1 L403.5,125.0 404.5,125.0 L404.5,125.3 405.5,125.3 L405.5,121.7 406.5,121.7 L406.5,124.0 407.5,124.0 L407.5,123.8 408.5,123.8 L408.5,120.7 409.5,120.7 L409.5,120.5 410.5,120.5 L410.5,122.8 411.5,122.8 L411.5,120.9 412.5,120.9 L412.5,120.2 413.5,120.2 L413.5,116.4 414.5,116.4 L414.5,117.5 415.5,117.5 L415.5,118.6 416.5,118.6 L416.5,114.3 417.5,114.3 L417.5,109.2 418.5,109.2 L418.5,114.9 419.5,114.9 L419.5,113.9 420.5,113.9 L420.5,109.4 421.5,109.4 L421.5,111.8 422.5,111.8 L422.5,111.7 423.5,111.7 L423.5,110.0 424.5,110.0 L424.5,111.1 425.5,111.1 L425.5,116.1 426.5,116.1 L426.5,118.5 427.5,118.5 L427.5,114.6 428.5,114.6 L428.5,117.9 429.5,117.9 L429.5,120.0 430.5,120.0 L430.5,115.9 431.5,115.9 L431.5,116.0 432.5,116.0 L432.5,120.7 433.5,120.7 L433.5,122.2 434.5,122.2 L434.5,121.7 435.5,121.7 L435.5,123.8 436.5,123.8 L436.5,120.3 437.5,120.3 L437.5,122.9 438.5,122.9 L438.5,125.0 439.5,125.0 L439.5,126.5 440.5,126.5 L440.5,126.7 441.5,126.7 L441.5,125.8 442.5,125.8 L442.5,122.0 443.5,122.0 L443.5,126.7 444.5,126.7 L444.5,129.1 445.5,129.1 L445.5,122.7 446.5,122.7 L446.5,124.7 447.5,124.7 L447.5,125.3 448.5,125.3 L448.5,127.6 449.5,127.6 L449.5,121.0 450.5,121.0 L450.5,123.7 451.5,123.7 L451.5,123.6 452.5,123.6 L452.5,126.5 453.5,126.5 L453.5,122.5 454.5,122.5 L454.5,119.8 455.5,119.8 L455.5,123.7 456.5,123.7 L456.5,125.3 457.5,125.3 L457.5,122.9 458.5,122.9 L458.5,120.7 459.5,120.7 L459.5,120.4 460.5,120.4 L460.5,120.6 461.5,120.6 L461.5,119.5 462.5,119.5 L462.5,115.6 463.5,115.6 L463.5,118.0 464.5,118.0 L464.5,117.2 465.5,117.2 L465.5,116.6 466.5,116.6 L466.5,113.6 467.5,113.6 L467.5,115.0 468.5,115.0 L468.5,113.6 469.5,113.6 L469.5,109.9 470.5,109.9 L470.5,112.2 471.5,112.2 L471.5,112.9 472.5,112.9 L472.5,107.3 473.5,107.3 L473.5,114.0 474.5,114.0 L474.5,116.6 475.5,116.6 L475.5,114.4 476.5,114.4 L476.5,117.6 477.5,117.6 L477.5,119.5 478.5,119.5 L478.5,117.5 479.5,117.5 L479.5,119.4 480.5,119.4 L480.5,120.7 481.5,120.7 L481.5,121.7 482.5,121.7 L482.5,116.2 483.5,116.2 L483.5,121.5 484.5,121.5 L484.5,120.8 485.5,120.8 L485.5,121.7 486.5,121.7 L486.5,123.4 487.5,123.4 L487.5,121.5 488.5,121.5 L488.5,124.9 489.5,124.9 L489.5,126.8 490.5,126.8 L490.5,122.8 491.5,122.8 L491.5,124.0 492.5,124.0 L492.5,124.5 493.5,124.5 L493.5,125.0 494.5,125.0 L494.5,127.9 495.5,127.9 L495.5,130.0 496.5,130.0 L496.5,129.1 497.5,129.1 L497.5,127.4 498.5,127.4 L498.5,126.7 499.5,126.7 L499.5,123.8 500.5,123.8 L500.5,121.8 501.5,121.8 L501.5,124.4 502.5,124.4 L502.5,125.7 503.5,125.7 L503.5,123.9 504.5,123.9 L504.5,122.9 505.5,122.9 L505.5,123.6 506.5,123.6 L506.5,122.6 507.5,122.6 L507.5,121.0 508.5,121.0 L508.5,118.9 509.5,118.9 L509.5,118.9 510.5,118.9 L510.5,121.2 511.5,121.2 L511.5,118.7 512.5,118.7 L512.5,119.6 513.5,119.6 L513.5,118.9 514.5,118.9 L514.5,115.8 515.5,115.8 L515.5,114.6 516.5,114.6 L516.5,117.3 517.5,117.3 L517.5,112.9 518.5,112.9 L518.5,111.1 519.5,111.1 L519.5,110.6 520.5,110.6 L520.5,113.5 521.5,113.5 L521.5,107.5 522.5,107.5 L522.5,113.5 523.5,113.5 L523.5,113.3 524.5,113.3 L524.5,112.8 525.5,112.8 L525.5,112.8 526.5,112.8 L526.5,115.3 527.5,115.3 L527.5,116.6 528.5,116.6 L528.5,120.6 529.5,120.6 L529.5,114.0 530.5,114.0 L530.5,120.6 531.5,120.6 L531.5,120.4 532.5,120.4 L532.5,122.4 533.5,122.4 L533.5,116.6 534.5,116.6 L534.5,124.2 535.5,124.2 L535.5,122.2 536.5,122.2 L536.5,122.0 537.5,122.0 L537.5,125.7 538.5,125.7 L538.5,123.1 539.5,123.1 L539.5,127.6 540.5,127.6 L540.5,126.2 541.5,126.2 L541.5,127.2 542.5,127.2 L542.5,128.0 543.5,128.0 L543.5,126.3 544.5,126.3 L544.5,125.0 545.5,125.0 L545.5,123.9 546.5,123.9 L546.5,125.8 547.5,125.8 L547.5,126.2 548.5,126.2 L548.5,126.4 549.5,126.4 L549.5,128.0 550.5,128.0 L550.5,122.7 551.5,122.7 L551.5,123.8 552.5,123.8 L552.5,127.6 553.5,127.6 L553.5,124.5 554.5,124.5 L554.5,124.1 555.5,124.1 L555.5,123.0 556.5,123.0 L556.5,123.9 557.5,123.9 L557.5,121.2 558.5,121.2 L558.5,119.1 559.5,119.1 L559.5,116.5 560.5,116.5 L560.5,122.5 561.5,122.5 L561.5,119.2 562.5,119.2 L562.5,115.8 563.5,115.8 L563.5,115.6 564.5,115.6 L564.5,110.6 565.5,110.6 L565.5,116.8 566.5,116.8 L566.5,114.2 567.5,114.2 L567.5,112.6 568.5,112.6 L568.5,113.1 569.5,113.1 L569.5,110.0 570.5,110.0 L570.5,107.2 571.5,107.2 L571.5,111.9 572.5,111.9 L572.5,109.0 573.5,109.0 L573.5,113.8 574.5,113.8 L574.5,109.7 575.5,109.7 L575.5,111.8 576.5,111.8 L576.5,114.1 577.5,114.1 L577.5,115.1 578.5,115.1 L578.5,113.6 579.5,113.6 L579.5,119.7 580.5,119.7 L580.5,121.0 581.5,121.0 L581.5,121.7 582.5,121.7 L582.5,119.5 583.5,119.5 L583.5,122.4 584.5,122.4 L584.5,120.0 585.5,120.0 L585.5,118.5 586.5,118.5 L586.5,123.6 587.5,123.6 L587.5,123.9 588.5,123.9 L588.5,126.9 589.5,126.9 L589.5,115.4 590.5,115.4 L590.5,125.4 591.5,125.4 L591.5,126.1 592.5,126.1 L592.5,127.3 593.5,127.3 L593.5,129.5 594.5,129.5 L594.5,128.6 595.5,128.6 L595.5,127.0 596.5,127.0 L596.5,125.9 597.5,125.9 L597.5,123.6 598.5,123.6 L598.5,122.4 599.5,122.4 L599.5,123.6 600.5,123.6 L600.5,126.9 601.5,126.9 L601.5,119.4 602.5,119.4 L602.5,124.8 603.5,124.8 L603.5,122.0 604.5,122.0 L604.5,125.1 605.5,125.1 L605.5,124.9 606.5,124.9 L606.5,119.2 607.5,119.2 L607.5,120.5 608.5,120.5 L608.5,123.2 609.5,123.2 L609.5,120.8 610.5,120.8 L610.5,118.3 611.5,118.3 L611.5,121.0 612.5,121.0 L612.5,118.3 613.5,118.3 L613.5,117.0 614.5,117.0 L614.5,114.6 615.5,114.6 L615.5,111.3 616.5,111.3 L616.5,117.2 617.5,117.2 L617.5,110.6 618.5,110.6 L618.5,111.7 619.5,111.7 L619.5,110.8 620.5,110.8 L620.5,110.6 621.5,110.6 L621.5,108.2 622.5,108.2 L622.5,112.2 623.5,112.2 L623.5,116.2 624.5,116.2 L624.5,109.4 625.5,109.4 L625.5,111.4 626.5,111.4 L626.5,115.6 627.5,115.6 L627.5,112.9 628.5,112.9 L628.5,116.8 629.5,116.8 L629.5,116.3 630.5,116.3 L630.5,113.5 631.5,113.5 L631.5,118.6 632.5,118.6 L632.5,122.4 633.5,122.4 L633.5,120.6 634.5,120.6 L634.5,124.9 635.5,124.9 L635.5,121.2 636.5,121.2 L636.5,120.0 637.5,120.0 L637.5,125.9 638.5,125.9 L638.5,122.8 639.5,122.8 L639.5,124.5 640.5,124.5 L640.5,120.4 641.5,120.4 L641.5,123.1 642.5,123.1 L642.5,125.6 643.5,125.6 L643.5,127.7 644.5,127.7 L644.5,128.2 645.5,128.2 L645.5,130.4 646.5,130.4 L646.5,128.7 647.5,128.7 L647.5,128.4 648.5,128.4 L648.5,125.5 649.5,125.5 L649.5,125.8 650.5,125.8 L650.5,123.3 651.5,123.3 L651.5,120.8 652.5,120.8 L652.5,124.7 653.5,124.7 L653.5,123.9 654.5,123.9 L654.5,119.3 655.5,119.3 L655.5,115.7 656.5,115.7 L656.5,123.4 657.5,123.4 L657.5,122.3 658.5,122.3 L658.5,118.5 659.5,118.5 L659.5,121.5 660.5,121.5 L660.5,118.1 661.5,118.1 L661.5,121.9 662.5,121.9 L662.5,119.3 663.5,119.3 L663.5,119.1 664.5,119.1 L664.5,114.9 665.5,114.9 L665.5,114.8 666.5,114.8 L666.5,111.0 667.5,111.0 L667.5,112.6 668.5,112.6 L668.5,113.9 669.5,113.9 L669.5,115.7 670.5,115.7 L670.5,109.2 671.5,109.2 L671.5,111.1 672.5,111.1 L672.5,113.3 673.5,113.3 L673.5,110.5 674.5,110.5 L674.5,113.0 675.5,113.0 L675.5,118.6 676.5,118.6 L676.5,118.2 677.5,118.2 L677.5,116.7 678.5,116.7 L678.5,119.0 679.5,119.0 L679.5,117.7 680.5,117.7 L680.5,118.1 681.5,118.1 L681.5,118.5 682.5,118.5 L682.5,333.9 681.5,333.9 L681.5,329.9 680.5,329.9 L680.5,328.6 679.5,328.6 L679.5,328.7 678.5,328.7 L678.5,329.6 677.5,329.6 L677.5,326.7 676.5,326.7 L676.5,327.5 675.5,327.5 L675.5,327.0 674.5,327.0 L674.5,327.1 673.5,327.1 L673.5,325.9 672.5,325.9 L672.5,327.9 671.5,327.9 L671.5,326.0 670.5,326.0 L670.5,334.0 669.5,334.0 L669.5,331.8 668.5,331.8 L668.5,329.1 667.5,329.1 L667.5,328.1 666.5,328.1 L666.5,325.6 665.5,325.6 L665.5,324.2 664.5,324.2 L664.5,321.0 663.5,321.0 L663.5,318.3 662.5,318.3 L662.5,317.9 661.5,317.9 L661.5,320.0 660.5,320.0 L660.5,323.4 659.5,323.4 L659.5,325.4 658.5,325.4 L658.5,329.9 657.5,329.9 L657.5,333.4 656.5,333.4 L656.5,328.6 655.5,328.6 L655.5,331.5 654.5,331.5 L654.5,326.2 653.5,326.2 L653.5,325.9 652.5,325.9 L652.5,325.6 651.5,325.6 L651.5,326.7 650.5,326.7 L650.5,330.3 649.5,330.3 L649.5,328.1 648.5,328.1 L648.5,332.4 647.5,332.4 L647.5,331.4 646.5,331.4 L646.5,335.8 645.5,335.8 L645.5,331.6 644.5,331.6 L644.5,336.2 643.5,336.2 L643.5,330.0 642.5,330.0 L642.5,326.1 641.5,326.1 L641.5,328.0 640.5,328.0 L640.5,329.7 639.5,329.7 L639.5,325.8 638.5,325.8 L638.5,328.4 637.5,328.4 L637.5,332.8 636.5,332.8 L636.5,330.2 635.5,330.2 L635.5,330.0 634.5,330.0 L634.5,329.5 633.5,329.5 L633.5,331.0 632.5,331.0 L632.5,326.1 631.5,326.1 L631.5,326.4 630.5,326.4 L630.5,326.0 629.5,326.0 L629.5,335.3 628.5,335.3 L628.5,332.1 627.5,332.1 L627.5,326.6 626.5,326.6 L626.5,331.8 625.5,331.8 L625.5,330.5 624.5,330.5 L624.5,333.9 623.5,333.9 L623.5,327.7 622.5,327.7 L622.5,324.4 621.5,324.4 L621.5,320.4 620.5,320.4 L620.5,324.7 619.5,324.7 L619.5,322.7 618.5,322.7 L618.5,326.7 617.5,326.7 L617.5,330.7 616.5,330.7 L616.5,326.7 615.5,326.7 L615.5,323.8 614.5,323.8 L614.5,324.2 613.5,324.2 L613.5,323.3 612.5,323.3 L612.5,321.2 611.5,321.2 L611.5,323.1 610.5,323.1 L610.5,326.6 609.5,326.6 L609.5,323.9 608.5,323.9 L608.5,331.3 607.5,331.3 L607.5,331.8 606.5,331.8 L606.5,330.8 605.5,330.8 L605.5,335.5 604.5,335.5 L604.5,330.7 603.5,330.7 L603.5,329.5 602.5,329.5 L602.5,325.9 601.5,325.9 L601.5,328.2 600.5,328.2 L600.5,324.0 599.5,324.0 L599.5,325.1 598.5,325.1 L598.5,327.1 597.5,327.1 L597.5,326.7 596.5,326.7 L596.5,328.7 595.5,328.7 L595.5,326.9 594.5,326.9 L594.5,325.9 593.5,325.9 L593.5,324.8 592.5,324.8 L592.5,327.4 591.5,327.4 L591.5,318.4 590.5,318.4 L590.5,328.7 589.5,328.7 L589.5,324.9 588.5,324.9 L588.5,326.3 587.5,326.3 L587.5,329.0 586.5,329.0 L586.5,332.1 585.5,332.1 L585.5,326.5 584.5,326.5 L584.5,325.7 583.5,325.7 L583.5,325.3 582.5,325.3 L582.5,325.1 581.5,325.1 L581.5,323.1 580.5,323.1 L580.5,334.4 579.5,334.4 L579.5,327.6 578.5,327.6 L578.5,328.4 577.5,328.4 L577.5,330.0 576.5,330.0 L576.5,328.5 575.5,328.5 L575.5,322.1 574.5,322.1 L574.5,322.8 573.5,322.8 L573.5,325.6 572.5,325.6 L572.5,323.1 571.5,323.1 L571.5,321.2 570.5,321.2 L570.5,331.1 569.5,331.1 L569.5,328.2 568.5,328.2 L568.5,329.3 567.5,329.3 L567.5,329.6 566.5,329.6 L566.5,327.1 565.5,327.1 L565.5,331.1 564.5,331.1 L564.5,329.9 563.5,329.9 L563.5,331.1 562.5,331.1 L562.5,329.4 561.5,329.4 L561.5,327.2 560.5,327.2 L560.5,324.9 559.5,324.9 L559.5,323.3 558.5,323.3 L558.5,320.6 557.5,320.6 L557.5,323.0 556.5,323.0 L556.5,320.1 555.5,320.1 L555.5,324.9 554.5,324.9 L554.5,323.5 553.5,323.5 L553.5,331.7 552.5,331.7 L552.5,332.3 551.5,332.3 L551.5,329.5 550.5,329.5 L550.5,326.4 549.5,326.4 L549.5,328.7 548.5,328.7 L548.5,327.1 547.5,327.1 L547.5,330.7 546.5,330.7 L546.5,328.7 545.5,328.7 L545.5,333.2 544.5,333.2 L544.5,329.7 543.5,329.7 L543.5,335.7 542.5,335.7 L542.5,336.6 541.5,336.6 L541.5,332.2 540.5,332.2 L540.5,330.1 539.5,330.1 L539.5,332.9 538.5,332.9 L538.5,331.2 537.5,331.2 L537.5,328.5 536.5,328.5 L536.5,326.7 535.5,326.7 L535.5,327.7 534.5,327.7 L534.5,328.9 533.5,328.9 L533.5,328.1 532.5,328.1 L532.5,327.2 531.5,327.2 L531.5,331.8 530.5,331.8 L530.5,332.3 529.5,332.3 L529.5,326.0 528.5,326.0 L528.5,324.9 527.5,324.9 L527.5,321.9 526.5,321.9 L526.5,319.4 525.5,319.4 L525.5,321.2 524.5,321.2 L524.5,322.7 523.5,322.7 L523.5,329.7 522.5,329.7 L522.5,330.2 521.5,330.2 L521.5,331.3 520.5,331.3 L520.5,331.8 519.5,331.8 L519.5,324.6 518.5,324.6 L518.5,325.1 517.5,325.1 L517.5,322.9 516.5,322.9 L516.5,320.9 515.5,320.9 L515.5,323.6 514.5,323.6 L514.5,323.5 513.5,323.5 L513.5,328.2 512.5,328.2 L512.5,335.3 511.5,335.3 L511.5,331.1 510.5,331.1 L510.5,330.2 509.5,330.2 L509.5,331.3 508.5,331.3 L508.5,329.5 507.5,329.5 L507.5,323.8 506.5,323.8 L506.5,327.5 505.5,327.5 L505.5,321.1 504.5,321.1 L504.5,320.2 503.5,320.2 L503.5,321.1 502.5,321.1 L502.5,324.7 501.5,324.7 L501.5,327.7 500.5,327.7 L500.5,330.8 499.5,330.8 L499.5,330.7 498.5,330.7 L498.5,327.9 497.5,327.9 L497.5,326.9 496.5,326.9 L496.5,321.8 495.5,321.8 L495.5,319.3 494.5,319.3 L494.5,326.2 493.5,326.2 L493.5,322.4 492.5,322.4 L492.5,330.4 491.5,330.4 L491.5,329.3 490.5,329.3 L490.5,329.2 489.5,329.2 L489.5,333.1 488.5,333.1 L488.5,335.4 487.5,335.4 L487.5,326.7 486.5,326.7 L486.5,327.6 485.5,327.6 L485.5,323.5 484.5,323.5 L484.5,325.8 483.5,325.8 L483.5,322.4 482.5,322.4 L482.5,323.6 481.5,323.6 L481.5,323.5 480.5,323.5 L480.5,331.8 479.5,331.8 L479.5,327.0 478.5,327.0 L478.5,333.9 477.5,333.9 L477.5,335.3 476.5,335.3 L476.5,337.6 475.5,337.6 L475.5,330.2 474.5,330.2 L474.5,327.8 473.5,327.8 L473.5,327.2 472.5,327.2 L472.5,325.7 471.5,325.7 L471.5,323.3 470.5,323.3 L470.5,325.8 469.5,325.8 L469.5,323.7 468.5,323.7 L468.5,326.5 467.5,326.5 L467.5,331.5 466.5,331.5 L466.5,331.1 465.5,331.1 L465.5,331.9 464.5,331.9 L464.5,334.7 463.5,334.7 L463.5,329.6 462.5,329.6 L462.5,326.7 461.5,326.7 L461.5,326.9 460.5,326.9 L460.5,326.2 459.5,326.2 L459.5,324.7 458.5,324.7 L458.5,323.8 457.5,323.8 L457.5,323.1 456.5,323.1 L456.5,330.2 455.5,330.2 L455.5,330.2 454.5,330.2 L454.5,330.3 453.5,330.3 L453.5,331.7 452.5,331.7 L452.5,333.5 451.5,333.5 L451.5,328.9 450.5,328.9 L450.5,331.1 449.5,331.1 L449.5,329.4 448.5,329.4 L448.5,330.7 447.5,330.7 L447.5,327.3 446.5,327.3 L446.5,323.0 445.5,323.0 L445.5,327.5 444.5,327.5 L444.5,331.5 443.5,331.5 L443.5,335.3 442.5,335.3 L442.5,329.3 441.5,329.3 L441.5,325.5 440.5,325.5 L440.5,321.3 439.5,321.3 L439.5,319.3 438.5,319.3 L438.5,320.5 437.5,320.5 L437.5,323.5 436.5,323.5 L436.5,323.8 435.5,323.8 L435.5,329.2 434.5,329.2 L434.5,329.7 433.5,329.7 L433.5,327.0 432.5,327.0 L432.5,322.9 431.5,322.9 L431.5,323.1 430.5,323.1 L430.5,324.5 429.5,324.5 L429.5,325.7 428.5,325.7 L428.5,326.4 427.5,326.4 L427.5,327.3 426.5,327.3 L426.5,330.6 425.5,330.6 L425.5,332.3 424.5,332.3 L424.5,325.0 423.5,325.0 L423.5,322.9 422.5,322.9 L422.5,322.1 421.5,322.1 L421.5,325.1 420.5,325.1 L420.5,327.0 419.5,327.0 L419.5,327.9 418.5,327.9 L418.5,327.1 417.5,327.1 L417.5,332.4 416.5,332.4 L416.5,333.8 415.5,333.8 L415.5,327.2 414.5,327.2 L414.5,329.7 413.5,329.7 L413.5,323.9 412.5,323.9 L412.5,319.2 411.5,319.2 L411.5,319.1 410.5,319.1 L410.5,322.0 409.5,322.0 L409.5,328.9 408.5,328.9 L408.5,330.5 407.5,330.5 L407.5,329.2 406.5,329.2 L406.5,330.0 405.5,330.0 L405.5,330.9 404.5,330.9 L404.5,327.0 403.5,327.0 L403.5,328.6 402.5,328.6 L402.5,325.5 401.5,325.5 L401.5,334.7 400.5,334.7 L400.5,331.6 399.5,331.6 L399.5,328.7 398.5,328.7 L398.5,338.0 397.5,338.0 L397.5,334.9 396.5,334.9 L396.5,338.7 395.5,338.7 L395.5,334.6 394.5,334.6 L394.5,330.0 393.5,330.0 L393.5,332.5 392.5,332.5 L392.5,332.8 391.5,332.8 L391.5,329.1 390.5,329.1 L390.5,330.9 389.5,330.9 L389.5,332.7 388.5,332.7 L388.5,328.3 387.5,328.3 L387.5,332.3 386.5,332.3 L386.5,333.9 385.5,333.9 L385.5,330.7 384.5,330.7 L384.5,328.2 383.5,328.2 L383.5,328.5 382.5,328.5 L382.5,324.8 381.5,324.8 L381.5,320.9 380.5,320.9 L380.5,319.2 379.5,319.2 L379.5,318.4 378.5,318.4 L378.5,326.4 377.5,326.4 L377.5,325.5 376.5,325.5 L376.5,325.8 375.5,325.8 L375.5,328.4 374.5,328.4 L374.5,330.6 373.5,330.6 L373.5,328.8 372.5,328.8 L372.5,325.7 371.5,325.7 L371.5,327.1 370.5,327.1 L370.5,326.2 369.5,326.2 L369.5,332.1 368.5,332.1 L368.5,329.7 367.5,329.7 L367.5,332.5 366.5,332.5 L366.5,329.7 365.5,329.7 L365.5,331.3 364.5,331.3 L364.5,326.1 363.5,326.1 L363.5,331.4 362.5,331.4 L362.5,324.7 361.5,324.7 L361.5,325.6 360.5,325.6 L360.5,325.2 359.5,325.2 L359.5,327.3 358.5,327.3 L358.5,329.4 357.5,329.4 L357.5,328.4 356.5,328.4 L356.5,325.9 355.5,325.9 L355.5,324.9 354.5,324.9 L354.5,327.1 353.5,327.1 L353.5,323.4 352.5,323.4 L352.5,321.5 351.5,321.5 L351.5,325.3 350.5,325.3 L350.5,324.5 349.5,324.5 L349.5,332.6 348.5,332.6 L348.5,326.9 347.5,326.9 L347.5,325.8 346.5,325.8 L346.5,324.8 345.5,324.8 L345.5,323.3 344.5,323.3 L344.5,329.3 343.5,329.3 L343.5,324.7 342.5,324.7 L342.5,325.4 341.5,325.4 L341.5,329.3 340.5,329.3 L340.5,335.7 339.5,335.7 L339.5,331.3 338.5,331.3 L338.5,332.8 337.5,332.8 L337.5,335.7 336.5,335.7 L336.5,332.4 335.5,332.4 L335.5,329.2 334.5,329.2 L334.5,331.8 333.5,331.8 L333.5,326.3 332.5,326.3 L332.5,327.4 331.5,327.4 L331.5,325.6 330.5,325.6 L330.5,331.5 329.5,331.5 L329.5,331.9 328.5,331.9 L328.5,330.2 327.5,330.2 L327.5,331.3 326.5,331.3 L326.5,329.2 325.5,329.2 L325.5,330.1 324.5,330.1 L324.5,326.4 323.5,326.4 L323.5,323.2 322.5,323.2 L322.5,324.5 321.5,324.5 L321.5,325.2 320.5,325.2 L320.5,327.9 319.5,327.9 L319.5,328.4 318.5,328.4 L318.5,328.0 317.5,328.0 L317.5,331.8 316.5,331.8 L316.5,332.0 315.5,332.0 L315.5,329.9 314.5,329.9 L314.5,328.3 313.5,328.3 L313.5,324.3 312.5,324.3 L312.5,328.5 311.5,328.5 L311.5,324.5 310.5,324.5 L310.5,324.5 309.5,324.5 L309.5,325.5 308.5,325.5 L308.5,326.0 307.5,326.0 L307.5,324.5 306.5,324.5 L306.5,323.4 305.5,323.4 L305.5,318.6 304.5,318.6 L304.5,321.4 303.5,321.4 L303.5,319.6 302.5,319.6 L302.5,322.7 301.5,322.7 L301.5,323.8 300.5,323.8 L300.5,331.9 299.5,331.9 L299.5,336.9 298.5,336.9 L298.5,335.7 297.5,335.7 L297.5,335.7 296.5,335.7 L296.5,330.2 295.5,330.2 L295.5,335.0 294.5,335.0 L294.5,327.5 293.5,327.5 L293.5,325.1 292.5,325.1 L292.5,324.4 291.5,324.4 L291.5,320.7 290.5,320.7 L290.5,329.3 289.5,329.3 L289.5,328.6 288.5,328.6 L288.5,334.4 287.5,334.4 L287.5,334.3 286.5,334.3 L286.5,337.3 285.5,337.3 L285.5,329.6 284.5,329.6 L284.5,330.1 283.5,330.1 L283.5,326.4 282.5,326.4 L282.5,322.9 281.5,322.9 L281.5,323.2 280.5,323.2 L280.5,326.8 279.5,326.8 L279.5,326.8 278.5,326.8 L278.5,326.8 277.5,326.8 L277.5,328.9 276.5,328.9 L276.5,329.1 275.5,329.1 L275.5,332.4 274.5,332.4 L274.5,328.4 273.5,328.4 L273.5,323.8 272.5,323.8 L272.5,325.4 271.5,325.4 L271.5,322.3 270.5,322.3 L270.5,321.6 269.5,321.6 L269.5,315.0 268.5,315.0 L268.5,318.9 267.5,318.9 L267.5,328.1 266.5,328.1 L266.5,323.6 265.5,323.6 L265.5,327.2 264.5,327.2 L264.5,328.6 263.5,328.6 L263.5,326.0 262.5,326.0 L262.5,327.1 261.5,327.1 L261.5,323.5 260.5,323.5 L260.5,324.1 259.5,324.1 L259.5,323.4 258.5,323.4 L258.5,322.8 257.5,322.8 L257.5,327.0 256.5,327.0 L256.5,326.1 255.5,326.1 L255.5,328.7 254.5,328.7 L254.5,326.3 253.5,326.3 L253.5,326.2 252.5,326.2 L252.5,326.4 251.5,326.4 L251.5,323.2 250.5,323.2 L250.5,327.2 249.5,327.2 L249.5,327.3 248.5,327.3 L248.5,332.1 247.5,332.1 L247.5,329.8 246.5,329.8 L246.5,332.2 245.5,332.2 L245.5,337.5 244.5,337.5 L244.5,331.0 243.5,331.0 L243.5,332.1 242.5,332.1 L242.5,328.8 241.5,328.8 L241.5,327.4 240.5,327.4 L240.5,330.7 239.5,330.7 L239.5,328.7 238.5,328.7 L238.5,328.9 237.5,328.9 L237.5,331.1 236.5,331.1 L236.5,333.9 235.5,333.9 L235.5,333.3 234.5,333.3 L234.5,336.0 233.5,336.0 L233.5,332.9 232.5,332.9 L232.5,331.8 231.5,331.8 L231.5,329.1 230.5,329.1 L230.5,330.4 229.5,330.4 L229.5,325.6 228.5,325.6 L228.5,326.5 227.5,326.5 L227.5,325.0 226.5,325.0 L226.5,331.0 225.5,331.0 L225.5,328.2 224.5,328.2 L224.5,328.8 223.5,328.8 L223.5,326.4 222.5,326.4 L222.5,323.6 221.5,323.6 L221.5,321.4 220.5,321.4 L220.5,321.2 219.5,321.2 L219.5,323.9 218.5,323.9 L218.5,327.3 217.5,327.3 L217.5,326.2 216.5,326.2 L216.5,328.2 215.5,328.2 L215.5,333.1 214.5,333.1 L214.5,328.9 213.5,328.9 L213.5,328.8 212.5,328.8 L212.5,322.9 211.5,322.9 L211.5,327.1 210.5,327.1 L210.5,322.7 209.5,322.7 L209.5,319.0 208.5,319.0 L208.5,322.6 207.5,322.6 L207.5,323.7 206.5,323.7 L206.5,324.5 205.5,324.5 L205.5,326.0 204.5,326.0 L204.5,327.5 203.5,327.5 L203.5,333.3 202.5,333.3 L202.5,325.1 201.5,325.1 L201.5,329.6 200.5,329.6 L200.5,327.0 199.5,327.0 L199.5,326.3 198.5,326.3 L198.5,330.1 197.5,330.1 L197.5,331.4 196.5,331.4 L196.5,335.2 195.5,335.2 L195.5,337.6 194.5,337.6 L194.5,336.8 193.5,336.8 L193.5,328.5 192.5,328.5 L192.5,327.8 191.5,327.8 L191.5,325.0 190.5,325.0 L190.5,324.2 189.5,324.2 L189.5,321.0 188.5,321.0 L188.5,321.5 187.5,321.5 L187.5,325.2 186.5,325.2 L186.5,325.9 185.5,325.9 L185.5,332.4 184.5,332.4 L184.5,334.7 183.5,334.7 L183.5,333.3 182.5,333.3 L182.5,328.3 181.5,328.3 L181.5,330.9 180.5,330.9 L180.5,332.0 179.5,332.0 L179.5,324.8 178.5,324.8 L178.5,326.6 177.5,326.6 L177.5,329.4 176.5,329.4 L176.5,329.8 175.5,329.8 L175.5,325.6 174.5,325.6 L174.5,325.1 173.5,325.1 L173.5,333.2 172.5,333.2 L172.5,329.0 171.5,329.0 L171.5,332.0 170.5,332.0 L170.5,327.3 169.5,327.3 L169.5,328.1 168.5,328.1 L168.5,326.5 167.5,326.5 L167.5,322.7 166.5,322.7 L166.5,325.7 165.5,325.7 L165.5,321.1 164.5,321.1 L164.5,322.7 163.5,322.7 L163.5,325.9 162.5,325.9 L162.5,329.4 161.5,329.4 L161.5,326.1 160.5,326.1 L160.5,325.3 159.5,325.3 L159.5,325.9 158.5,325.9 L158.5,324.5 157.5,324.5 L157.5,324.2 156.5,324.2 L156.5,322.3 155.5,322.3 L155.5,329.2 154.5,329.2 L154.5,328.3 153.5,328.3 L153.5,329.7 152.5,329.7 L152.5,331.2 151.5,331.2 L151.5,328.6 150.5,328.6 L150.5,332.0 149.5,332.0 L149.5,329.1 148.5,329.1 L148.5,327.6 147.5,327.6 L147.5,324.4 146.5,324.4 L146.5,326.6 145.5,326.6 L145.5,327.3 144.5,327.3 L144.5,329.4 143.5,329.4 L143.5,330.0 142.5,330.0 L142.5,333.2 141.5,333.2 L141.5,333.4 140.5,333.4 L140.5,328.5 139.5,328.5 L139.5,332.9 138.5,332.9 L138.5,335.2 137.5,335.2 L137.5,329.7 136.5,329.7 L136.5,319.8 135.5,319.8 L135.5,325.1 134.5,325.1 L134.5,323.9 133.5,323.9 L133.5,325.1 132.5,325.1 L132.5,327.9 131.5,327.9 L131.5,327.5 130.5,327.5 L130.5,325.0 129.5,325.0 L129.5,324.1 128.5,324.1 L128.5,326.9 127.5,326.9 L127.5,319.3 126.5,319.3 L126.5,324.6 125.5,324.6 L125.5,321.8 124.5,321.8 L124.5,327.6 123.5,327.6 L123.5,325.3 122.5,325.3 L122.5,325.9 121.5,325.9 L121.5,326.0 120.5,326.0 L120.5,322.7 119.5,322.7 L119.5,319.7 118.5,319.7 L118.5,321.8 117.5,321.8 L117.5,321.3 116.5,321.3 L116.5,322.0 115.5,322.0 L115.5,325.8 114.5,325.8 L114.5,327.9 113.5,327.9 L113.5,334.9 112.5,334.9 L112.5,327.5 111.5,327.5 L111.5,325.9 110.5,325.9 L110.5,326.7 109.5,326.7 L109.5,323.5 108.5,323.5 L108.5,322.3 107.5,322.3 L107.5,326.2 106.5,326.2 L106.5,327.3 105.5,327.3 L105.5,327.6 104.5,327.6 L104.5,328.6 103.5,328.6 L103.5,326.3 102.5,326.3 L102.5,327.4 101.5,327.4 L101.5,324.4 100.5,324.4 L100.5,327.2 99.5,327.2 L99.5,327.7 98.5,327.7 L98.5,331.4 97.5,331.4 L97.5,331.5 96.5,331.5 L96.5,329.6 95.5,329.6 L95.5,332.4 94.5,332.4 L94.5,326.3 93.5,326.3 L93.5,327.4 92.5,327.4 L92.5,324.0 91.5,324.0 L91.5,320.8 90.5,320.8 L90.5,323.4 89.5,323.4 L89.5,323.4 88.5,323.4 L88.5,323.6 87.5,323.6 L87.5,328.3 86.5,328.3 L86.5,334.8 85.5,334.8 L85.5,331.7 84.5,331.7 L84.5,335.6 83.5,335.6 L83.5,333.4 82.5,333.4 Z" fill="#878c06" opacity="0.42"/>
<path d="M82.5,123.5 83.5,123.5 L83.5,125.8 84.5,125.8 L84.5,126.0 85.5,126.0 L85.5,126.5 86.5,126.5 L86.5,128.5 87.5,128.5 L87.5,128.3 88.5,128.3 L88.5,128.6 89.5,128.6 L89.5,131.0 90.5,131.0 L90.5,129.5 91.5,129.5 L91.5,129.3 92.5,129.3 L92.5,129.7 93.5,129.7 L93.5,130.8 94.5,130.8 L94.5,132.3 95.5,132.3 L95.5,132.7 96.5,132.7 L96.5,133.0 97.5,133.0 L97.5,133.3 98.5,133.3 L98.5,132.9 99.5,132.9 L99.5,131.5 100.5,131.5 L100.5,131.7 101.5,131.7 L101.5,130.6 102.5,130.6 L102.5,128.9 103.5,128.9 L103.5,129.6 104.5,129.6 L104.5,128.3 105.5,128.3 L105.5,127.5 106.5,127.5 L106.5,128.8 107.5,128.8 L107.5,127.0 108.5,127.0 L108.5,125.2 109.5,125.2 L109.5,124.8 110.5,124.8 L110.5,126.2 111.5,126.2 L111.5,123.1 112.5,123.1 L112.5,123.2 113.5,123.2 L113.5,122.3 114.5,122.3 L114.5,121.4 115.5,121.4 L115.5,120.6 116.5,120.6 L116.5,118.7 117.5,118.7 L117.5,117.9 118.5,117.9 L118.5,117.2 119.5,117.2 L119.5,116.1 120.5,116.1 L120.5,116.3 121.5,116.3 L121.5,116.9 122.5,116.9 L122.5,115.7 123.5,115.7 L123.5,117.9 124.5,117.9 L124.5,117.4 125.5,117.4 L125.5,118.5 126.5,118.5 L126.5,119.8 127.5,119.8 L127.5,121.0 128.5,121.0 L128.5,121.3 129.5,121.3 L129.5,120.2 130.5,120.2 L130.5,124.6 131.5,124.6 L131.5,123.9 132.5,123.9 L132.5,124.3 133.5,124.3 L133.5,126.2 134.5,126.2 L134.5,125.8 135.5,125.8 L135.5,125.7 136.5,125.7 L136.5,128.1 137.5,128.1 L137.5,128.7 138.5,128.7 L138.5,128.1 139.5,128.1 L139.5,130.2 140.5,130.2 L140.5,130.3 141.5,130.3 L141.5,129.5 142.5,129.5 L142.5,132.6 143.5,132.6 L143.5,131.6 144.5,131.6 L144.5,130.7 145.5,130.7 L145.5,132.4 146.5,132.4 L146.5,132.1 147.5,132.1 L147.5,132.6 148.5,132.6 L148.5,130.1 149.5,130.1 L149.5,131.9 150.5,131.9 L150.5,131.4 151.5,131.4 L151.5,130.6 152.5,130.6 L152.5,130.0 153.5,130.0 L153.5,130.1 154.5,130.1 L154.5,129.0 155.5,129.0 L155.5,127.8 156.5,127.8 L156.5,126.2 157.5,126.2 L157.5,127.3 158.5,127.3 L158.5,126.5 159.5,126.5 L159.5,125.1 160.5,125.1 L160.5,124.3 161.5,124.3 L161.5,124.0 162.5,124.0 L162.5,120.3 163.5,120.3 L163.5,122.0 164.5,122.0 L164.5,118.6 165.5,118.6 L165.5,120.3 166.5,120.3 L166.5,120.1 167.5,120.1 L167.5,120.0 168.5,120.0 L168.5,116.9 169.5,116.9 L169.5,116.8 170.5,116.8 L170.5,115.5 171.5,115.5 L171.5,113.5 172.5,113.5 L172.5,117.1 173.5,117.1 L173.5,117.4 174.5,117.4 L174.5,118.3 175.5,118.3 L175.5,118.3 176.5,118.3 L176.5,120.0 177.5,120.0 L177.5,121.0 178.5,121.0 L178.5,122.9 179.5,122.9 L179.5,122.8 180.5,122.8 L180.5,126.5 181.5,126.5 L181.5,123.7 182.5,123.7 L182.5,124.6 183.5,124.6 L183.5,125.6 184.5,125.6 L184.5,125.6 185.5,125.6 L185.5,128.4 186.5,128.4 L186.5,128.2 187.5,128.2 L187.5,127.1 188.5,127.1 L188.5,129.0 189.5,129.0 L189.5,130.5 190.5,130.5 L190.5,128.7 191.5,128.7 L191.5,130.6 192.5,130.6 L192.5,130.7 193.5,130.7 L193.5,133.5 194.5,133.5 L194.5,132.1 195.5,132.1 L195.5,131.6 196.5,131.6 L196.5,131.5 197.5,131.5 L197.5,133.4 198.5,133.4 L198.5,130.9 199.5,130.9 L199.5,133.0 200.5,133.0 L200.5,129.1 201.5,129.1 L201.5,129.8 202.5,129.8 L202.5,129.2 203.5,129.2 L203.5,128.2 204.5,128.2 L204.5,128.1 205.5,128.1 L205.5,128.3 206.5,128.3 L206.5,126.4 207.5,126.4 L207.5,125.0 208.5,125.0 L208.5,126.8 209.5,126.8 L209.5,126.2 210.5,126.2 L210.5,123.5 211.5,123.5 L211.5,123.6 212.5,123.6 L212.5,120.2 213.5,120.2 L213.5,122.7 214.5,122.7 L214.5,119.7 215.5,119.7 L215.5,119.5 216.5,119.5 L216.5,121.1 217.5,121.1 L217.5,117.1 218.5,117.1 L218.5,117.4 219.5,117.4 L219.5,115.5 220.5,115.5 L220.5,113.8 221.5,113.8 L221.5,114.5 222.5,114.5 L222.5,116.7 223.5,116.7 L223.5,116.2 224.5,116.2 L224.5,117.7 225.5,117.7 L225.5,119.8 226.5,119.8 L226.5,119.9 227.5,119.9 L227.5,119.7 228.5,119.7 L228.5,123.1 229.5,123.1 L229.5,122.7 230.5,122.7 L230.5,124.6 231.5,124.6 L231.5,123.2 232.5,123.2 L232.5,126.4 233.5,126.4 L233.5,124.4 234.5,124.4 L234.5,124.7 235.5,124.7 L235.5,126.6 236.5,126.6 L236.5,127.3 237.5,127.3 L237.5,128.5 238.5,128.5 L238.5,128.4 239.5,128.4 L239.5,130.0 240.5,130.0 L240.5,131.2 241.5,131.2 L241.5,129.9 242.5,129.9 L242.5,129.7 243.5,129.7 L243.5,131.0 244.5,131.0 L244.5,132.5 245.5,132.5 L245.5,132.7 246.5,132.7 L246.5,131.7 247.5,131.7 L247.5,130.8 248.5,130.8 L248.5,131.3 249.5,131.3 L249.5,131.8 250.5,131.8 L250.5,129.8 251.5,129.8 L251.5,131.2 252.5,131.2 L252.5,129.7 253.5,129.7 L253.5,129.2 254.5,129.2 L254.5,127.7 255.5,127.7 L255.5,128.9 256.5,128.9 L256.5,127.0 257.5,127.0 L257.5,124.9 258.5,124.9 L258.5,126.3 259.5,126.3 L259.5,124.5 260.5,124.5 L260.5,125.1 261.5,125.1 L261.5,123.5 262.5,123.5 L262.5,122.0 263.5,122.0 L263.5,121.9 264.5,121.9 L264.5,120.4 265.5,120.4 L265.5,119.3 266.5,119.3 L266.5,119.2 267.5,119.2 L267.5,119.0 268.5,119.0 L268.5,117.4 269.5,117.4 L269.5,116.4 270.5,116.4 L270.5,115.0 271.5,115.0 L271.5,116.0 272.5,116.0 L272.5,116.7 273.5,116.7 L273.5,118.2 274.5,118.2 L274.5,118.6 275.5,118.6 L275.5,121.1 276.5,121.1 L276.5,118.6 277.5,118.6 L277.5,120.8 278.5,120.8 L278.5,122.2 279.5,122.2 L279.5,123.4 280.5,123.4 L280.5,121.9 281.5,121.9 L281.5,123.0 282.5,123.0 L282.5,124.8 283.5,124.8 L283.5,126.6 284.5,126.6 L284.5,127.3 285.5,127.3 L285.5,125.6 286.5,125.6 L286.5,127.8 287.5,127.8 L287.5,129.4 288.5,129.4 L288.5,128.9 289.5,128.9 L289.5,128.5 290.5,128.5 L290.5,129.3 291.5,129.3 L291.5,129.3 292.5,129.3 L292.5,132.0 293.5,132.0 L293.5,131.1 294.5,131.1 L294.5,131.3 295.5,131.3 L295.5,131.2 296.5,131.2 L296.5,131.8 297.5,131.8 L297.5,130.9 298.5,130.9 L298.5,130.5 299.5,130.5 L299.5,130.9 300.5,130.9 L300.5,130.3 301.5,130.3 L301.5,130.4 302.5,130.4 L302.5,129.6 303.5,129.6 L303.5,130.0 304.5,130.0 L304.5,128.2 305.5,128.2 L305.5,127.9 306.5,127.9 L306.5,127.2 307.5,127.2 L307.5,125.6 308.5,125.6 L308.5,126.7 309.5,126.7 L309.5,124.4 310.5,124.4 L310.5,122.7 311.5,122.7 L311.5,124.5 312.5,124.5 L312.5,123.1 313.5,123.1 L313.5,121.2 314.5,121.2 L314.5,121.8 315.5,121.8 L315.5,120.9 316.5,120.9 L316.5,119.8 317.5,119.8 L317.5,117.2 318.5,117.2 L318.5,117.5 319.5,117.5 L319.5,115.5 320.5,115.5 L320.5,115.0 321.5,115.0 L321.5,115.0 322.5,115.0 L322.5,115.7 323.5,115.7 L323.5,117.8 324.5,117.8 L324.5,117.6 325.5,117.6 L325.5,119.7 326.5,119.7 L326.5,120.2 327.5,120.2 L327.5,120.3 328.5,120.3 L328.5,121.9 329.5,121.9 L329.5,123.2 330.5,123.2 L330.5,124.4 331.5,124.4 L331.5,123.9 332.5,123.9 L332.5,126.4 333.5,126.4 L333.5,126.1 334.5,126.1 L334.5,127.4 335.5,127.4 L335.5,125.8 336.5,125.8 L336.5,126.7 337.5,126.7 L337.5,129.4 338.5,129.4 L338.5,128.7 339.5,128.7 L339.5,129.9 340.5,129.9 L340.5,131.1 341.5,131.1 L341.5,129.2 342.5,129.2 L342.5,131.4 343.5,131.4 L343.5,133.1 344.5,133.1 L344.5,132.4 345.5,132.4 L345.5,132.0 346.5,132.0 L346.5,132.5 347.5,132.5 L347.5,131.7 348.5,131.7 L348.5,132.1 349.5,132.1 L349.5,132.1 350.5,132.1 L350.5,130.3 351.5,130.3 L351.5,130.5 352.5,130.5 L352.5,129.7 353.5,129.7 L353.5,129.6 354.5,129.6 L354.5,129.0 355.5,129.0 L355.5,126.7 356.5,126.7 L356.5,128.0 357.5,128.0 L357.5,127.1 358.5,127.1 L358.5,124.6 359.5,124.6 L359.5,124.6 360.5,124.6 L360.5,122.8 361.5,122.8 L361.5,123.1 362.5,123.1 L362.5,122.8 363.5,122.8 L363.5,120.7 364.5,120.7 L364.5,120.2 365.5,120.2 L365.5,119.2 366.5,119.2 L366.5,118.5 367.5,118.5 L367.5,117.6 368.5,117.6 L368.5,116.4 369.5,116.4 L369.5,117.0 370.5,117.0 L370.5,115.3 371.5,115.3 L371.5,114.8 372.5,114.8 L372.5,117.3 373.5,117.3 L373.5,116.9 374.5,116.9 L374.5,119.1 375.5,119.1 L375.5,118.0 376.5,118.0 L376.5,121.3 377.5,121.3 L377.5,120.5 378.5,120.5 L378.5,120.9 379.5,120.9 L379.5,122.9 380.5,122.9 L380.5,122.1 381.5,122.1 L381.5,123.1 382.5,123.1 L382.5,125.1 383.5,125.1 L383.5,125.2 384.5,125.2 L384.5,126.7 385.5,126.7 L385.5,127.1 386.5,127.1 L386.5,127.9 387.5,127.9 L387.5,128.4 388.5,128.4 L388.5,129.5 389.5,129.5 L389.5,129.5 390.5,129.5 L390.5,131.0 391.5,131.0 L391.5,131.4 392.5,131.4 L392.5,129.2 393.5,129.2 L393.5,129.8 394.5,129.8 L394.5,133.1 395.5,133.1 L395.5,131.6 396.5,131.6 L396.5,132.1 397.5,132.1 L397.5,131.6 398.5,131.6 L398.5,131.6 399.5,131.6 L399.5,133.0 400.5,133.0 L400.5,129.9 401.5,129.9 L401.5,130.1 402.5,130.1 L402.5,129.5 403.5,129.5 L403.5,127.9 404.5,127.9 L404.5,127.5 405.5,127.5 L405.5,127.4 406.5,127.4 L406.5,127.0 407.5,127.0 L407.5,126.7 408.5,126.7 L408.5,123.8 409.5,123.8 L409.5,123.4 410.5,123.4 L410.5,125.6 411.5,125.6 L411.5,123.2 412.5,123.2 L412.5,123.3 413.5,123.3 L413.5,121.3 414.5,121.3 L414.5,120.2 415.5,120.2 L415.5,121.9 416.5,121.9 L416.5,118.0 417.5,118.0 L417.5,117.4 418.5,117.4 L418.5,118.0 419.5,118.0 L419.5,116.5 420.5,116.5 L420.5,114.0 421.5,114.0 L421.5,115.6 422.5,115.6 L422.5,117.1 423.5,117.1 L423.5,116.0 424.5,116.0 L424.5,117.8 425.5,117.8 L425.5,119.9 426.5,119.9 L426.5,121.8 427.5,121.8 L427.5,118.8 428.5,118.8 L428.5,121.1 429.5,121.1 L429.5,122.6 430.5,122.6 L430.5,122.5 431.5,122.5 L431.5,123.3 432.5,123.3 L432.5,124.4 433.5,124.4 L433.5,126.1 434.5,126.1 L434.5,125.3 435.5,125.3 L435.5,127.8 436.5,127.8 L436.5,128.4 437.5,128.4 L437.5,129.0 438.5,129.0 L438.5,130.3 439.5,130.3 L439.5,129.0 440.5,129.0 L440.5,129.9 441.5,129.9 L441.5,131.4 442.5,131.4 L442.5,132.1 443.5,132.1 L443.5,132.2 444.5,132.2 L444.5,131.3 445.5,131.3 L445.5,131.5 446.5,131.5 L446.5,130.8 447.5,130.8 L447.5,131.3 448.5,131.3 L448.5,130.5 449.5,130.5 L449.5,130.5 450.5,130.5 L450.5,130.1 451.5,130.1 L451.5,130.7 452.5,130.7 L452.5,130.2 453.5,130.2 L453.5,128.8 454.5,128.8 L454.5,127.2 455.5,127.2 L455.5,127.6 456.5,127.6 L456.5,127.4 457.5,127.4 L457.5,127.1 458.5,127.1 L458.5,125.8 459.5,125.8 L459.5,125.6 460.5,125.6 L460.5,123.5 461.5,123.5 L461.5,123.9 462.5,123.9 L462.5,123.2 463.5,123.2 L463.5,121.4 464.5,121.4 L464.5,120.2 465.5,120.2 L465.5,121.1 466.5,121.1 L466.5,118.3 467.5,118.3 L467.5,118.9 468.5,118.9 L468.5,117.1 469.5,117.1 L469.5,116.1 470.5,116.1 L470.5,115.3 471.5,115.3 L471.5,115.1 472.5,115.1 L472.5,116.4 473.5,116.4 L473.5,119.0 474.5,119.0 L474.5,119.6 475.5,119.6 L475.5,119.0 476.5,119.0 L476.5,120.5 477.5,120.5 L477.5,121.7 478.5,121.7 L478.5,121.3 479.5,121.3 L479.5,124.2 480.5,124.2 L480.5,123.4 481.5,123.4 L481.5,124.7 482.5,124.7 L482.5,124.0 483.5,124.0 L483.5,124.6 484.5,124.6 L484.5,125.4 485.5,125.4 L485.5,126.4 486.5,126.4 L486.5,128.6 487.5,128.6 L487.5,128.0 488.5,128.0 L488.5,129.7 489.5,129.7 L489.5,129.1 490.5,129.1 L490.5,129.1 491.5,129.1 L491.5,130.6 492.5,130.6 L492.5,130.6 493.5,130.6 L493.5,129.9 494.5,129.9 L494.5,131.7 495.5,131.7 L495.5,133.0 496.5,133.0 L496.5,131.8 497.5,131.8 L497.5,130.6 498.5,130.6 L498.5,130.7 499.5,130.7 L499.5,129.9 500.5,129.9 L500.5,130.3 501.5,130.3 L501.5,129.1 502.5,129.1 L502.5,129.4 503.5,129.4 L503.5,129.0 504.5,129.0 L504.5,129.5 505.5,129.5 L505.5,126.6 506.5,126.6 L506.5,125.1 507.5,125.1 L507.5,127.8 508.5,127.8 L508.5,126.0 509.5,126.0 L509.5,124.5 510.5,124.5 L510.5,124.6 511.5,124.6 L511.5,122.5 512.5,122.5 L512.5,122.2 513.5,122.2 L513.5,122.3 514.5,122.3 L514.5,120.6 515.5,120.6 L515.5,120.1 516.5,120.1 L516.5,119.6 517.5,119.6 L517.5,118.4 518.5,118.4 L518.5,117.1 519.5,117.1 L519.5,116.9 520.5,116.9 L520.5,116.7 521.5,116.7 L521.5,116.7 522.5,116.7 L522.5,115.7 523.5,115.7 L523.5,118.0 524.5,118.0 L524.5,116.6 525.5,116.6 L525.5,117.9 526.5,117.9 L526.5,120.4 527.5,120.4 L527.5,121.4 528.5,121.4 L528.5,122.9 529.5,122.9 L529.5,121.0 530.5,121.0 L530.5,124.3 531.5,124.3 L531.5,123.6 532.5,123.6 L532.5,124.4 533.5,124.4 L533.5,126.0 534.5,126.0 L534.5,127.6 535.5,127.6 L535.5,126.1 536.5,126.1 L536.5,126.1 537.5,126.1 L537.5,127.7 538.5,127.7 L538.5,128.8 539.5,128.8 L539.5,130.5 540.5,130.5 L540.5,130.3 541.5,130.3 L541.5,130.2 542.5,130.2 L542.5,130.5 543.5,130.5 L543.5,130.9 544.5,130.9 L544.5,132.6 545.5,132.6 L545.5,130.5 546.5,130.5 L546.5,131.3 547.5,131.3 L547.5,130.9 548.5,130.9 L548.5,132.4 549.5,132.4 L549.5,131.1 550.5,131.1 L550.5,129.9 551.5,129.9 L551.5,130.7 552.5,130.7 L552.5,131.2 553.5,131.2 L553.5,129.8 554.5,129.8 L554.5,127.1 555.5,127.1 L555.5,127.5 556.5,127.5 L556.5,128.0 557.5,128.0 L557.5,124.7 558.5,124.7 L558.5,124.5 559.5,124.5 L559.5,124.5 560.5,124.5 L560.5,124.6 561.5,124.6 L561.5,122.6 562.5,122.6 L562.5,122.7 563.5,122.7 L563.5,121.6 564.5,121.6 L564.5,121.2 565.5,121.2 L565.5,118.9 566.5,118.9 L566.5,117.2 567.5,117.2 L567.5,116.3 568.5,116.3 L568.5,117.5 569.5,117.5 L569.5,117.3 570.5,117.3 L570.5,115.9 571.5,115.9 L571.5,114.1 572.5,114.1 L572.5,114.9 573.5,114.9 L573.5,117.1 574.5,117.1 L574.5,117.4 575.5,117.4 L575.5,117.5 576.5,117.5 L576.5,119.5 577.5,119.5 L577.5,120.2 578.5,120.2 L578.5,121.6 579.5,121.6 L579.5,122.9 580.5,122.9 L580.5,123.5 581.5,123.5 L581.5,124.3 582.5,124.3 L582.5,125.3 583.5,125.3 L583.5,125.5 584.5,125.5 L584.5,125.9 585.5,125.9 L585.5,126.7 586.5,126.7 L586.5,128.7 587.5,128.7 L587.5,128.0 588.5,128.0 L588.5,129.6 589.5,129.6 L589.5,130.9 590.5,130.9 L590.5,131.5 591.5,131.5 L591.5,128.5 592.5,128.5 L592.5,131.1 593.5,131.1 L593.5,132.2 594.5,132.2 L594.5,131.3 595.5,131.3 L595.5,131.3 596.5,131.3 L596.5,130.7 597.5,130.7 L597.5,131.1 598.5,131.1 L598.5,131.3 599.5,131.3 L599.5,129.2 600.5,129.2 L600.5,130.5 601.5,130.5 L601.5,129.2 602.5,129.2 L602.5,129.5 603.5,129.5 L603.5,127.9 604.5,127.9 L604.5,128.3 605.5,128.3 L605.5,127.8 606.5,127.8 L606.5,126.3 607.5,126.3 L607.5,125.7 608.5,125.7 L608.5,126.4 609.5,126.4 L609.5,125.4 610.5,125.4 L610.5,123.4 611.5,123.4 L611.5,123.7 612.5,123.7 L612.5,121.5 613.5,121.5 L613.5,121.2 614.5,121.2 L614.5,118.2 615.5,118.2 L615.5,119.5 616.5,119.5 L616.5,119.8 617.5,119.8 L617.5,117.8 618.5,117.8 L618.5,117.9 619.5,117.9 L619.5,115.8 620.5,115.8 L620.5,115.8 621.5,115.8 L621.5,115.4 622.5,115.4 L622.5,115.5 623.5,115.5 L623.5,119.2 624.5,119.2 L624.5,117.5 625.5,117.5 L625.5,117.9 626.5,117.9 L626.5,120.1 627.5,120.1 L627.5,121.3 628.5,121.3 L628.5,122.0 629.5,122.0 L629.5,122.4 630.5,122.4 L630.5,123.7 631.5,123.7 L631.5,124.9 632.5,124.9 L632.5,125.4 633.5,125.4 L633.5,124.3 634.5,124.3 L634.5,127.8 635.5,127.8 L635.5,126.9 636.5,126.9 L636.5,125.8 637.5,125.8 L637.5,129.0 638.5,129.0 L638.5,128.7 639.5,128.7 L639.5,129.7 640.5,129.7 L640.5,131.8 641.5,131.8 L641.5,130.0 642.5,130.0 L642.5,130.4 643.5,130.4 L643.5,130.5 644.5,130.5 L644.5,131.9 645.5,131.9 L645.5,132.5 646.5,132.5 L646.5,132.3 647.5,132.3 L647.5,131.8 648.5,131.8 L648.5,129.4 649.5,129.4 L649.5,131.2 650.5,131.2 L650.5,131.4 651.5,131.4 L651.5,129.5 652.5,129.5 L652.5,129.0 653.5,129.0 L653.5,128.0 654.5,128.0 L654.5,128.5 655.5,128.5 L655.5,126.2 656.5,126.2 L656.5,128.7 657.5,128.7 L657.5,126.1 658.5,126.1 L658.5,125.0 659.5,125.0 L659.5,123.7 660.5,123.7 L660.5,124.6 661.5,124.6 L661.5,124.2 662.5,124.2 L662.5,122.0 663.5,122.0 L663.5,121.9 664.5,121.9 L664.5,121.1 665.5,121.1 L665.5,120.9 666.5,120.9 L666.5,119.7 667.5,119.7 L667.5,119.4 668.5,119.4 L668.5,116.1 669.5,116.1 L669.5,118.8 670.5,118.8 L670.5,115.0 671.5,115.0 L671.5,114.5 672.5,114.5 L672.5,115.6 673.5,115.6 L673.5,117.7 674.5,117.7 L674.5,118.9 675.5,118.9 L675.5,121.3 676.5,121.3 L676.5,121.1 677.5,121.1 L677.5,120.2 678.5,120.2 L678.5,121.4 679.5,121.4 L679.5,122.1 680.5,122.1 L680.5,122.8 681.5,122.8 L681.5,123.9 682.5,123.9 L682.5,326.2 681.5,326.2 L681.5,327.9 680.5,327.9 L680.5,326.5 679.5,326.5 L679.5,324.8 678.5,324.8 L678.5,323.6 677.5,323.6 L677.5,322.4 676.5,322.4 L676.5,319.7 675.5,319.7 L675.5,319.3 674.5,319.3 L674.5,320.9 673.5,320.9 L673.5,320.1 672.5,320.1 L672.5,323.9 671.5,323.9 L671.5,323.1 670.5,323.1 L670.5,328.2 669.5,328.2 L669.5,329.5 668.5,329.5 L668.5,326.1 667.5,326.1 L667.5,324.8 666.5,324.8 L666.5,319.9 665.5,319.9 L665.5,318.4 664.5,318.4 L664.5,316.0 663.5,316.0 L663.5,314.6 662.5,314.6 L662.5,315.7 661.5,315.7 L661.5,314.6 660.5,314.6 L660.5,319.5 659.5,319.5 L659.5,322.4 658.5,322.4 L658.5,326.3 657.5,326.3 L657.5,326.5 656.5,326.5 L656.5,326.2 655.5,326.2 L655.5,325.4 654.5,325.4 L654.5,323.5 653.5,323.5 L653.5,321.5 652.5,321.5 L652.5,321.8 651.5,321.8 L651.5,321.5 650.5,321.5 L650.5,322.9 649.5,322.9 L649.5,325.4 648.5,325.4 L648.5,326.9 647.5,326.9 L647.5,328.0 646.5,328.0 L646.5,329.3 645.5,329.3 L645.5,328.2 644.5,328.2 L644.5,329.0 643.5,329.0 L643.5,325.8 642.5,325.8 L642.5,322.8 641.5,322.8 L641.5,323.0 640.5,323.0 L640.5,322.9 639.5,322.9 L639.5,321.5 638.5,321.5 L638.5,323.3 637.5,323.3 L637.5,323.9 636.5,323.9 L636.5,326.3 635.5,326.3 L635.5,327.4 634.5,327.4 L634.5,326.9 633.5,326.9 L633.5,323.6 632.5,323.6 L632.5,322.6 631.5,322.6 L631.5,322.2 630.5,322.2 L630.5,319.9 629.5,319.9 L629.5,325.2 628.5,325.2 L628.5,324.7 627.5,324.7 L627.5,323.9 626.5,323.9 L626.5,326.2 625.5,326.2 L625.5,325.8 624.5,325.8 L624.5,323.0 623.5,323.0 L623.5,321.0 622.5,321.0 L622.5,319.7 621.5,319.7 L621.5,317.0 620.5,317.0 L620.5,317.4 619.5,317.4 L619.5,319.0 618.5,319.0 L618.5,321.3 617.5,321.3 L617.5,322.9 616.5,322.9 L616.5,323.4 615.5,323.4 L615.5,321.0 614.5,321.0 L614.5,319.7 613.5,319.7 L613.5,318.5 612.5,318.5 L612.5,316.3 611.5,316.3 L611.5,317.8 610.5,317.8 L610.5,321.7 609.5,321.7 L609.5,321.7 608.5,321.7 L608.5,324.9 607.5,324.9 L607.5,327.1 606.5,327.1 L606.5,328.7 605.5,328.7 L605.5,327.1 604.5,327.1 L604.5,327.5 603.5,327.5 L603.5,324.0 602.5,324.0 L602.5,322.9 601.5,322.9 L601.5,321.4 600.5,321.4 L600.5,320.3 599.5,320.3 L599.5,321.0 598.5,321.0 L598.5,323.2 597.5,323.2 L597.5,324.7 596.5,324.7 L596.5,326.4 595.5,326.4 L595.5,324.1 594.5,324.1 L594.5,320.9 593.5,320.9 L593.5,320.1 592.5,320.1 L592.5,318.7 591.5,318.7 L591.5,315.1 590.5,315.1 L590.5,317.9 589.5,317.9 L589.5,321.3 588.5,321.3 L588.5,322.7 587.5,322.7 L587.5,327.0 586.5,327.0 L586.5,328.5 585.5,328.5 L585.5,324.2 584.5,324.2 L584.5,323.2 583.5,323.2 L583.5,321.8 582.5,321.8 L582.5,321.2 581.5,321.2 L581.5,320.1 580.5,320.1 L580.5,324.6 579.5,324.6 L579.5,322.2 578.5,322.2 L578.5,325.1 577.5,325.1 L577.5,323.9 576.5,323.9 L576.5,324.0 575.5,324.0 L575.5,319.5 574.5,319.5 L574.5,319.6 573.5,319.6 L573.5,317.4 572.5,317.4 L572.5,318.4 571.5,318.4 L571.5,318.3 570.5,318.3 L570.5,320.5 569.5,320.5 L569.5,322.3 568.5,322.3 L568.5,324.3 567.5,324.3 L567.5,323.4 566.5,323.4 L566.5,323.3 565.5,323.3 L565.5,321.7 564.5,321.7 L564.5,323.6 563.5,323.6 L563.5,323.1 562.5,323.1 L562.5,325.2 561.5,325.2 L561.5,324.4 560.5,324.4 L560.5,322.1 559.5,322.1 L559.5,320.3 558.5,320.3 L558.5,317.1 557.5,317.1 L557.5,317.0 556.5,317.0 L556.5,315.4 555.5,315.4 L555.5,320.1 554.5,320.1 L554.5,320.9 553.5,320.9 L553.5,325.6 552.5,325.6 L552.5,325.8 551.5,325.8 L551.5,326.9 550.5,326.9 L550.5,324.2 549.5,324.2 L549.5,323.9 548.5,323.9 L548.5,324.1 547.5,324.1 L547.5,323.2 546.5,323.2 L546.5,323.2 545.5,323.2 L545.5,324.6 544.5,324.6 L544.5,326.4 543.5,326.4 L543.5,329.1 542.5,329.1 L542.5,328.9 541.5,328.9 L541.5,329.0 540.5,329.0 L540.5,326.7 539.5,326.7 L539.5,327.6 538.5,327.6 L538.5,326.2 537.5,326.2 L537.5,325.6 536.5,325.6 L536.5,323.2 535.5,323.2 L535.5,321.9 534.5,321.9 L534.5,325.2 533.5,325.2 L533.5,323.8 532.5,323.8 L532.5,325.1 531.5,325.1 L531.5,327.8 530.5,327.8 L530.5,326.6 529.5,326.6 L529.5,321.9 528.5,321.9 L528.5,321.5 527.5,321.5 L527.5,318.4 526.5,318.4 L526.5,316.8 525.5,316.8 L525.5,317.4 524.5,317.4 L524.5,319.8 523.5,319.8 L523.5,320.0 522.5,320.0 L522.5,323.8 521.5,323.8 L521.5,325.6 520.5,325.6 L520.5,323.3 519.5,323.3 L519.5,320.2 518.5,320.2 L518.5,319.7 517.5,319.7 L517.5,319.4 516.5,319.4 L516.5,317.0 515.5,317.0 L515.5,318.5 514.5,318.5 L514.5,320.1 513.5,320.1 L513.5,321.6 512.5,321.6 L512.5,325.0 511.5,325.0 L511.5,326.5 510.5,326.5 L510.5,327.9 509.5,327.9 L509.5,324.2 508.5,324.2 L508.5,323.8 507.5,323.8 L507.5,320.7 506.5,320.7 L506.5,320.2 505.5,320.2 L505.5,318.5 504.5,318.5 L504.5,315.8 503.5,315.8 L503.5,319.0 502.5,319.0 L502.5,320.0 501.5,320.0 L501.5,323.6 500.5,323.6 L500.5,326.4 499.5,326.4 L499.5,325.9 498.5,325.9 L498.5,323.8 497.5,323.8 L497.5,321.1 496.5,321.1 L496.5,318.5 495.5,318.5 L495.5,316.9 494.5,316.9 L494.5,319.2 493.5,319.2 L493.5,319.9 492.5,319.9 L492.5,322.3 491.5,322.3 L491.5,324.8 490.5,324.8 L490.5,325.5 489.5,325.5 L489.5,327.5 488.5,327.5 L488.5,327.7 487.5,327.7 L487.5,324.5 486.5,324.5 L486.5,320.0 485.5,320.0 L485.5,318.6 484.5,318.6 L484.5,316.9 483.5,316.9 L483.5,316.8 482.5,316.8 L482.5,319.0 481.5,319.0 L481.5,319.7 480.5,319.7 L480.5,321.7 479.5,321.7 L479.5,324.1 478.5,324.1 L478.5,326.9 477.5,326.9 L477.5,328.2 476.5,328.2 L476.5,326.6 475.5,326.6 L475.5,325.1 474.5,325.1 L474.5,323.8 473.5,323.8 L473.5,324.1 472.5,324.1 L472.5,321.9 471.5,321.9 L471.5,319.5 470.5,319.5 L470.5,320.1 469.5,320.1 L469.5,321.0 468.5,321.0 L468.5,322.2 467.5,322.2 L467.5,324.3 466.5,324.3 L466.5,325.1 465.5,325.1 L465.5,327.8 464.5,327.8 L464.5,329.8 463.5,329.8 L463.5,326.2 462.5,326.2 L462.5,324.0 461.5,324.0 L461.5,324.5 460.5,324.5 L460.5,321.3 459.5,321.3 L459.5,321.1 458.5,321.1 L458.5,318.9 457.5,318.9 L457.5,320.8 456.5,320.8 L456.5,322.9 455.5,322.9 L455.5,324.7 454.5,324.7 L454.5,325.5 453.5,325.5 L453.5,326.0 452.5,326.0 L452.5,328.1 451.5,328.1 L451.5,326.0 450.5,326.0 L450.5,325.8 449.5,325.8 L449.5,324.4 448.5,324.4 L448.5,322.4 447.5,322.4 L447.5,321.5 446.5,321.5 L446.5,320.4 445.5,320.4 L445.5,322.9 444.5,322.9 L444.5,325.8 443.5,325.8 L443.5,325.9 442.5,325.9 L442.5,322.7 441.5,322.7 L441.5,319.7 440.5,319.7 L440.5,318.8 439.5,318.8 L439.5,314.1 438.5,314.1 L438.5,316.2 437.5,316.2 L437.5,319.5 436.5,319.5 L436.5,320.3 435.5,320.3 L435.5,324.4 434.5,324.4 L434.5,325.4 433.5,325.4 L433.5,323.2 432.5,323.2 L432.5,320.0 431.5,320.0 L431.5,321.0 430.5,321.0 L430.5,322.1 429.5,322.1 L429.5,322.2 428.5,322.2 L428.5,322.9 427.5,322.9 L427.5,324.9 426.5,324.9 L426.5,326.5 425.5,326.5 L425.5,323.8 424.5,323.8 L424.5,321.3 423.5,321.3 L423.5,318.9 422.5,318.9 L422.5,319.0 421.5,319.0 L421.5,320.7 420.5,320.7 L420.5,321.5 419.5,321.5 L419.5,322.6 418.5,322.6 L418.5,323.0 417.5,323.0 L417.5,326.0 416.5,326.0 L416.5,326.0 415.5,326.0 L415.5,322.4 414.5,322.4 L414.5,321.1 413.5,321.1 L413.5,318.7 412.5,318.7 L412.5,313.0 411.5,313.0 L411.5,313.9 410.5,313.9 L410.5,317.3 409.5,317.3 L409.5,318.7 408.5,318.7 L408.5,323.0 407.5,323.0 L407.5,325.3 406.5,325.3 L406.5,327.1 405.5,327.1 L405.5,326.7 404.5,326.7 L404.5,324.0 403.5,324.0 L403.5,324.6 402.5,324.6 L402.5,323.2 401.5,323.2 L401.5,325.4 400.5,325.4 L400.5,327.4 399.5,327.4 L399.5,325.7 398.5,325.7 L398.5,329.9 397.5,329.9 L397.5,328.7 396.5,328.7 L396.5,330.4 395.5,330.4 L395.5,329.7 394.5,329.7 L394.5,325.8 393.5,325.8 L393.5,327.8 392.5,327.8 L392.5,326.8 391.5,326.8 L391.5,324.1 390.5,324.1 L390.5,326.4 389.5,326.4 L389.5,326.4 388.5,326.4 L388.5,325.5 387.5,325.5 L387.5,328.1 386.5,328.1 L386.5,327.5 385.5,327.5 L385.5,326.9 384.5,326.9 L384.5,325.1 383.5,325.1 L383.5,323.3 382.5,323.3 L382.5,320.5 381.5,320.5 L381.5,318.3 380.5,318.3 L380.5,315.5 379.5,315.5 L379.5,314.5 378.5,314.5 L378.5,316.9 377.5,316.9 L377.5,320.4 376.5,320.4 L376.5,321.9 375.5,321.9 L375.5,326.2 374.5,326.2 L374.5,325.0 373.5,325.0 L373.5,323.1 372.5,323.1 L372.5,321.9 371.5,321.9 L371.5,319.7 370.5,319.7 L370.5,321.7 369.5,321.7 L369.5,324.7 368.5,324.7 L368.5,323.9 367.5,323.9 L367.5,325.7 366.5,325.7 L366.5,326.3 365.5,326.3 L365.5,323.9 364.5,323.9 L364.5,324.1 363.5,324.1 L363.5,323.6 362.5,323.6 L362.5,321.6 361.5,321.6 L361.5,322.0 360.5,322.0 L360.5,322.6 359.5,322.6 L359.5,323.5 358.5,323.5 L358.5,326.0 357.5,326.0 L357.5,326.0 356.5,326.0 L356.5,323.8 355.5,323.8 L355.5,322.1 354.5,322.1 L354.5,319.5 353.5,319.5 L353.5,319.1 352.5,319.1 L352.5,318.6 351.5,318.6 L351.5,320.7 350.5,320.7 L350.5,321.3 349.5,321.3 L349.5,324.2 348.5,324.2 L348.5,324.7 347.5,324.7 L347.5,322.7 346.5,322.7 L346.5,321.8 345.5,321.8 L345.5,319.9 344.5,319.9 L344.5,319.6 343.5,319.6 L343.5,322.5 342.5,322.5 L342.5,322.3 341.5,322.3 L341.5,326.0 340.5,326.0 L340.5,327.3 339.5,327.3 L339.5,327.9 338.5,327.9 L338.5,329.1 337.5,329.1 L337.5,328.8 336.5,328.8 L336.5,327.7 335.5,327.7 L335.5,326.0 334.5,326.0 L334.5,324.2 333.5,324.2 L333.5,322.2 332.5,322.2 L332.5,322.5 331.5,322.5 L331.5,323.5 330.5,323.5 L330.5,325.7 329.5,325.7 L329.5,326.9 328.5,326.9 L328.5,327.6 327.5,327.6 L327.5,329.2 326.5,329.2 L326.5,326.0 325.5,326.0 L325.5,323.7 324.5,323.7 L324.5,323.1 323.5,323.1 L323.5,319.6 322.5,319.6 L322.5,319.4 321.5,319.4 L321.5,320.2 320.5,320.2 L320.5,322.2 319.5,322.2 L319.5,323.5 318.5,323.5 L318.5,325.1 317.5,325.1 L317.5,327.7 316.5,327.7 L316.5,327.7 315.5,327.7 L315.5,325.1 314.5,325.1 L314.5,323.0 313.5,323.0 L313.5,321.3 312.5,321.3 L312.5,319.6 311.5,319.6 L311.5,320.4 310.5,320.4 L310.5,320.1 309.5,320.1 L309.5,321.9 308.5,321.9 L308.5,323.1 307.5,323.1 L307.5,320.9 306.5,320.9 L306.5,319.0 305.5,319.0 L305.5,315.0 304.5,315.0 L304.5,314.5 303.5,314.5 L303.5,315.4 302.5,315.4 L302.5,318.0 301.5,318.0 L301.5,321.5 300.5,321.5 L300.5,323.6 299.5,323.6 L299.5,327.0 298.5,327.0 L298.5,330.5 297.5,330.5 L297.5,329.0 296.5,329.0 L296.5,325.7 295.5,325.7 L295.5,325.6 294.5,325.6 L294.5,320.5 293.5,320.5 L293.5,321.8 292.5,321.8 L292.5,318.2 291.5,318.2 L291.5,318.7 290.5,318.7 L290.5,324.1 289.5,324.1 L289.5,322.3 288.5,322.3 L288.5,326.9 287.5,326.9 L287.5,328.1 286.5,328.1 L286.5,327.4 285.5,327.4 L285.5,324.3 284.5,324.3 L284.5,324.4 283.5,324.4 L283.5,321.6 282.5,321.6 L282.5,318.9 281.5,318.9 L281.5,319.5 280.5,319.5 L280.5,321.4 279.5,321.4 L279.5,322.6 278.5,322.6 L278.5,324.8 277.5,324.8 L277.5,325.7 276.5,325.7 L276.5,327.0 275.5,327.0 L275.5,328.3 274.5,328.3 L274.5,325.2 273.5,325.2 L273.5,321.5 272.5,321.5 L272.5,321.5 271.5,321.5 L271.5,318.1 270.5,318.1 L270.5,316.7 269.5,316.7 L269.5,312.3 268.5,312.3 L268.5,314.3 267.5,314.3 L267.5,318.7 266.5,318.7 L266.5,318.9 265.5,318.9 L265.5,321.4 264.5,321.4 L264.5,324.1 263.5,324.1 L263.5,321.7 262.5,321.7 L262.5,319.8 261.5,319.8 L261.5,319.6 260.5,319.6 L260.5,316.3 259.5,316.3 L259.5,317.4 258.5,317.4 L258.5,318.9 257.5,318.9 L257.5,322.3 256.5,322.3 L256.5,322.7 255.5,322.7 L255.5,326.0 254.5,326.0 L254.5,322.5 253.5,322.5 L253.5,321.1 252.5,321.1 L252.5,318.9 251.5,318.9 L251.5,320.5 250.5,320.5 L250.5,320.9 249.5,320.9 L249.5,323.2 248.5,323.2 L248.5,325.2 247.5,325.2 L247.5,326.7 246.5,326.7 L246.5,329.7 245.5,329.7 L245.5,331.0 244.5,331.0 L244.5,327.1 243.5,327.1 L243.5,327.1 242.5,327.1 L242.5,324.7 241.5,324.7 L241.5,324.6 240.5,324.6 L240.5,323.3 239.5,323.3 L239.5,321.5 238.5,321.5 L238.5,322.7 237.5,322.7 L237.5,323.9 236.5,323.9 L236.5,325.7 235.5,325.7 L235.5,326.8 234.5,326.8 L234.5,327.7 233.5,327.7 L233.5,327.4 232.5,327.4 L232.5,327.5 231.5,327.5 L231.5,325.6 230.5,325.6 L230.5,323.9 229.5,323.9 L229.5,322.0 228.5,322.0 L228.5,320.3 227.5,320.3 L227.5,322.2 226.5,322.2 L226.5,323.5 225.5,323.5 L225.5,324.7 224.5,324.7 L224.5,323.7 223.5,323.7 L223.5,323.4 222.5,323.4 L222.5,320.8 221.5,320.8 L221.5,319.3 220.5,319.3 L220.5,317.3 219.5,317.3 L219.5,320.1 218.5,320.1 L218.5,321.1 217.5,321.1 L217.5,323.2 216.5,323.2 L216.5,324.9 215.5,324.9 L215.5,328.1 214.5,328.1 L214.5,326.7 213.5,326.7 L213.5,324.3 212.5,324.3 L212.5,320.8 211.5,320.8 L211.5,320.7 210.5,320.7 L210.5,315.6 209.5,315.6 L209.5,315.6 208.5,315.6 L208.5,318.1 207.5,318.1 L207.5,320.2 206.5,320.2 L206.5,321.4 205.5,321.4 L205.5,323.4 204.5,323.4 L204.5,325.3 203.5,325.3 L203.5,324.1 202.5,324.1 L202.5,322.9 201.5,322.9 L201.5,320.5 200.5,320.5 L200.5,322.6 199.5,322.6 L199.5,323.1 198.5,323.1 L198.5,325.5 197.5,325.5 L197.5,327.2 196.5,327.2 L196.5,329.6 195.5,329.6 L195.5,330.8 194.5,330.8 L194.5,328.4 193.5,328.4 L193.5,326.2 192.5,326.2 L192.5,323.4 191.5,323.4 L191.5,321.7 190.5,321.7 L190.5,320.2 189.5,320.2 L189.5,317.0 188.5,317.0 L188.5,318.8 187.5,318.8 L187.5,321.7 186.5,321.7 L186.5,322.8 185.5,322.8 L185.5,324.9 184.5,324.9 L184.5,327.5 183.5,327.5 L183.5,328.3 182.5,328.3 L182.5,325.7 181.5,325.7 L181.5,325.9 180.5,325.9 L180.5,324.9 179.5,324.9 L179.5,321.7 178.5,321.7 L178.5,321.2 177.5,321.2 L177.5,320.9 176.5,320.9 L176.5,321.3 175.5,321.3 L175.5,322.8 174.5,322.8 L174.5,322.9 173.5,322.9 L173.5,324.9 172.5,324.9 L172.5,326.1 171.5,326.1 L171.5,327.6 170.5,327.6 L170.5,323.3 169.5,323.3 L169.5,322.2 168.5,322.2 L168.5,323.4 167.5,323.4 L167.5,320.0 166.5,320.0 L166.5,318.1 165.5,318.1 L165.5,317.6 164.5,317.6 L164.5,319.4 163.5,319.4 L163.5,321.2 162.5,321.2 L162.5,324.7 161.5,324.7 L161.5,323.7 160.5,323.7 L160.5,320.1 159.5,320.1 L159.5,319.4 158.5,319.4 L158.5,318.6 157.5,318.6 L157.5,317.5 156.5,317.5 L156.5,317.3 155.5,317.3 L155.5,323.9 154.5,323.9 L154.5,324.4 153.5,324.4 L153.5,323.5 152.5,323.5 L152.5,328.4 151.5,328.4 L151.5,324.0 150.5,324.0 L150.5,323.1 149.5,323.1 L149.5,323.4 148.5,323.4 L148.5,323.1 147.5,323.1 L147.5,321.2 146.5,321.2 L146.5,323.0 145.5,323.0 L145.5,324.7 144.5,324.7 L144.5,326.9 143.5,326.9 L143.5,326.7 142.5,326.7 L142.5,330.2 141.5,330.2 L141.5,328.2 140.5,328.2 L140.5,326.4 139.5,326.4 L139.5,324.1 138.5,324.1 L138.5,323.5 137.5,323.5 L137.5,318.1 136.5,318.1 L136.5,316.9 135.5,316.9 L135.5,317.2 134.5,317.2 L134.5,320.6 133.5,320.6 L133.5,320.7 132.5,320.7 L132.5,323.5 131.5,323.5 L131.5,324.8 130.5,324.8 L130.5,321.2 129.5,321.2 L129.5,320.5 128.5,320.5 L128.5,318.4 127.5,318.4 L127.5,313.6 126.5,313.6 L126.5,317.6 125.5,317.6 L125.5,318.9 124.5,318.9 L124.5,320.5 123.5,320.5 L123.5,323.0 122.5,323.0 L122.5,323.8 121.5,323.8 L121.5,321.7 120.5,321.7 L120.5,319.7 119.5,319.7 L119.5,317.3 118.5,317.3 L118.5,315.9 117.5,315.9 L117.5,314.4 116.5,314.4 L116.5,318.7 115.5,318.7 L115.5,320.9 114.5,320.9 L114.5,323.1 113.5,323.1 L113.5,326.5 112.5,326.5 L112.5,323.5 111.5,323.5 L111.5,322.0 110.5,322.0 L110.5,320.0 109.5,320.0 L109.5,320.6 108.5,320.6 L108.5,317.6 107.5,317.6 L107.5,318.8 106.5,318.8 L106.5,320.9 105.5,320.9 L105.5,322.6 104.5,322.6 L104.5,326.4 103.5,326.4 L103.5,324.2 102.5,324.2 L102.5,324.1 101.5,324.1 L101.5,321.6 100.5,321.6 L100.5,322.5 99.5,322.5 L99.5,324.7 98.5,324.7 L98.5,325.5 97.5,325.5 L97.5,328.2 96.5,328.2 L96.5,327.4 95.5,327.4 L95.5,325.1 94.5,325.1 L94.5,322.6 93.5,322.6 L93.5,320.1 92.5,320.1 L92.5,320.0 91.5,320.0 L91.5,318.4 90.5,318.4 L90.5,318.0 89.5,318.0 L89.5,320.8 88.5,320.8 L88.5,321.4 87.5,321.4 L87.5,324.4 86.5,324.4 L86.5,327.2 85.5,327.2 L85.5,329.0 84.5,329.0 L84.5,330.9 83.5,330.9 L83.5,329.1 82.5,329.1 Z" fill="#878c06"/></g></g><rect x="83" y="118" width="599" height="50" fill="url(#gDark)"/><rect x="83" y="290" width="599" height="36" fill="url(#gDark)"/><use href="#markers"/></g></g>
<g clip-path="url(#cBR)"><g transform="translate(802,482)"><use href="#chrome"/><use href="#grid"/><g clip-path="url(#gridClip)"><g filter="url(#soft)"><path d="M82.5,81.3 83.5,81.3 L83.5,82.7 84.5,82.7 L84.5,80.2 85.5,80.2 L85.5,79.7 86.5,79.7 L86.5,75.1 87.5,75.1 L87.5,79.9 88.5,79.9 L88.5,76.2 89.5,76.2 L89.5,75.1 90.5,75.1 L90.5,68.9 91.5,68.9 L91.5,71.7 92.5,71.7 L92.5,67.9 93.5,67.9 L93.5,70.3 94.5,70.3 L94.5,65.0 95.5,65.0 L95.5,66.1 96.5,66.1 L96.5,67.6 97.5,67.6 L97.5,63.9 98.5,63.9 L98.5,57.4 99.5,57.4 L99.5,62.5 100.5,62.5 L100.5,65.7 101.5,65.7 L101.5,64.7 102.5,64.7 L102.5,66.6 103.5,66.6 L103.5,67.2 104.5,67.2 L104.5,67.9 105.5,67.9 L105.5,68.5 106.5,68.5 L106.5,74.0 107.5,74.0 L107.5,72.0 108.5,72.0 L108.5,74.3 109.5,74.3 L109.5,72.1 110.5,72.1 L110.5,77.2 111.5,77.2 L111.5,77.7 112.5,77.7 L112.5,80.3 113.5,80.3 L113.5,78.8 114.5,78.8 L114.5,80.8 115.5,80.8 L115.5,83.7 116.5,83.7 L116.5,83.3 117.5,83.3 L117.5,86.6 118.5,86.6 L118.5,85.1 119.5,85.1 L119.5,84.8 120.5,84.8 L120.5,84.8 121.5,84.8 L121.5,89.4 122.5,89.4 L122.5,88.9 123.5,88.9 L123.5,89.3 124.5,89.3 L124.5,92.1 125.5,92.1 L125.5,91.9 126.5,91.9 L126.5,88.8 127.5,88.8 L127.5,87.9 128.5,87.9 L128.5,87.4 129.5,87.4 L129.5,88.4 130.5,88.4 L130.5,86.7 131.5,86.7 L131.5,86.5 132.5,86.5 L132.5,81.3 133.5,81.3 L133.5,79.0 134.5,79.0 L134.5,80.2 135.5,80.2 L135.5,80.2 136.5,80.2 L136.5,78.4 137.5,78.4 L137.5,75.2 138.5,75.2 L138.5,77.1 139.5,77.1 L139.5,72.1 140.5,72.1 L140.5,75.0 141.5,75.0 L141.5,70.7 142.5,70.7 L142.5,66.2 143.5,66.2 L143.5,71.4 144.5,71.4 L144.5,69.0 145.5,69.0 L145.5,66.2 146.5,66.2 L146.5,65.3 147.5,65.3 L147.5,61.9 148.5,61.9 L148.5,64.7 149.5,64.7 L149.5,57.1 150.5,57.1 L150.5,60.7 151.5,60.7 L151.5,64.8 152.5,64.8 L152.5,60.9 153.5,60.9 L153.5,70.4 154.5,70.4 L154.5,72.0 155.5,72.0 L155.5,71.4 156.5,71.4 L156.5,71.4 157.5,71.4 L157.5,75.0 158.5,75.0 L158.5,72.8 159.5,72.8 L159.5,75.2 160.5,75.2 L160.5,77.6 161.5,77.6 L161.5,82.1 162.5,82.1 L162.5,80.2 163.5,80.2 L163.5,77.6 164.5,77.6 L164.5,83.1 165.5,83.1 L165.5,81.9 166.5,81.9 L166.5,79.1 167.5,79.1 L167.5,84.9 168.5,84.9 L168.5,84.2 169.5,84.2 L169.5,80.4 170.5,80.4 L170.5,89.0 171.5,89.0 L171.5,87.1 172.5,87.1 L172.5,90.6 173.5,90.6 L173.5,90.4 174.5,90.4 L174.5,82.2 175.5,82.2 L175.5,88.1 176.5,88.1 L176.5,89.1 177.5,89.1 L177.5,87.8 178.5,87.8 L178.5,82.9 179.5,82.9 L179.5,85.4 180.5,85.4 L180.5,86.1 181.5,86.1 L181.5,81.4 182.5,81.4 L182.5,78.0 183.5,78.0 L183.5,78.5 184.5,78.5 L184.5,81.7 185.5,81.7 L185.5,79.4 186.5,79.4 L186.5,81.1 187.5,81.1 L187.5,75.5 188.5,75.5 L188.5,77.7 189.5,77.7 L189.5,74.9 190.5,74.9 L190.5,73.6 191.5,73.6 L191.5,72.4 192.5,72.4 L192.5,63.9 193.5,63.9 L193.5,69.7 194.5,69.7 L194.5,64.8 195.5,64.8 L195.5,68.4 196.5,68.4 L196.5,59.9 197.5,59.9 L197.5,62.4 198.5,62.4 L198.5,62.4 199.5,62.4 L199.5,63.3 200.5,63.3 L200.5,65.4 201.5,65.4 L201.5,64.1 202.5,64.1 L202.5,69.2 203.5,69.2 L203.5,66.0 204.5,66.0 L204.5,70.1 205.5,70.1 L205.5,70.6 206.5,70.6 L206.5,64.1 207.5,64.1 L207.5,75.8 208.5,75.8 L208.5,75.0 209.5,75.0 L209.5,77.4 210.5,77.4 L210.5,77.9 211.5,77.9 L211.5,78.9 212.5,78.9 L212.5,76.7 213.5,76.7 L213.5,77.0 214.5,77.0 L214.5,82.6 215.5,82.6 L215.5,83.1 216.5,83.1 L216.5,83.3 217.5,83.3 L217.5,83.2 218.5,83.2 L218.5,89.2 219.5,89.2 L219.5,86.7 220.5,86.7 L220.5,88.8 221.5,88.8 L221.5,85.7 222.5,85.7 L222.5,91.3 223.5,91.3 L223.5,90.1 224.5,90.1 L224.5,88.2 225.5,88.2 L225.5,87.9 226.5,87.9 L226.5,89.3 227.5,89.3 L227.5,89.6 228.5,89.6 L228.5,85.0 229.5,85.0 L229.5,86.1 230.5,86.1 L230.5,80.3 231.5,80.3 L231.5,83.5 232.5,83.5 L232.5,83.8 233.5,83.8 L233.5,83.2 234.5,83.2 L234.5,81.2 235.5,81.2 L235.5,77.4 236.5,77.4 L236.5,77.7 237.5,77.7 L237.5,76.6 238.5,76.6 L238.5,76.6 239.5,76.6 L239.5,74.3 240.5,74.3 L240.5,77.1 241.5,77.1 L241.5,71.6 242.5,71.6 L242.5,70.8 243.5,70.8 L243.5,71.7 244.5,71.7 L244.5,69.9 245.5,69.9 L245.5,67.1 246.5,67.1 L246.5,62.8 247.5,62.8 L247.5,61.5 248.5,61.5 L248.5,58.4 249.5,58.4 L249.5,62.0 250.5,62.0 L250.5,64.4 251.5,64.4 L251.5,59.0 252.5,59.0 L252.5,68.7 253.5,68.7 L253.5,69.7 254.5,69.7 L254.5,69.8 255.5,69.8 L255.5,70.1 256.5,70.1 L256.5,69.1 257.5,69.1 L257.5,69.7 258.5,69.7 L258.5,75.8 259.5,75.8 L259.5,78.5 260.5,78.5 L260.5,78.2 261.5,78.2 L261.5,78.7 262.5,78.7 L262.5,74.6 263.5,74.6 L263.5,80.9 264.5,80.9 L264.5,80.3 265.5,80.3 L265.5,80.6 266.5,80.6 L266.5,82.0 267.5,82.0 L267.5,85.9 268.5,85.9 L268.5,84.5 269.5,84.5 L269.5,85.7 270.5,85.7 L270.5,90.4 271.5,90.4 L271.5,86.2 272.5,86.2 L272.5,89.3 273.5,89.3 L273.5,84.4 274.5,84.4 L274.5,87.6 275.5,87.6 L275.5,92.2 276.5,92.2 L276.5,84.8 277.5,84.8 L277.5,88.3 278.5,88.3 L278.5,85.5 279.5,85.5 L279.5,87.5 280.5,87.5 L280.5,84.7 281.5,84.7 L281.5,84.7 282.5,84.7 L282.5,81.7 283.5,81.7 L283.5,77.8 284.5,77.8 L284.5,79.2 285.5,79.2 L285.5,79.2 286.5,79.2 L286.5,76.4 287.5,76.4 L287.5,75.2 288.5,75.2 L288.5,78.9 289.5,78.9 L289.5,72.6 290.5,72.6 L290.5,72.5 291.5,72.5 L291.5,73.7 292.5,73.7 L292.5,70.0 293.5,70.0 L293.5,69.6 294.5,69.6 L294.5,70.0 295.5,70.0 L295.5,60.2 296.5,60.2 L296.5,63.3 297.5,63.3 L297.5,66.2 298.5,66.2 L298.5,60.9 299.5,60.9 L299.5,60.2 300.5,60.2 L300.5,62.3 301.5,62.3 L301.5,60.2 302.5,60.2 L302.5,63.0 303.5,63.0 L303.5,64.6 304.5,64.6 L304.5,67.6 305.5,67.6 L305.5,73.3 306.5,73.3 L306.5,72.9 307.5,72.9 L307.5,71.3 308.5,71.3 L308.5,75.2 309.5,75.2 L309.5,77.9 310.5,77.9 L310.5,72.2 311.5,72.2 L311.5,77.8 312.5,77.8 L312.5,78.7 313.5,78.7 L313.5,80.7 314.5,80.7 L314.5,77.4 315.5,77.4 L315.5,81.6 316.5,81.6 L316.5,81.8 317.5,81.8 L317.5,84.9 318.5,84.9 L318.5,85.6 319.5,85.6 L319.5,82.3 320.5,82.3 L320.5,88.0 321.5,88.0 L321.5,89.3 322.5,89.3 L322.5,89.7 323.5,89.7 L323.5,90.1 324.5,90.1 L324.5,87.6 325.5,87.6 L325.5,90.2 326.5,90.2 L326.5,88.1 327.5,88.1 L327.5,86.7 328.5,86.7 L328.5,81.2 329.5,81.2 L329.5,85.7 330.5,85.7 L330.5,83.9 331.5,83.9 L331.5,84.6 332.5,84.6 L332.5,82.5 333.5,82.5 L333.5,83.2 334.5,83.2 L334.5,78.5 335.5,78.5 L335.5,77.2 336.5,77.2 L336.5,77.0 337.5,77.0 L337.5,78.3 338.5,78.3 L338.5,75.3 339.5,75.3 L339.5,72.5 340.5,72.5 L340.5,75.2 341.5,75.2 L341.5,72.4 342.5,72.4 L342.5,73.5 343.5,73.5 L343.5,67.4 344.5,67.4 L344.5,61.6 345.5,61.6 L345.5,62.6 346.5,62.6 L346.5,64.7 347.5,64.7 L347.5,58.5 348.5,58.5 L348.5,64.7 349.5,64.7 L349.5,58.3 350.5,58.3 L350.5,64.9 351.5,64.9 L351.5,61.1 352.5,61.1 L352.5,64.2 353.5,64.2 L353.5,67.2 354.5,67.2 L354.5,70.1 355.5,70.1 L355.5,68.9 356.5,68.9 L356.5,67.8 357.5,67.8 L357.5,70.5 358.5,70.5 L358.5,77.4 359.5,77.4 L359.5,76.7 360.5,76.7 L360.5,75.0 361.5,75.0 L361.5,78.6 362.5,78.6 L362.5,81.3 363.5,81.3 L363.5,78.3 364.5,78.3 L364.5,81.7 365.5,81.7 L365.5,80.7 366.5,80.7 L366.5,83.8 367.5,83.8 L367.5,83.9 368.5,83.9 L368.5,86.3 369.5,86.3 L369.5,89.0 370.5,89.0 L370.5,87.8 371.5,87.8 L371.5,88.1 372.5,88.1 L372.5,90.1 373.5,90.1 L373.5,89.2 374.5,89.2 L374.5,86.8 375.5,86.8 L375.5,85.8 376.5,85.8 L376.5,91.2 377.5,91.2 L377.5,87.2 378.5,87.2 L378.5,88.3 379.5,88.3 L379.5,86.5 380.5,86.5 L380.5,82.3 381.5,82.3 L381.5,79.8 382.5,79.8 L382.5,80.1 383.5,80.1 L383.5,82.1 384.5,82.1 L384.5,83.5 385.5,83.5 L385.5,71.5 386.5,71.5 L386.5,74.9 387.5,74.9 L387.5,70.8 388.5,70.8 L388.5,76.6 389.5,76.6 L389.5,71.9 390.5,71.9 L390.5,70.6 391.5,70.6 L391.5,73.0 392.5,73.0 L392.5,68.0 393.5,68.0 L393.5,67.7 394.5,67.7 L394.5,69.3 395.5,69.3 L395.5,61.5 396.5,61.5 L396.5,63.1 397.5,63.1 L397.5,65.2 398.5,65.2 L398.5,61.2 399.5,61.2 L399.5,52.9 400.5,52.9 L400.5,60.4 401.5,60.4 L401.5,64.4 402.5,64.4 L402.5,67.1 403.5,67.1 L403.5,69.7 404.5,69.7 L404.5,69.0 405.5,69.0 L405.5,70.1 406.5,70.1 L406.5,71.7 407.5,71.7 L407.5,75.4 408.5,75.4 L408.5,68.2 409.5,68.2 L409.5,77.2 410.5,77.2 L410.5,79.1 411.5,79.1 L411.5,79.4 412.5,79.4 L412.5,79.8 413.5,79.8 L413.5,80.4 414.5,80.4 L414.5,84.6 415.5,84.6 L415.5,83.9 416.5,83.9 L416.5,85.3 417.5,85.3 L417.5,84.9 418.5,84.9 L418.5,86.9 419.5,86.9 L419.5,87.1 420.5,87.1 L420.5,87.2 421.5,87.2 L421.5,84.8 422.5,84.8 L422.5,87.8 423.5,87.8 L423.5,88.3 424.5,88.3 L424.5,89.4 425.5,89.4 L425.5,88.3 426.5,88.3 L426.5,88.0 427.5,88.0 L427.5,85.4 428.5,85.4 L428.5,83.6 429.5,83.6 L429.5,82.3 430.5,82.3 L430.5,85.8 431.5,85.8 L431.5,85.7 432.5,85.7 L432.5,83.9 433.5,83.9 L433.5,81.8 434.5,81.8 L434.5,79.5 435.5,79.5 L435.5,80.7 436.5,80.7 L436.5,79.5 437.5,79.5 L437.5,75.5 438.5,75.5 L438.5,77.2 439.5,77.2 L439.5,75.2 440.5,75.2 L440.5,74.9 441.5,74.9 L441.5,73.6 442.5,73.6 L442.5,70.4 443.5,70.4 L443.5,69.9 444.5,69.9 L444.5,67.1 445.5,67.1 L445.5,69.5 446.5,69.5 L446.5,68.6 447.5,68.6 L447.5,63.6 448.5,63.6 L448.5,64.2 449.5,64.2 L449.5,64.1 450.5,64.1 L450.5,62.5 451.5,62.5 L451.5,63.3 452.5,63.3 L452.5,64.9 453.5,64.9 L453.5,65.1 454.5,65.1 L454.5,69.9 455.5,69.9 L455.5,69.8 456.5,69.8 L456.5,66.8 457.5,66.8 L457.5,72.2 458.5,72.2 L458.5,74.8 459.5,74.8 L459.5,74.0 460.5,74.0 L460.5,76.5 461.5,76.5 L461.5,77.3 462.5,77.3 L462.5,79.3 463.5,79.3 L463.5,82.0 464.5,82.0 L464.5,81.3 465.5,81.3 L465.5,80.0 466.5,80.0 L466.5,81.4 467.5,81.4 L467.5,81.0 468.5,81.0 L468.5,86.9 469.5,86.9 L469.5,82.3 470.5,82.3 L470.5,83.1 471.5,83.1 L471.5,88.6 472.5,88.6 L472.5,83.5 473.5,83.5 L473.5,90.4 474.5,90.4 L474.5,92.2 475.5,92.2 L475.5,89.1 476.5,89.1 L476.5,89.1 477.5,89.1 L477.5,89.0 478.5,89.0 L478.5,85.9 479.5,85.9 L479.5,87.8 480.5,87.8 L480.5,83.5 481.5,83.5 L481.5,86.2 482.5,86.2 L482.5,83.2 483.5,83.2 L483.5,78.2 484.5,78.2 L484.5,79.5 485.5,79.5 L485.5,78.1 486.5,78.1 L486.5,77.9 487.5,77.9 L487.5,76.2 488.5,76.2 L488.5,77.3 489.5,77.3 L489.5,72.5 490.5,72.5 L490.5,68.8 491.5,68.8 L491.5,70.2 492.5,70.2 L492.5,69.2 493.5,69.2 L493.5,69.8 494.5,69.8 L494.5,66.8 495.5,66.8 L495.5,64.0 496.5,64.0 L496.5,68.5 497.5,68.5 L497.5,64.5 498.5,64.5 L498.5,58.0 499.5,58.0 L499.5,62.6 500.5,62.6 L500.5,60.5 501.5,60.5 L501.5,67.6 502.5,67.6 L502.5,64.5 503.5,64.5 L503.5,70.7 504.5,70.7 L504.5,66.7 505.5,66.7 L505.5,65.4 506.5,65.4 L506.5,72.1 507.5,72.1 L507.5,70.6 508.5,70.6 L508.5,73.8 509.5,73.8 L509.5,73.9 510.5,73.9 L510.5,76.4 511.5,76.4 L511.5,76.6 512.5,76.6 L512.5,79.6 513.5,79.6 L513.5,79.3 514.5,79.3 L514.5,81.1 515.5,81.1 L515.5,83.5 516.5,83.5 L516.5,85.2 517.5,85.2 L517.5,85.3 518.5,85.3 L518.5,81.7 519.5,81.7 L519.5,88.4 520.5,88.4 L520.5,83.3 521.5,83.3 L521.5,89.5 522.5,89.5 L522.5,89.2 523.5,89.2 L523.5,88.8 524.5,88.8 L524.5,87.0 525.5,87.0 L525.5,87.8 526.5,87.8 L526.5,87.3 527.5,87.3 L527.5,86.6 528.5,86.6 L528.5,87.8 529.5,87.8 L529.5,85.6 530.5,85.6 L530.5,85.1 531.5,85.1 L531.5,86.9 532.5,86.9 L532.5,80.5 533.5,80.5 L533.5,81.3 534.5,81.3 L534.5,76.1 535.5,76.1 L535.5,80.7 536.5,80.7 L536.5,76.6 537.5,76.6 L537.5,74.1 538.5,74.1 L538.5,76.3 539.5,76.3 L539.5,72.7 540.5,72.7 L540.5,73.9 541.5,73.9 L541.5,73.3 542.5,73.3 L542.5,69.8 543.5,69.8 L543.5,72.5 544.5,72.5 L544.5,67.5 545.5,67.5 L545.5,68.2 546.5,68.2 L546.5,64.0 547.5,64.0 L547.5,64.6 548.5,64.6 L548.5,59.6 549.5,59.6 L549.5,57.6 550.5,57.6 L550.5,59.6 551.5,59.6 L551.5,63.7 552.5,63.7 L552.5,62.5 553.5,62.5 L553.5,63.6 554.5,63.6 L554.5,66.5 555.5,66.5 L555.5,70.9 556.5,70.9 L556.5,66.0 557.5,66.0 L557.5,72.8 558.5,72.8 L558.5,74.1 559.5,74.1 L559.5,75.9 560.5,75.9 L560.5,79.2 561.5,79.2 L561.5,76.8 562.5,76.8 L562.5,80.0 563.5,80.0 L563.5,80.4 564.5,80.4 L564.5,78.0 565.5,78.0 L565.5,77.8 566.5,77.8 L566.5,86.3 567.5,86.3 L567.5,84.3 568.5,84.3 L568.5,87.9 569.5,87.9 L569.5,87.5 570.5,87.5 L570.5,85.6 571.5,85.6 L571.5,90.2 572.5,90.2 L572.5,85.3 573.5,85.3 L573.5,85.5 574.5,85.5 L574.5,86.9 575.5,86.9 L575.5,88.6 576.5,88.6 L576.5,88.2 577.5,88.2 L577.5,86.7 578.5,86.7 L578.5,88.3 579.5,88.3 L579.5,83.4 580.5,83.4 L580.5,84.6 581.5,84.6 L581.5,83.8 582.5,83.8 L582.5,81.3 583.5,81.3 L583.5,81.7 584.5,81.7 L584.5,81.4 585.5,81.4 L585.5,76.6 586.5,76.6 L586.5,78.4 587.5,78.4 L587.5,75.4 588.5,75.4 L588.5,77.4 589.5,77.4 L589.5,71.3 590.5,71.3 L590.5,73.8 591.5,73.8 L591.5,70.9 592.5,70.9 L592.5,68.9 593.5,68.9 L593.5,72.0 594.5,72.0 L594.5,62.4 595.5,62.4 L595.5,68.5 596.5,68.5 L596.5,66.3 597.5,66.3 L597.5,61.6 598.5,61.6 L598.5,60.8 599.5,60.8 L599.5,59.4 600.5,59.4 L600.5,60.8 601.5,60.8 L601.5,58.7 602.5,58.7 L602.5,69.9 603.5,69.9 L603.5,70.2 604.5,70.2 L604.5,68.7 605.5,68.7 L605.5,71.4 606.5,71.4 L606.5,72.9 607.5,72.9 L607.5,73.5 608.5,73.5 L608.5,76.3 609.5,76.3 L609.5,78.2 610.5,78.2 L610.5,74.9 611.5,74.9 L611.5,70.6 612.5,70.6 L612.5,77.4 613.5,77.4 L613.5,79.3 614.5,79.3 L614.5,81.0 615.5,81.0 L615.5,81.2 616.5,81.2 L616.5,84.5 617.5,84.5 L617.5,87.1 618.5,87.1 L618.5,84.2 619.5,84.2 L619.5,83.2 620.5,83.2 L620.5,89.3 621.5,89.3 L621.5,90.8 622.5,90.8 L622.5,90.7 623.5,90.7 L623.5,88.8 624.5,88.8 L624.5,92.8 625.5,92.8 L625.5,91.2 626.5,91.2 L626.5,88.8 627.5,88.8 L627.5,81.0 628.5,81.0 L628.5,86.8 629.5,86.8 L629.5,88.0 630.5,88.0 L630.5,85.6 631.5,85.6 L631.5,84.2 632.5,84.2 L632.5,81.0 633.5,81.0 L633.5,83.1 634.5,83.1 L634.5,80.3 635.5,80.3 L635.5,81.0 636.5,81.0 L636.5,78.3 637.5,78.3 L637.5,76.9 638.5,76.9 L638.5,73.7 639.5,73.7 L639.5,72.5 640.5,72.5 L640.5,69.1 641.5,69.1 L641.5,69.5 642.5,69.5 L642.5,73.0 643.5,73.0 L643.5,70.4 644.5,70.4 L644.5,62.7 645.5,62.7 L645.5,67.7 646.5,67.7 L646.5,60.8 647.5,60.8 L647.5,61.9 648.5,61.9 L648.5,62.0 649.5,62.0 L649.5,61.0 650.5,61.0 L650.5,60.2 651.5,60.2 L651.5,68.4 652.5,68.4 L652.5,65.5 653.5,65.5 L653.5,69.9 654.5,69.9 L654.5,71.5 655.5,71.5 L655.5,66.3 656.5,66.3 L656.5,73.5 657.5,73.5 L657.5,74.0 658.5,74.0 L658.5,75.7 659.5,75.7 L659.5,77.8 660.5,77.8 L660.5,74.9 661.5,74.9 L661.5,76.6 662.5,76.6 L662.5,79.9 663.5,79.9 L663.5,79.6 664.5,79.6 L664.5,82.3 665.5,82.3 L665.5,85.5 666.5,85.5 L666.5,81.7 667.5,81.7 L667.5,77.6 668.5,77.6 L668.5,81.8 669.5,81.8 L669.5,90.0 670.5,90.0 L670.5,88.9 671.5,88.9 L671.5,88.5 672.5,88.5 L672.5,90.3 673.5,90.3 L673.5,87.7 674.5,87.7 L674.5,87.6 675.5,87.6 L675.5,89.9 676.5,89.9 L676.5,86.9 677.5,86.9 L677.5,87.1 678.5,87.1 L678.5,84.9 679.5,84.9 L679.5,86.3 680.5,86.3 L680.5,80.3 681.5,80.3 L681.5,81.1 682.5,81.1 L682.5,346.9 681.5,346.9 L681.5,350.7 680.5,350.7 L680.5,347.6 679.5,347.6 L679.5,350.2 678.5,350.2 L678.5,356.6 677.5,356.6 L677.5,349.9 676.5,349.9 L676.5,346.7 675.5,346.7 L675.5,348.3 674.5,348.3 L674.5,347.3 673.5,347.3 L673.5,349.9 672.5,349.9 L672.5,352.9 671.5,352.9 L671.5,352.9 670.5,352.9 L670.5,357.3 669.5,357.3 L669.5,359.7 668.5,359.7 L668.5,365.0 667.5,365.0 L667.5,363.2 666.5,363.2 L666.5,361.2 665.5,361.2 L665.5,364.2 664.5,364.2 L664.5,357.2 663.5,357.2 L663.5,359.2 662.5,359.2 L662.5,351.8 661.5,351.8 L661.5,346.9 660.5,346.9 L660.5,345.7 659.5,345.7 L659.5,341.8 658.5,341.8 L658.5,346.6 657.5,346.6 L657.5,345.1 656.5,345.1 L656.5,347.8 655.5,347.8 L655.5,345.6 654.5,345.6 L654.5,346.4 653.5,346.4 L653.5,341.6 652.5,341.6 L652.5,342.6 651.5,342.6 L651.5,339.5 650.5,339.5 L650.5,336.0 649.5,336.0 L649.5,336.5 648.5,336.5 L648.5,339.5 647.5,339.5 L647.5,339.7 646.5,339.7 L646.5,339.8 645.5,339.8 L645.5,342.5 644.5,342.5 L644.5,341.1 643.5,341.1 L643.5,341.1 642.5,341.1 L642.5,336.6 641.5,336.6 L641.5,336.7 640.5,336.7 L640.5,345.1 639.5,345.1 L639.5,342.4 638.5,342.4 L638.5,339.8 637.5,339.8 L637.5,343.9 636.5,343.9 L636.5,342.2 635.5,342.2 L635.5,343.2 634.5,343.2 L634.5,344.8 633.5,344.8 L633.5,347.4 632.5,347.4 L632.5,346.2 631.5,346.2 L631.5,342.9 630.5,342.9 L630.5,341.4 629.5,341.4 L629.5,341.1 628.5,341.1 L628.5,344.7 627.5,344.7 L627.5,350.2 626.5,350.2 L626.5,354.6 625.5,354.6 L625.5,358.3 624.5,358.3 L624.5,361.6 623.5,361.6 L623.5,357.0 622.5,357.0 L622.5,354.5 621.5,354.5 L621.5,358.2 620.5,358.2 L620.5,357.7 619.5,357.7 L619.5,361.2 618.5,361.2 L618.5,360.3 617.5,360.3 L617.5,358.3 616.5,358.3 L616.5,357.3 615.5,357.3 L615.5,355.9 614.5,355.9 L614.5,356.2 613.5,356.2 L613.5,351.4 612.5,351.4 L612.5,349.0 611.5,349.0 L611.5,347.9 610.5,347.9 L610.5,349.6 609.5,349.6 L609.5,349.7 608.5,349.7 L608.5,347.7 607.5,347.7 L607.5,347.1 606.5,347.1 L606.5,349.6 605.5,349.6 L605.5,347.1 604.5,347.1 L604.5,345.8 603.5,345.8 L603.5,346.2 602.5,346.2 L602.5,347.4 601.5,347.4 L601.5,339.7 600.5,339.7 L600.5,337.1 599.5,337.1 L599.5,336.5 598.5,336.5 L598.5,333.0 597.5,333.0 L597.5,330.4 596.5,330.4 L596.5,338.1 595.5,338.1 L595.5,333.6 594.5,333.6 L594.5,340.7 593.5,340.7 L593.5,343.6 592.5,343.6 L592.5,340.2 591.5,340.2 L591.5,342.7 590.5,342.7 L590.5,341.0 589.5,341.0 L589.5,338.9 588.5,338.9 L588.5,336.9 587.5,336.9 L587.5,335.7 586.5,335.7 L586.5,339.0 585.5,339.0 L585.5,347.3 584.5,347.3 L584.5,345.0 583.5,345.0 L583.5,348.4 582.5,348.4 L582.5,344.8 581.5,344.8 L581.5,344.5 580.5,344.5 L580.5,351.5 579.5,351.5 L579.5,344.3 578.5,344.3 L578.5,339.2 577.5,339.2 L577.5,340.9 576.5,340.9 L576.5,346.7 575.5,346.7 L575.5,348.2 574.5,348.2 L574.5,355.6 573.5,355.6 L573.5,357.3 572.5,357.3 L572.5,358.7 571.5,358.7 L571.5,361.1 570.5,361.1 L570.5,361.7 569.5,361.7 L569.5,363.3 568.5,363.3 L568.5,359.1 567.5,359.1 L567.5,352.5 566.5,352.5 L566.5,349.7 565.5,349.7 L565.5,343.8 564.5,343.8 L564.5,346.7 563.5,346.7 L563.5,351.7 562.5,351.7 L562.5,349.9 561.5,349.9 L561.5,349.9 560.5,349.9 L560.5,352.7 559.5,352.7 L559.5,353.4 558.5,353.4 L558.5,350.3 557.5,350.3 L557.5,353.0 556.5,353.0 L556.5,345.7 555.5,345.7 L555.5,342.7 554.5,342.7 L554.5,342.3 553.5,342.3 L553.5,338.1 552.5,338.1 L552.5,346.3 551.5,346.3 L551.5,341.5 550.5,341.5 L550.5,343.0 549.5,343.0 L549.5,342.8 548.5,342.8 L548.5,340.9 547.5,340.9 L547.5,334.8 546.5,334.8 L546.5,331.7 545.5,331.7 L545.5,333.8 544.5,333.8 L544.5,333.7 543.5,333.7 L543.5,340.3 542.5,340.3 L542.5,337.9 541.5,337.9 L541.5,340.4 540.5,340.4 L540.5,343.5 539.5,343.5 L539.5,347.9 538.5,347.9 L538.5,344.1 537.5,344.1 L537.5,341.1 536.5,341.1 L536.5,342.9 535.5,342.9 L535.5,339.6 534.5,339.6 L534.5,343.9 533.5,343.9 L533.5,344.1 532.5,344.1 L532.5,345.4 531.5,345.4 L531.5,347.3 530.5,347.3 L530.5,348.8 529.5,348.8 L529.5,351.3 528.5,351.3 L528.5,350.8 527.5,350.8 L527.5,344.7 526.5,344.7 L526.5,348.6 525.5,348.6 L525.5,347.9 524.5,347.9 L524.5,347.6 523.5,347.6 L523.5,353.5 522.5,353.5 L522.5,360.4 521.5,360.4 L521.5,361.0 520.5,361.0 L520.5,366.6 519.5,366.6 L519.5,360.4 518.5,360.4 L518.5,359.3 517.5,359.3 L517.5,362.1 516.5,362.1 L516.5,354.2 515.5,354.2 L515.5,358.5 514.5,358.5 L514.5,355.7 513.5,355.7 L513.5,359.2 512.5,359.2 L512.5,354.6 511.5,354.6 L511.5,347.6 510.5,347.6 L510.5,353.0 509.5,353.0 L509.5,344.4 508.5,344.4 L508.5,340.8 507.5,340.8 L507.5,343.0 506.5,343.0 L506.5,346.8 505.5,346.8 L505.5,346.4 504.5,346.4 L504.5,348.6 503.5,348.6 L503.5,342.1 502.5,342.1 L502.5,339.5 501.5,339.5 L501.5,340.3 500.5,340.3 L500.5,339.1 499.5,339.1 L499.5,334.8 498.5,334.8 L498.5,337.0 497.5,337.0 L497.5,341.1 496.5,341.1 L496.5,342.9 495.5,342.9 L495.5,346.5 494.5,346.5 L494.5,343.6 493.5,343.6 L493.5,341.7 492.5,341.7 L492.5,337.1 491.5,337.1 L491.5,342.3 490.5,342.3 L490.5,337.4 489.5,337.4 L489.5,343.0 488.5,343.0 L488.5,341.3 487.5,341.3 L487.5,343.6 486.5,343.6 L486.5,343.3 485.5,343.3 L485.5,346.9 484.5,346.9 L484.5,347.8 483.5,347.8 L483.5,351.4 482.5,351.4 L482.5,347.0 481.5,347.0 L481.5,347.1 480.5,347.1 L480.5,346.5 479.5,346.5 L479.5,340.1 478.5,340.1 L478.5,344.9 477.5,344.9 L477.5,339.9 476.5,339.9 L476.5,345.0 475.5,345.0 L475.5,348.6 474.5,348.6 L474.5,352.8 473.5,352.8 L473.5,358.8 472.5,358.8 L472.5,362.1 471.5,362.1 L471.5,368.6 470.5,368.6 L470.5,362.5 469.5,362.5 L469.5,364.8 468.5,364.8 L468.5,358.9 467.5,358.9 L467.5,354.6 466.5,354.6 L466.5,357.0 465.5,357.0 L465.5,350.3 464.5,350.3 L464.5,349.0 463.5,349.0 L463.5,351.4 462.5,351.4 L462.5,352.8 461.5,352.8 L461.5,349.1 460.5,349.1 L460.5,353.4 459.5,353.4 L459.5,345.5 458.5,345.5 L458.5,341.9 457.5,341.9 L457.5,337.1 456.5,337.1 L456.5,340.3 455.5,340.3 L455.5,343.5 454.5,343.5 L454.5,341.0 453.5,341.0 L453.5,342.3 452.5,342.3 L452.5,348.4 451.5,348.4 L451.5,345.1 450.5,345.1 L450.5,340.1 449.5,340.1 L449.5,338.5 448.5,338.5 L448.5,340.6 447.5,340.6 L447.5,330.7 446.5,330.7 L446.5,334.1 445.5,334.1 L445.5,334.4 444.5,334.4 L444.5,334.2 443.5,334.2 L443.5,341.4 442.5,341.4 L442.5,342.8 441.5,342.8 L441.5,343.4 440.5,343.4 L440.5,348.8 439.5,348.8 L439.5,344.5 438.5,344.5 L438.5,347.2 437.5,347.2 L437.5,344.0 436.5,344.0 L436.5,345.9 435.5,345.9 L435.5,337.7 434.5,337.7 L434.5,345.9 433.5,345.9 L433.5,340.2 432.5,340.2 L432.5,341.1 431.5,341.1 L431.5,347.0 430.5,347.0 L430.5,344.5 429.5,344.5 L429.5,357.2 428.5,357.2 L428.5,352.4 427.5,352.4 L427.5,354.6 426.5,354.6 L426.5,351.4 425.5,351.4 L425.5,355.7 424.5,355.7 L424.5,351.6 423.5,351.6 L423.5,350.0 422.5,350.0 L422.5,347.1 421.5,347.1 L421.5,349.6 420.5,349.6 L420.5,354.3 419.5,354.3 L419.5,356.9 418.5,356.9 L418.5,361.9 417.5,361.9 L417.5,359.7 416.5,359.7 L416.5,363.2 415.5,363.2 L415.5,355.9 414.5,355.9 L414.5,354.9 413.5,354.9 L413.5,356.3 412.5,356.3 L412.5,351.1 411.5,351.1 L411.5,348.4 410.5,348.4 L410.5,344.0 409.5,344.0 L409.5,345.7 408.5,345.7 L408.5,343.5 407.5,343.5 L407.5,344.4 406.5,344.4 L406.5,344.3 405.5,344.3 L405.5,353.3 404.5,353.3 L404.5,354.0 403.5,354.0 L403.5,347.5 402.5,347.5 L402.5,347.2 401.5,347.2 L401.5,345.3 400.5,345.3 L400.5,345.1 399.5,345.1 L399.5,346.7 398.5,346.7 L398.5,337.0 397.5,337.0 L397.5,335.7 396.5,335.7 L396.5,333.6 395.5,333.6 L395.5,335.8 394.5,335.8 L394.5,336.7 393.5,336.7 L393.5,340.8 392.5,340.8 L392.5,337.5 391.5,337.5 L391.5,341.8 390.5,341.8 L390.5,345.2 389.5,345.2 L389.5,344.3 388.5,344.3 L388.5,345.3 387.5,345.3 L387.5,341.4 386.5,341.4 L386.5,345.7 385.5,345.7 L385.5,336.0 384.5,336.0 L384.5,337.4 383.5,337.4 L383.5,340.5 382.5,340.5 L382.5,338.5 381.5,338.5 L381.5,346.6 380.5,346.6 L380.5,351.5 379.5,351.5 L379.5,351.6 378.5,351.6 L378.5,350.3 377.5,350.3 L377.5,349.1 376.5,349.1 L376.5,344.4 375.5,344.4 L375.5,344.2 374.5,344.2 L374.5,352.3 373.5,352.3 L373.5,359.1 372.5,359.1 L372.5,358.8 371.5,358.8 L371.5,357.0 370.5,357.0 L370.5,359.7 369.5,359.7 L369.5,361.4 368.5,361.4 L368.5,358.4 367.5,358.4 L367.5,350.2 366.5,350.2 L366.5,348.6 365.5,348.6 L365.5,351.4 364.5,351.4 L364.5,353.4 363.5,353.4 L363.5,350.0 362.5,350.0 L362.5,356.5 361.5,356.5 L361.5,355.0 360.5,355.0 L360.5,352.1 359.5,352.1 L359.5,351.1 358.5,351.1 L358.5,353.8 357.5,353.8 L357.5,348.9 356.5,348.9 L356.5,341.5 355.5,341.5 L355.5,349.1 354.5,349.1 L354.5,341.7 353.5,341.7 L353.5,347.8 352.5,347.8 L352.5,346.5 351.5,346.5 L351.5,341.5 350.5,341.5 L350.5,348.8 349.5,348.8 L349.5,348.0 348.5,348.0 L348.5,344.0 347.5,344.0 L347.5,343.2 346.5,343.2 L346.5,348.3 345.5,348.3 L345.5,338.5 344.5,338.5 L344.5,338.6 343.5,338.6 L343.5,336.8 342.5,336.8 L342.5,334.9 341.5,334.9 L341.5,336.4 340.5,336.4 L340.5,339.4 339.5,339.4 L339.5,343.0 338.5,343.0 L338.5,343.7 337.5,343.7 L337.5,345.5 336.5,345.5 L336.5,344.4 335.5,344.4 L335.5,344.1 334.5,344.1 L334.5,344.2 333.5,344.2 L333.5,342.0 332.5,342.0 L332.5,346.0 331.5,346.0 L331.5,340.8 330.5,340.8 L330.5,341.9 329.5,341.9 L329.5,339.8 328.5,339.8 L328.5,342.8 327.5,342.8 L327.5,345.6 326.5,345.6 L326.5,351.4 325.5,351.4 L325.5,356.1 324.5,356.1 L324.5,361.3 323.5,361.3 L323.5,356.9 322.5,356.9 L322.5,355.4 321.5,355.4 L321.5,356.6 320.5,356.6 L320.5,356.0 319.5,356.0 L319.5,358.1 318.5,358.1 L318.5,355.0 317.5,355.0 L317.5,353.7 316.5,353.7 L316.5,359.4 315.5,359.4 L315.5,354.7 314.5,354.7 L314.5,358.6 313.5,358.6 L313.5,352.8 312.5,352.8 L312.5,350.8 311.5,350.8 L311.5,346.1 310.5,346.1 L310.5,347.4 309.5,347.4 L309.5,341.2 308.5,341.2 L308.5,341.0 307.5,341.0 L307.5,342.7 306.5,342.7 L306.5,350.1 305.5,350.1 L305.5,345.0 304.5,345.0 L304.5,345.2 303.5,345.2 L303.5,346.0 302.5,346.0 L302.5,347.8 301.5,347.8 L301.5,347.3 300.5,347.3 L300.5,343.0 299.5,343.0 L299.5,343.5 298.5,343.5 L298.5,342.8 297.5,342.8 L297.5,340.0 296.5,340.0 L296.5,339.5 295.5,339.5 L295.5,336.2 294.5,336.2 L294.5,336.0 293.5,336.0 L293.5,340.5 292.5,340.5 L292.5,345.8 291.5,345.8 L291.5,343.3 290.5,343.3 L290.5,342.3 289.5,342.3 L289.5,343.0 288.5,343.0 L288.5,342.9 287.5,342.9 L287.5,340.2 286.5,340.2 L286.5,341.4 285.5,341.4 L285.5,335.9 284.5,335.9 L284.5,339.3 283.5,339.3 L283.5,343.2 282.5,343.2 L282.5,345.1 281.5,345.1 L281.5,346.9 280.5,346.9 L280.5,351.3 279.5,351.3 L279.5,347.8 278.5,347.8 L278.5,351.5 277.5,351.5 L277.5,346.3 276.5,346.3 L276.5,348.9 275.5,348.9 L275.5,350.0 274.5,350.0 L274.5,347.7 273.5,347.7 L273.5,353.4 272.5,353.4 L272.5,357.0 271.5,357.0 L271.5,361.7 270.5,361.7 L270.5,359.4 269.5,359.4 L269.5,363.5 268.5,363.5 L268.5,362.1 267.5,362.1 L267.5,358.1 266.5,358.1 L266.5,356.7 265.5,356.7 L265.5,358.0 264.5,358.0 L264.5,354.7 263.5,354.7 L263.5,350.3 262.5,350.3 L262.5,354.4 261.5,354.4 L261.5,348.7 260.5,348.7 L260.5,348.2 259.5,348.2 L259.5,351.9 258.5,351.9 L258.5,348.2 257.5,348.2 L257.5,347.6 256.5,347.6 L256.5,344.9 255.5,344.9 L255.5,346.8 254.5,346.8 L254.5,344.0 253.5,344.0 L253.5,347.7 252.5,347.7 L252.5,343.3 251.5,343.3 L251.5,343.6 250.5,343.6 L250.5,344.3 249.5,344.3 L249.5,342.0 248.5,342.0 L248.5,346.8 247.5,346.8 L247.5,340.2 246.5,340.2 L246.5,340.0 245.5,340.0 L245.5,339.1 244.5,339.1 L244.5,336.6 243.5,336.6 L243.5,335.4 242.5,335.4 L242.5,335.8 241.5,335.8 L241.5,342.0 240.5,342.0 L240.5,342.9 239.5,342.9 L239.5,342.2 238.5,342.2 L238.5,346.4 237.5,346.4 L237.5,342.4 236.5,342.4 L236.5,345.1 235.5,345.1 L235.5,343.2 234.5,343.2 L234.5,340.6 233.5,340.6 L233.5,338.9 232.5,338.9 L232.5,339.7 231.5,339.7 L231.5,342.8 230.5,342.8 L230.5,346.2 229.5,346.2 L229.5,347.0 228.5,347.0 L228.5,348.8 227.5,348.8 L227.5,353.6 226.5,353.6 L226.5,348.2 225.5,348.2 L225.5,350.7 224.5,350.7 L224.5,347.1 223.5,347.1 L223.5,343.7 222.5,343.7 L222.5,347.7 221.5,347.7 L221.5,354.0 220.5,354.0 L220.5,358.3 219.5,358.3 L219.5,363.5 218.5,363.5 L218.5,362.1 217.5,362.1 L217.5,362.0 216.5,362.0 L216.5,359.7 215.5,359.7 L215.5,354.3 214.5,354.3 L214.5,352.3 213.5,352.3 L213.5,349.3 212.5,349.3 L212.5,350.9 211.5,350.9 L211.5,352.1 210.5,352.1 L210.5,354.7 209.5,354.7 L209.5,349.5 208.5,349.5 L208.5,347.5 207.5,347.5 L207.5,346.1 206.5,346.1 L206.5,343.9 205.5,343.9 L205.5,343.2 204.5,343.2 L204.5,344.7 203.5,344.7 L203.5,343.5 202.5,343.5 L202.5,342.0 201.5,342.0 L201.5,343.6 200.5,343.6 L200.5,341.6 199.5,341.6 L199.5,346.9 198.5,346.9 L198.5,343.5 197.5,343.5 L197.5,344.4 196.5,344.4 L196.5,346.9 195.5,346.9 L195.5,343.8 194.5,343.8 L194.5,342.0 193.5,342.0 L193.5,340.4 192.5,340.4 L192.5,344.1 191.5,344.1 L191.5,336.2 190.5,336.2 L190.5,343.3 189.5,343.3 L189.5,343.4 188.5,343.4 L188.5,341.2 187.5,341.2 L187.5,345.3 186.5,345.3 L186.5,345.9 185.5,345.9 L185.5,344.8 184.5,344.8 L184.5,350.7 183.5,350.7 L183.5,347.5 182.5,347.5 L182.5,350.4 181.5,350.4 L181.5,350.6 180.5,350.6 L180.5,345.8 179.5,345.8 L179.5,345.9 178.5,345.9 L178.5,346.0 177.5,346.0 L177.5,344.7 176.5,344.7 L176.5,346.7 175.5,346.7 L175.5,357.1 174.5,357.1 L174.5,353.8 173.5,353.8 L173.5,355.6 172.5,355.6 L172.5,361.5 171.5,361.5 L171.5,364.8 170.5,364.8 L170.5,362.2 169.5,362.2 L169.5,359.5 168.5,359.5 L168.5,357.8 167.5,357.8 L167.5,352.8 166.5,352.8 L166.5,346.3 165.5,346.3 L165.5,349.2 164.5,349.2 L164.5,349.0 163.5,349.0 L163.5,350.2 162.5,350.2 L162.5,354.2 161.5,354.2 L161.5,353.2 160.5,353.2 L160.5,361.3 159.5,361.3 L159.5,348.9 158.5,348.9 L158.5,354.1 157.5,354.1 L157.5,345.7 156.5,345.7 L156.5,346.3 155.5,346.3 L155.5,343.7 154.5,343.7 L154.5,339.6 153.5,339.6 L153.5,344.7 152.5,344.7 L152.5,341.7 151.5,341.7 L151.5,342.8 150.5,342.8 L150.5,342.4 149.5,342.4 L149.5,341.7 148.5,341.7 L148.5,338.7 147.5,338.7 L147.5,333.5 146.5,333.5 L146.5,331.5 145.5,331.5 L145.5,329.3 144.5,329.3 L144.5,330.5 143.5,330.5 L143.5,334.3 142.5,334.3 L142.5,338.5 141.5,338.5 L141.5,343.8 140.5,343.8 L140.5,343.0 139.5,343.0 L139.5,343.2 138.5,343.2 L138.5,343.7 137.5,343.7 L137.5,342.4 136.5,342.4 L136.5,342.6 135.5,342.6 L135.5,342.5 134.5,342.5 L134.5,347.3 133.5,347.3 L133.5,345.9 132.5,345.9 L132.5,348.0 131.5,348.0 L131.5,347.7 130.5,347.7 L130.5,350.6 129.5,350.6 L129.5,344.5 128.5,344.5 L128.5,348.1 127.5,348.1 L127.5,351.3 126.5,351.3 L126.5,349.1 125.5,349.1 L125.5,348.5 124.5,348.5 L124.5,350.2 123.5,350.2 L123.5,358.1 122.5,358.1 L122.5,357.3 121.5,357.3 L121.5,358.9 120.5,358.9 L120.5,359.6 119.5,359.6 L119.5,356.1 118.5,356.1 L118.5,354.8 117.5,354.8 L117.5,357.1 116.5,357.1 L116.5,357.8 115.5,357.8 L115.5,353.2 114.5,353.2 L114.5,353.9 113.5,353.9 L113.5,354.9 112.5,354.9 L112.5,350.8 111.5,350.8 L111.5,348.6 110.5,348.6 L110.5,346.2 109.5,346.2 L109.5,342.1 108.5,342.1 L108.5,344.1 107.5,344.1 L107.5,345.6 106.5,345.6 L106.5,347.4 105.5,347.4 L105.5,348.3 104.5,348.3 L104.5,350.0 103.5,350.0 L103.5,347.8 102.5,347.8 L102.5,346.7 101.5,346.7 L101.5,341.8 100.5,341.8 L100.5,341.9 99.5,341.9 L99.5,339.6 98.5,339.6 L98.5,339.3 97.5,339.3 L97.5,346.2 96.5,346.2 L96.5,340.9 95.5,340.9 L95.5,344.7 94.5,344.7 L94.5,340.9 93.5,340.9 L93.5,343.9 92.5,343.9 L92.5,345.1 91.5,345.1 L91.5,342.2 90.5,342.2 L90.5,341.3 89.5,341.3 L89.5,344.2 88.5,344.2 L88.5,340.8 87.5,340.8 L87.5,343.7 86.5,343.7 L86.5,346.2 85.5,346.2 L85.5,341.2 84.5,341.2 L84.5,343.3 83.5,343.3 L83.5,351.1 82.5,351.1 Z" fill="#888e06" opacity="0.42"/>
<path d="M82.5,87.0 83.5,87.0 L83.5,87.4 84.5,87.4 L84.5,84.2 85.5,84.2 L85.5,82.2 86.5,82.2 L86.5,82.9 87.5,82.9 L87.5,82.0 88.5,82.0 L88.5,80.6 89.5,80.6 L89.5,79.5 90.5,79.5 L90.5,77.6 91.5,77.6 L91.5,75.9 92.5,75.9 L92.5,74.5 93.5,74.5 L93.5,73.6 94.5,73.6 L94.5,72.1 95.5,72.1 L95.5,71.9 96.5,71.9 L96.5,70.2 97.5,70.2 L97.5,67.1 98.5,67.1 L98.5,67.4 99.5,67.4 L99.5,66.8 100.5,66.8 L100.5,69.3 101.5,69.3 L101.5,71.0 102.5,71.0 L102.5,71.6 103.5,71.6 L103.5,70.9 104.5,70.9 L104.5,74.4 105.5,74.4 L105.5,73.8 106.5,73.8 L106.5,77.9 107.5,77.9 L107.5,77.2 108.5,77.2 L108.5,78.9 109.5,78.9 L109.5,82.0 110.5,82.0 L110.5,79.9 111.5,79.9 L111.5,82.8 112.5,82.8 L112.5,82.9 113.5,82.9 L113.5,84.6 114.5,84.6 L114.5,85.4 115.5,85.4 L115.5,87.8 116.5,87.8 L116.5,88.0 117.5,88.0 L117.5,89.6 118.5,89.6 L118.5,90.8 119.5,90.8 L119.5,89.5 120.5,89.5 L120.5,93.2 121.5,93.2 L121.5,92.5 122.5,92.5 L122.5,91.9 123.5,91.9 L123.5,93.3 124.5,93.3 L124.5,94.7 125.5,94.7 L125.5,94.3 126.5,94.3 L126.5,92.1 127.5,92.1 L127.5,92.0 128.5,92.0 L128.5,91.3 129.5,91.3 L129.5,91.1 130.5,91.1 L130.5,89.1 131.5,89.1 L131.5,89.1 132.5,89.1 L132.5,86.4 133.5,86.4 L133.5,85.5 134.5,85.5 L134.5,85.6 135.5,85.6 L135.5,84.6 136.5,84.6 L136.5,82.7 137.5,82.7 L137.5,82.1 138.5,82.1 L138.5,80.5 139.5,80.5 L139.5,79.8 140.5,79.8 L140.5,78.9 141.5,78.9 L141.5,77.0 142.5,77.0 L142.5,75.9 143.5,75.9 L143.5,73.5 144.5,73.5 L144.5,72.0 145.5,72.0 L145.5,68.9 146.5,68.9 L146.5,70.1 147.5,70.1 L147.5,68.3 148.5,68.3 L148.5,67.3 149.5,67.3 L149.5,65.1 150.5,65.1 L150.5,67.8 151.5,67.8 L151.5,69.2 152.5,69.2 L152.5,69.4 153.5,69.4 L153.5,73.3 154.5,73.3 L154.5,75.0 155.5,75.0 L155.5,74.0 156.5,74.0 L156.5,76.9 157.5,76.9 L157.5,79.4 158.5,79.4 L158.5,78.0 159.5,78.0 L159.5,81.2 160.5,81.2 L160.5,83.0 161.5,83.0 L161.5,84.4 162.5,84.4 L162.5,82.6 163.5,82.6 L163.5,84.1 164.5,84.1 L164.5,86.3 165.5,86.3 L165.5,88.3 166.5,88.3 L166.5,87.1 167.5,87.1 L167.5,88.6 168.5,88.6 L168.5,89.2 169.5,89.2 L169.5,92.1 170.5,92.1 L170.5,91.4 171.5,91.4 L171.5,93.2 172.5,93.2 L172.5,94.0 173.5,94.0 L173.5,95.0 174.5,95.0 L174.5,94.3 175.5,94.3 L175.5,93.7 176.5,93.7 L176.5,93.8 177.5,93.8 L177.5,92.4 178.5,92.4 L178.5,89.9 179.5,89.9 L179.5,89.7 180.5,89.7 L180.5,90.1 181.5,90.1 L181.5,88.4 182.5,88.4 L182.5,86.9 183.5,86.9 L183.5,86.4 184.5,86.4 L184.5,88.1 185.5,88.1 L185.5,83.9 186.5,83.9 L186.5,83.2 187.5,83.2 L187.5,82.0 188.5,82.0 L188.5,80.1 189.5,80.1 L189.5,80.2 190.5,80.2 L190.5,78.6 191.5,78.6 L191.5,76.9 192.5,76.9 L192.5,73.9 193.5,73.9 L193.5,75.0 194.5,75.0 L194.5,73.2 195.5,73.2 L195.5,71.0 196.5,71.0 L196.5,67.2 197.5,67.2 L197.5,68.2 198.5,68.2 L198.5,65.7 199.5,65.7 L199.5,66.6 200.5,66.6 L200.5,67.8 201.5,67.8 L201.5,68.9 202.5,68.9 L202.5,72.0 203.5,72.0 L203.5,72.6 204.5,72.6 L204.5,75.0 205.5,75.0 L205.5,74.3 206.5,74.3 L206.5,76.3 207.5,76.3 L207.5,79.1 208.5,79.1 L208.5,79.4 209.5,79.4 L209.5,79.6 210.5,79.6 L210.5,80.7 211.5,80.7 L211.5,82.2 212.5,82.2 L212.5,83.8 213.5,83.8 L213.5,85.7 214.5,85.7 L214.5,86.3 215.5,86.3 L215.5,87.9 216.5,87.9 L216.5,89.0 217.5,89.0 L217.5,89.4 218.5,89.4 L218.5,91.4 219.5,91.4 L219.5,91.8 220.5,91.8 L220.5,91.8 221.5,91.8 L221.5,92.5 222.5,92.5 L222.5,93.4 223.5,93.4 L223.5,93.2 224.5,93.2 L224.5,92.7 225.5,92.7 L225.5,93.4 226.5,93.4 L226.5,92.2 227.5,92.2 L227.5,92.5 228.5,92.5 L228.5,90.5 229.5,90.5 L229.5,90.3 230.5,90.3 L230.5,89.4 231.5,89.4 L231.5,87.8 232.5,87.8 L232.5,87.4 233.5,87.4 L233.5,85.5 234.5,85.5 L234.5,84.6 235.5,84.6 L235.5,84.6 236.5,84.6 L236.5,83.1 237.5,83.1 L237.5,81.5 238.5,81.5 L238.5,79.6 239.5,79.6 L239.5,79.7 240.5,79.7 L240.5,79.6 241.5,79.6 L241.5,74.5 242.5,74.5 L242.5,76.1 243.5,76.1 L243.5,74.0 244.5,74.0 L244.5,73.5 245.5,73.5 L245.5,72.2 246.5,72.2 L246.5,68.7 247.5,68.7 L247.5,69.9 248.5,69.9 L248.5,66.3 249.5,66.3 L249.5,66.6 250.5,66.6 L250.5,68.8 251.5,68.8 L251.5,69.6 252.5,69.6 L252.5,71.3 253.5,71.3 L253.5,72.0 254.5,72.0 L254.5,72.9 255.5,72.9 L255.5,75.2 256.5,75.2 L256.5,75.5 257.5,75.5 L257.5,79.0 258.5,79.0 L258.5,79.3 259.5,79.3 L259.5,81.6 260.5,81.6 L260.5,80.4 261.5,80.4 L261.5,80.8 262.5,80.8 L262.5,81.8 263.5,81.8 L263.5,84.7 264.5,84.7 L264.5,84.9 265.5,84.9 L265.5,87.5 266.5,87.5 L266.5,86.9 267.5,86.9 L267.5,88.0 268.5,88.0 L268.5,90.4 269.5,90.4 L269.5,90.7 270.5,90.7 L270.5,92.6 271.5,92.6 L271.5,93.4 272.5,93.4 L272.5,93.7 273.5,93.7 L273.5,92.8 274.5,92.8 L274.5,93.1 275.5,93.1 L275.5,95.5 276.5,95.5 L276.5,92.5 277.5,92.5 L277.5,92.2 278.5,92.2 L278.5,91.2 279.5,91.2 L279.5,90.2 280.5,90.2 L280.5,89.1 281.5,89.1 L281.5,87.7 282.5,87.7 L282.5,86.7 283.5,86.7 L283.5,84.3 284.5,84.3 L284.5,86.6 285.5,86.6 L285.5,83.8 286.5,83.8 L286.5,81.5 287.5,81.5 L287.5,82.0 288.5,82.0 L288.5,80.9 289.5,80.9 L289.5,77.7 290.5,77.7 L290.5,77.3 291.5,77.3 L291.5,77.9 292.5,77.9 L292.5,75.7 293.5,75.7 L293.5,74.2 294.5,74.2 L294.5,73.4 295.5,73.4 L295.5,71.0 296.5,71.0 L296.5,69.4 297.5,69.4 L297.5,69.7 298.5,69.7 L298.5,66.7 299.5,66.7 L299.5,66.7 300.5,66.7 L300.5,68.8 301.5,68.8 L301.5,69.7 302.5,69.7 L302.5,69.9 303.5,69.9 L303.5,74.2 304.5,74.2 L304.5,73.8 305.5,73.8 L305.5,76.8 306.5,76.8 L306.5,77.0 307.5,77.0 L307.5,76.9 308.5,76.9 L308.5,80.5 309.5,80.5 L309.5,80.1 310.5,80.1 L310.5,80.7 311.5,80.7 L311.5,82.7 312.5,82.7 L312.5,81.9 313.5,81.9 L313.5,85.4 314.5,85.4 L314.5,85.5 315.5,85.5 L315.5,87.0 316.5,87.0 L316.5,87.4 317.5,87.4 L317.5,89.9 318.5,89.9 L318.5,90.5 319.5,90.5 L319.5,92.1 320.5,92.1 L320.5,93.5 321.5,93.5 L321.5,93.0 322.5,93.0 L322.5,93.5 323.5,93.5 L323.5,94.2 324.5,94.2 L324.5,93.2 325.5,93.2 L325.5,92.9 326.5,92.9 L326.5,93.4 327.5,93.4 L327.5,91.1 328.5,91.1 L328.5,89.3 329.5,89.3 L329.5,89.9 330.5,89.9 L330.5,89.5 331.5,89.5 L331.5,89.6 332.5,89.6 L332.5,86.5 333.5,86.5 L333.5,85.3 334.5,85.3 L334.5,85.1 335.5,85.1 L335.5,83.7 336.5,83.7 L336.5,83.0 337.5,83.0 L337.5,81.1 338.5,81.1 L338.5,80.5 339.5,80.5 L339.5,78.5 340.5,78.5 L340.5,78.7 341.5,78.7 L341.5,76.7 342.5,76.7 L342.5,75.7 343.5,75.7 L343.5,73.4 344.5,73.4 L344.5,71.1 345.5,71.1 L345.5,71.1 346.5,71.1 L346.5,69.6 347.5,69.6 L347.5,69.3 348.5,69.3 L348.5,67.7 349.5,67.7 L349.5,66.8 350.5,66.8 L350.5,68.2 351.5,68.2 L351.5,68.8 352.5,68.8 L352.5,71.0 353.5,71.0 L353.5,72.7 354.5,72.7 L354.5,73.4 355.5,73.4 L355.5,74.2 356.5,74.2 L356.5,77.7 357.5,77.7 L357.5,76.9 358.5,76.9 L358.5,80.6 359.5,80.6 L359.5,81.4 360.5,81.4 L360.5,82.9 361.5,82.9 L361.5,81.9 362.5,81.9 L362.5,84.5 363.5,84.5 L363.5,83.7 364.5,83.7 L364.5,85.8 365.5,85.8 L365.5,85.8 366.5,85.8 L366.5,87.6 367.5,87.6 L367.5,88.8 368.5,88.8 L368.5,91.1 369.5,91.1 L369.5,92.1 370.5,92.1 L370.5,91.6 371.5,91.6 L371.5,92.4 372.5,92.4 L372.5,92.5 373.5,92.5 L373.5,92.9 374.5,92.9 L374.5,92.3 375.5,92.3 L375.5,93.2 376.5,93.2 L376.5,93.2 377.5,93.2 L377.5,91.2 378.5,91.2 L378.5,91.4 379.5,91.4 L379.5,89.1 380.5,89.1 L380.5,88.3 381.5,88.3 L381.5,87.7 382.5,87.7 L382.5,88.0 383.5,88.0 L383.5,85.6 384.5,85.6 L384.5,85.7 385.5,85.7 L385.5,83.6 386.5,83.6 L386.5,81.7 387.5,81.7 L387.5,79.7 388.5,79.7 L388.5,79.9 389.5,79.9 L389.5,78.2 390.5,78.2 L390.5,78.6 391.5,78.6 L391.5,76.9 392.5,76.9 L392.5,73.7 393.5,73.7 L393.5,74.6 394.5,74.6 L394.5,72.9 395.5,72.9 L395.5,68.4 396.5,68.4 L396.5,68.7 397.5,68.7 L397.5,68.5 398.5,68.5 L398.5,65.3 399.5,65.3 L399.5,66.1 400.5,66.1 L400.5,68.7 401.5,68.7 L401.5,69.9 402.5,69.9 L402.5,71.5 403.5,71.5 L403.5,73.0 404.5,73.0 L404.5,73.0 405.5,73.0 L405.5,77.3 406.5,77.3 L406.5,76.9 407.5,76.9 L407.5,79.7 408.5,79.7 L408.5,78.8 409.5,78.8 L409.5,80.8 410.5,80.8 L410.5,81.8 411.5,81.8 L411.5,82.6 412.5,82.6 L412.5,84.2 413.5,84.2 L413.5,85.2 414.5,85.2 L414.5,86.9 415.5,86.9 L415.5,87.5 416.5,87.5 L416.5,88.3 417.5,88.3 L417.5,89.7 418.5,89.7 L418.5,91.5 419.5,91.5 L419.5,91.1 420.5,91.1 L420.5,92.4 421.5,92.4 L421.5,92.8 422.5,92.8 L422.5,91.6 423.5,91.6 L423.5,93.1 424.5,93.1 L424.5,93.1 425.5,93.1 L425.5,92.1 426.5,92.1 L426.5,92.1 427.5,92.1 L427.5,90.3 428.5,90.3 L428.5,91.3 429.5,91.3 L429.5,89.7 430.5,89.7 L430.5,90.3 431.5,90.3 L431.5,88.6 432.5,88.6 L432.5,86.0 433.5,86.0 L433.5,85.9 434.5,85.9 L434.5,85.0 435.5,85.0 L435.5,83.3 436.5,83.3 L436.5,82.4 437.5,82.4 L437.5,80.5 438.5,80.5 L438.5,79.6 439.5,79.6 L439.5,79.3 440.5,79.3 L440.5,77.5 441.5,77.5 L441.5,77.5 442.5,77.5 L442.5,73.2 443.5,73.2 L443.5,73.1 444.5,73.1 L444.5,72.1 445.5,72.1 L445.5,72.4 446.5,72.4 L446.5,70.7 447.5,70.7 L447.5,68.9 448.5,68.9 L448.5,67.7 449.5,67.7 L449.5,68.2 450.5,68.2 L450.5,68.8 451.5,68.8 L451.5,69.4 452.5,69.4 L452.5,71.2 453.5,71.2 L453.5,71.8 454.5,71.8 L454.5,73.6 455.5,73.6 L455.5,75.5 456.5,75.5 L456.5,76.0 457.5,76.0 L457.5,77.8 458.5,77.8 L458.5,78.6 459.5,78.6 L459.5,79.1 460.5,79.1 L460.5,80.2 461.5,80.2 L461.5,83.3 462.5,83.3 L462.5,83.9 463.5,83.9 L463.5,85.7 464.5,85.7 L464.5,86.0 465.5,86.0 L465.5,87.2 466.5,87.2 L466.5,88.4 467.5,88.4 L467.5,88.9 468.5,88.9 L468.5,91.4 469.5,91.4 L469.5,91.9 470.5,91.9 L470.5,92.2 471.5,92.2 L471.5,91.7 472.5,91.7 L472.5,92.8 473.5,92.8 L473.5,94.1 474.5,94.1 L474.5,94.9 475.5,94.9 L475.5,93.3 476.5,93.3 L476.5,92.6 477.5,92.6 L477.5,92.3 478.5,92.3 L478.5,91.1 479.5,91.1 L479.5,90.0 480.5,90.0 L480.5,88.2 481.5,88.2 L481.5,89.3 482.5,89.3 L482.5,87.1 483.5,87.1 L483.5,85.6 484.5,85.6 L484.5,84.9 485.5,84.9 L485.5,82.6 486.5,82.6 L486.5,81.2 487.5,81.2 L487.5,79.9 488.5,79.9 L488.5,80.6 489.5,80.6 L489.5,77.8 490.5,77.8 L490.5,77.8 491.5,77.8 L491.5,75.3 492.5,75.3 L492.5,73.5 493.5,73.5 L493.5,73.2 494.5,73.2 L494.5,71.7 495.5,71.7 L495.5,70.4 496.5,70.4 L496.5,71.2 497.5,71.2 L497.5,68.4 498.5,68.4 L498.5,66.2 499.5,66.2 L499.5,67.5 500.5,67.5 L500.5,67.9 501.5,67.9 L501.5,70.7 502.5,70.7 L502.5,69.6 503.5,69.6 L503.5,73.4 504.5,73.4 L504.5,72.8 505.5,72.8 L505.5,74.4 506.5,74.4 L506.5,76.6 507.5,76.6 L507.5,76.7 508.5,76.7 L508.5,77.5 509.5,77.5 L509.5,79.9 510.5,79.9 L510.5,81.2 511.5,81.2 L511.5,81.2 512.5,81.2 L512.5,84.7 513.5,84.7 L513.5,84.2 514.5,84.2 L514.5,85.5 515.5,85.5 L515.5,86.9 516.5,86.9 L516.5,88.2 517.5,88.2 L517.5,90.1 518.5,90.1 L518.5,88.2 519.5,88.2 L519.5,91.0 520.5,91.0 L520.5,92.6 521.5,92.6 L521.5,92.8 522.5,92.8 L522.5,93.2 523.5,93.2 L523.5,92.8 524.5,92.8 L524.5,94.1 525.5,94.1 L525.5,92.8 526.5,92.8 L526.5,92.7 527.5,92.7 L527.5,90.9 528.5,90.9 L528.5,90.7 529.5,90.7 L529.5,90.0 530.5,90.0 L530.5,87.8 531.5,87.8 L531.5,89.1 532.5,89.1 L532.5,87.0 533.5,87.0 L533.5,84.9 534.5,84.9 L534.5,84.7 535.5,84.7 L535.5,83.9 536.5,83.9 L536.5,82.3 537.5,82.3 L537.5,80.5 538.5,80.5 L538.5,80.0 539.5,80.0 L539.5,77.7 540.5,77.7 L540.5,76.2 541.5,76.2 L541.5,77.4 542.5,77.4 L542.5,76.6 543.5,76.6 L543.5,75.4 544.5,75.4 L544.5,74.4 545.5,74.4 L545.5,72.2 546.5,72.2 L546.5,68.7 547.5,68.7 L547.5,67.7 548.5,67.7 L548.5,67.7 549.5,67.7 L549.5,66.3 550.5,66.3 L550.5,67.8 551.5,67.8 L551.5,69.6 552.5,69.6 L552.5,71.4 553.5,71.4 L553.5,71.1 554.5,71.1 L554.5,73.8 555.5,73.8 L555.5,75.5 556.5,75.5 L556.5,74.5 557.5,74.5 L557.5,78.7 558.5,78.7 L558.5,79.7 559.5,79.7 L559.5,79.5 560.5,79.5 L560.5,83.1 561.5,83.1 L561.5,83.0 562.5,83.0 L562.5,84.2 563.5,84.2 L563.5,86.3 564.5,86.3 L564.5,83.7 565.5,83.7 L565.5,87.1 566.5,87.1 L566.5,89.1 567.5,89.1 L567.5,90.4 568.5,90.4 L568.5,90.1 569.5,90.1 L569.5,90.8 570.5,90.8 L570.5,91.1 571.5,91.1 L571.5,92.3 572.5,92.3 L572.5,92.5 573.5,92.5 L573.5,91.7 574.5,91.7 L574.5,93.3 575.5,93.3 L575.5,92.4 576.5,92.4 L576.5,92.1 577.5,92.1 L577.5,91.4 578.5,91.4 L578.5,90.5 579.5,90.5 L579.5,90.2 580.5,90.2 L580.5,89.1 581.5,89.1 L581.5,87.8 582.5,87.8 L582.5,86.6 583.5,86.6 L583.5,85.9 584.5,85.9 L584.5,84.7 585.5,84.7 L585.5,83.7 586.5,83.7 L586.5,83.9 587.5,83.9 L587.5,81.6 588.5,81.6 L588.5,79.8 589.5,79.8 L589.5,77.1 590.5,77.1 L590.5,76.4 591.5,76.4 L591.5,73.7 592.5,73.7 L592.5,75.9 593.5,75.9 L593.5,74.7 594.5,74.7 L594.5,72.0 595.5,72.0 L595.5,70.6 596.5,70.6 L596.5,70.0 597.5,70.0 L597.5,68.7 598.5,68.7 L598.5,65.2 599.5,65.2 L599.5,66.5 600.5,66.5 L600.5,67.9 601.5,67.9 L601.5,68.4 602.5,68.4 L602.5,72.3 603.5,72.3 L603.5,73.0 604.5,73.0 L604.5,73.2 605.5,73.2 L605.5,75.0 606.5,75.0 L606.5,75.9 607.5,75.9 L607.5,77.2 608.5,77.2 L608.5,78.6 609.5,78.6 L609.5,81.1 610.5,81.1 L610.5,81.4 611.5,81.4 L611.5,82.2 612.5,82.2 L612.5,83.2 613.5,83.2 L613.5,85.2 614.5,85.2 L614.5,85.3 615.5,85.3 L615.5,85.7 616.5,85.7 L616.5,88.0 617.5,88.0 L617.5,90.6 618.5,90.6 L618.5,89.5 619.5,89.5 L619.5,91.1 620.5,91.1 L620.5,91.6 621.5,91.6 L621.5,93.7 622.5,93.7 L622.5,93.7 623.5,93.7 L623.5,92.7 624.5,92.7 L624.5,95.4 625.5,95.4 L625.5,93.3 626.5,93.3 L626.5,91.8 627.5,91.8 L627.5,91.4 628.5,91.4 L628.5,91.0 629.5,91.0 L629.5,91.1 630.5,91.1 L630.5,88.9 631.5,88.9 L631.5,87.5 632.5,87.5 L632.5,88.3 633.5,88.3 L633.5,87.5 634.5,87.5 L634.5,84.6 635.5,84.6 L635.5,83.9 636.5,83.9 L636.5,83.0 637.5,83.0 L637.5,81.2 638.5,81.2 L638.5,79.4 639.5,79.4 L639.5,79.9 640.5,79.9 L640.5,76.7 641.5,76.7 L641.5,74.7 642.5,74.7 L642.5,75.6 643.5,75.6 L643.5,74.8 644.5,74.8 L644.5,73.1 645.5,73.1 L645.5,70.3 646.5,70.3 L646.5,69.4 647.5,69.4 L647.5,67.2 648.5,67.2 L648.5,66.3 649.5,66.3 L649.5,64.5 650.5,64.5 L650.5,67.4 651.5,67.4 L651.5,70.8 652.5,70.8 L652.5,69.9 653.5,69.9 L653.5,73.9 654.5,73.9 L654.5,73.9 655.5,73.9 L655.5,73.3 656.5,73.3 L656.5,77.2 657.5,77.2 L657.5,76.8 658.5,76.8 L658.5,79.5 659.5,79.5 L659.5,80.0 660.5,80.0 L660.5,81.1 661.5,81.1 L661.5,82.5 662.5,82.5 L662.5,82.6 663.5,82.6 L663.5,84.2 664.5,84.2 L664.5,85.7 665.5,85.7 L665.5,88.7 666.5,88.7 L666.5,87.6 667.5,87.6 L667.5,89.4 668.5,89.4 L668.5,90.5 669.5,90.5 L669.5,92.1 670.5,92.1 L670.5,91.6 671.5,91.6 L671.5,92.8 672.5,92.8 L672.5,92.4 673.5,92.4 L673.5,96.1 674.5,96.1 L674.5,92.5 675.5,92.5 L675.5,93.5 676.5,93.5 L676.5,92.3 677.5,92.3 L677.5,92.0 678.5,92.0 L678.5,90.5 679.5,90.5 L679.5,89.7 680.5,89.7 L680.5,90.0 681.5,90.0 L681.5,89.0 682.5,89.0 L682.5,339.4 681.5,339.4 L681.5,341.8 680.5,341.8 L680.5,344.5 679.5,344.5 L679.5,346.9 678.5,346.9 L678.5,347.1 677.5,347.1 L677.5,346.6 676.5,346.6 L676.5,343.7 675.5,343.7 L675.5,344.8 674.5,344.8 L674.5,343.9 673.5,343.9 L673.5,343.2 672.5,343.2 L672.5,347.4 671.5,347.4 L671.5,350.9 670.5,350.9 L670.5,353.4 669.5,353.4 L669.5,356.8 668.5,356.8 L668.5,359.7 667.5,359.7 L667.5,356.8 666.5,356.8 L666.5,355.6 665.5,355.6 L665.5,354.5 664.5,354.5 L664.5,353.6 663.5,353.6 L663.5,348.6 662.5,348.6 L662.5,344.7 661.5,344.7 L661.5,342.1 660.5,342.1 L660.5,340.9 659.5,340.9 L659.5,337.9 658.5,337.9 L658.5,339.9 657.5,339.9 L657.5,341.4 656.5,341.4 L656.5,343.2 655.5,343.2 L655.5,341.8 654.5,341.8 L654.5,342.3 653.5,342.3 L653.5,339.3 652.5,339.3 L652.5,339.1 651.5,339.1 L651.5,336.2 650.5,336.2 L650.5,333.5 649.5,333.5 L649.5,332.3 648.5,332.3 L648.5,333.2 647.5,333.2 L647.5,335.0 646.5,335.0 L646.5,336.9 645.5,336.9 L645.5,337.4 644.5,337.4 L644.5,336.2 643.5,336.2 L643.5,336.0 642.5,336.0 L642.5,333.7 641.5,333.7 L641.5,334.7 640.5,334.7 L640.5,336.4 639.5,336.4 L639.5,336.4 638.5,336.4 L638.5,336.5 637.5,336.5 L637.5,339.2 636.5,339.2 L636.5,340.1 635.5,340.1 L635.5,340.8 634.5,340.8 L634.5,342.0 633.5,342.0 L633.5,339.3 632.5,339.3 L632.5,338.3 631.5,338.3 L631.5,338.5 630.5,338.5 L630.5,338.8 629.5,338.8 L629.5,339.0 628.5,339.0 L628.5,341.8 627.5,341.8 L627.5,344.4 626.5,344.4 L626.5,348.3 625.5,348.3 L625.5,350.6 624.5,350.6 L624.5,351.1 623.5,351.1 L623.5,352.1 622.5,352.1 L622.5,349.9 621.5,349.9 L621.5,349.9 620.5,349.9 L620.5,353.2 619.5,353.2 L619.5,353.7 618.5,353.7 L618.5,354.6 617.5,354.6 L617.5,355.8 616.5,355.8 L616.5,353.9 615.5,353.9 L615.5,352.5 614.5,352.5 L614.5,349.6 613.5,349.6 L613.5,346.8 612.5,346.8 L612.5,346.9 611.5,346.9 L611.5,345.0 610.5,345.0 L610.5,344.3 609.5,344.3 L609.5,345.1 608.5,345.1 L608.5,343.9 607.5,343.9 L607.5,343.1 606.5,343.1 L606.5,344.2 605.5,344.2 L605.5,344.3 604.5,344.3 L604.5,342.8 603.5,342.8 L603.5,342.6 602.5,342.6 L602.5,342.3 601.5,342.3 L601.5,337.5 600.5,337.5 L600.5,333.8 599.5,333.8 L599.5,331.3 598.5,331.3 L598.5,328.1 597.5,328.1 L597.5,325.5 596.5,325.5 L596.5,330.5 595.5,330.5 L595.5,330.4 594.5,330.4 L594.5,334.8 593.5,334.8 L593.5,336.9 592.5,336.9 L592.5,338.2 591.5,338.2 L591.5,337.0 590.5,337.0 L590.5,335.9 589.5,335.9 L589.5,334.1 588.5,334.1 L588.5,333.4 587.5,333.4 L587.5,333.1 586.5,333.1 L586.5,335.4 585.5,335.4 L585.5,338.5 584.5,338.5 L584.5,340.1 583.5,340.1 L583.5,345.1 582.5,345.1 L582.5,342.3 581.5,342.3 L581.5,341.2 580.5,341.2 L580.5,341.1 579.5,341.1 L579.5,337.9 578.5,337.9 L578.5,336.8 577.5,336.8 L577.5,338.3 576.5,338.3 L576.5,342.1 575.5,342.1 L575.5,343.7 574.5,343.7 L574.5,349.4 573.5,349.4 L573.5,351.9 572.5,351.9 L572.5,355.4 571.5,355.4 L571.5,357.8 570.5,357.8 L570.5,358.3 569.5,358.3 L569.5,357.9 568.5,357.9 L568.5,356.1 567.5,356.1 L567.5,349.9 566.5,349.9 L566.5,347.5 565.5,347.5 L565.5,341.6 564.5,341.6 L564.5,342.3 563.5,342.3 L563.5,344.3 562.5,344.3 L562.5,345.2 561.5,345.2 L561.5,345.8 560.5,345.8 L560.5,347.7 559.5,347.7 L559.5,347.7 558.5,347.7 L558.5,345.8 557.5,345.8 L557.5,342.7 556.5,342.7 L556.5,341.6 555.5,341.6 L555.5,339.1 554.5,339.1 L554.5,336.8 553.5,336.8 L553.5,335.1 552.5,335.1 L552.5,335.6 551.5,335.6 L551.5,337.4 550.5,337.4 L550.5,337.3 549.5,337.3 L549.5,338.1 548.5,338.1 L548.5,332.6 547.5,332.6 L547.5,332.7 546.5,332.7 L546.5,328.8 545.5,328.8 L545.5,328.9 544.5,328.9 L544.5,329.7 543.5,329.7 L543.5,330.6 542.5,330.6 L542.5,335.0 541.5,335.0 L541.5,337.4 540.5,337.4 L540.5,338.8 539.5,338.8 L539.5,339.2 538.5,339.2 L538.5,339.1 537.5,339.1 L537.5,337.7 536.5,337.7 L536.5,337.0 535.5,337.0 L535.5,334.8 534.5,334.8 L534.5,338.2 533.5,338.2 L533.5,339.1 532.5,339.1 L532.5,341.2 531.5,341.2 L531.5,343.3 530.5,343.3 L530.5,343.8 529.5,343.8 L529.5,342.2 528.5,342.2 L528.5,341.8 527.5,341.8 L527.5,341.2 526.5,341.2 L526.5,338.3 525.5,338.3 L525.5,341.2 524.5,341.2 L524.5,343.4 523.5,343.4 L523.5,347.9 522.5,347.9 L522.5,351.8 521.5,351.8 L521.5,355.8 520.5,355.8 L520.5,355.1 519.5,355.1 L519.5,356.7 518.5,356.7 L518.5,356.5 517.5,356.5 L517.5,354.9 516.5,354.9 L516.5,351.6 515.5,351.6 L515.5,351.5 514.5,351.5 L514.5,351.7 513.5,351.7 L513.5,351.9 512.5,351.9 L512.5,349.2 511.5,349.2 L511.5,344.9 510.5,344.9 L510.5,343.1 509.5,343.1 L509.5,340.6 508.5,340.6 L508.5,338.6 507.5,338.6 L507.5,340.0 506.5,340.0 L506.5,340.4 505.5,340.4 L505.5,341.7 504.5,341.7 L504.5,340.5 503.5,340.5 L503.5,335.4 502.5,335.4 L502.5,334.7 501.5,334.7 L501.5,333.4 500.5,333.4 L500.5,333.0 499.5,333.0 L499.5,331.8 498.5,331.8 L498.5,334.8 497.5,334.8 L497.5,335.0 496.5,335.0 L496.5,339.0 495.5,339.0 L495.5,339.3 494.5,339.3 L494.5,339.2 493.5,339.2 L493.5,334.4 492.5,334.4 L492.5,335.0 491.5,335.0 L491.5,335.2 490.5,335.2 L490.5,332.4 489.5,332.4 L489.5,335.9 488.5,335.9 L488.5,337.4 487.5,337.4 L487.5,339.1 486.5,339.1 L486.5,340.7 485.5,340.7 L485.5,343.9 484.5,343.9 L484.5,343.0 483.5,343.0 L483.5,344.2 482.5,344.2 L482.5,344.0 481.5,344.0 L481.5,342.3 480.5,342.3 L480.5,339.9 479.5,339.9 L479.5,336.6 478.5,336.6 L478.5,337.0 477.5,337.0 L477.5,337.1 476.5,337.1 L476.5,340.6 475.5,340.6 L475.5,344.7 474.5,344.7 L474.5,348.7 473.5,348.7 L473.5,351.4 472.5,351.4 L472.5,355.9 471.5,355.9 L471.5,358.2 470.5,358.2 L470.5,357.9 469.5,357.9 L469.5,357.2 468.5,357.2 L468.5,355.0 467.5,355.0 L467.5,350.1 466.5,350.1 L466.5,346.4 465.5,346.4 L465.5,343.2 464.5,343.2 L464.5,346.0 463.5,346.0 L463.5,346.5 462.5,346.5 L462.5,346.4 461.5,346.4 L461.5,346.8 460.5,346.8 L460.5,345.4 459.5,345.4 L459.5,341.8 458.5,341.8 L458.5,337.8 457.5,337.8 L457.5,333.7 456.5,333.7 L456.5,337.4 455.5,337.4 L455.5,338.7 454.5,338.7 L454.5,338.3 453.5,338.3 L453.5,339.6 452.5,339.6 L452.5,341.9 451.5,341.9 L451.5,341.1 450.5,341.1 L450.5,338.0 449.5,338.0 L449.5,335.7 448.5,335.7 L448.5,331.8 447.5,331.8 L447.5,325.8 446.5,325.8 L446.5,325.6 445.5,325.6 L445.5,327.7 444.5,327.7 L444.5,331.1 443.5,331.1 L443.5,333.6 442.5,333.6 L442.5,336.7 441.5,336.7 L441.5,338.4 440.5,338.4 L440.5,339.4 439.5,339.4 L439.5,341.0 438.5,341.0 L438.5,340.7 437.5,340.7 L437.5,339.4 436.5,339.4 L436.5,338.2 435.5,338.2 L435.5,334.6 434.5,334.6 L434.5,336.7 433.5,336.7 L433.5,336.0 432.5,336.0 L432.5,338.1 431.5,338.1 L431.5,342.3 430.5,342.3 L430.5,341.3 429.5,341.3 L429.5,346.9 428.5,346.9 L428.5,347.5 427.5,347.5 L427.5,348.1 426.5,348.1 L426.5,347.5 425.5,347.5 L425.5,348.0 424.5,348.0 L424.5,348.3 423.5,348.3 L423.5,346.4 422.5,346.4 L422.5,344.9 421.5,344.9 L421.5,346.6 420.5,346.6 L420.5,350.9 419.5,350.9 L419.5,353.5 418.5,353.5 L418.5,356.4 417.5,356.4 L417.5,356.2 416.5,356.2 L416.5,354.9 415.5,354.9 L415.5,353.9 414.5,353.9 L414.5,352.0 413.5,352.0 L413.5,351.5 412.5,351.5 L412.5,348.1 411.5,348.1 L411.5,344.9 410.5,344.9 L410.5,341.8 409.5,341.8 L409.5,340.4 408.5,340.4 L408.5,340.3 407.5,340.3 L407.5,341.2 406.5,341.2 L406.5,341.6 405.5,341.6 L405.5,343.7 404.5,343.7 L404.5,343.9 403.5,343.9 L403.5,341.4 402.5,341.4 L402.5,341.6 401.5,341.6 L401.5,341.0 400.5,341.0 L400.5,338.1 399.5,338.1 L399.5,335.9 398.5,335.9 L398.5,334.9 397.5,334.9 L397.5,331.7 396.5,331.7 L396.5,329.9 395.5,329.9 L395.5,330.0 394.5,330.0 L394.5,333.4 393.5,333.4 L393.5,335.8 392.5,335.8 L392.5,335.4 391.5,335.4 L391.5,339.7 390.5,339.7 L390.5,338.7 389.5,338.7 L389.5,339.6 388.5,339.6 L388.5,341.2 387.5,341.2 L387.5,337.7 386.5,337.7 L386.5,336.8 385.5,336.8 L385.5,333.9 384.5,333.9 L384.5,331.7 383.5,331.7 L383.5,333.0 382.5,333.0 L382.5,336.1 381.5,336.1 L381.5,341.0 380.5,341.0 L380.5,343.3 379.5,343.3 L379.5,346.1 378.5,346.1 L378.5,344.6 377.5,344.6 L377.5,343.2 376.5,343.2 L376.5,342.0 375.5,342.0 L375.5,341.7 374.5,341.7 L374.5,343.7 373.5,343.7 L373.5,350.6 372.5,350.6 L372.5,352.6 371.5,352.6 L371.5,354.7 370.5,354.7 L370.5,354.0 369.5,354.0 L369.5,354.2 368.5,354.2 L368.5,352.4 367.5,352.4 L367.5,347.8 366.5,347.8 L366.5,345.2 365.5,345.2 L365.5,345.4 364.5,345.4 L364.5,347.1 363.5,347.1 L363.5,346.1 362.5,346.1 L362.5,348.9 361.5,348.9 L361.5,348.7 360.5,348.7 L360.5,348.2 359.5,348.2 L359.5,345.6 358.5,345.6 L358.5,346.4 357.5,346.4 L357.5,340.4 356.5,340.4 L356.5,339.5 355.5,339.5 L355.5,339.3 354.5,339.3 L354.5,339.5 353.5,339.5 L353.5,340.6 352.5,340.6 L352.5,341.2 351.5,341.2 L351.5,338.4 350.5,338.4 L350.5,341.3 349.5,341.3 L349.5,340.4 348.5,340.4 L348.5,340.1 347.5,340.1 L347.5,338.7 346.5,338.7 L346.5,338.6 345.5,338.6 L345.5,335.8 344.5,335.8 L344.5,334.9 343.5,334.9 L343.5,333.1 342.5,333.1 L342.5,332.0 341.5,332.0 L341.5,333.1 340.5,333.1 L340.5,335.4 339.5,335.4 L339.5,337.4 338.5,337.4 L338.5,338.7 337.5,338.7 L337.5,341.5 336.5,341.5 L336.5,340.4 335.5,340.4 L335.5,341.3 334.5,341.3 L334.5,341.2 333.5,341.2 L333.5,340.0 332.5,340.0 L332.5,336.6 331.5,336.6 L331.5,335.7 330.5,335.7 L330.5,335.1 329.5,335.1 L329.5,336.8 328.5,336.8 L328.5,339.4 327.5,339.4 L327.5,342.2 326.5,342.2 L326.5,345.0 325.5,345.0 L325.5,348.6 324.5,348.6 L324.5,354.6 323.5,354.6 L323.5,353.8 322.5,353.8 L322.5,353.0 321.5,353.0 L321.5,353.8 320.5,353.8 L320.5,351.7 319.5,351.7 L319.5,351.5 318.5,351.5 L318.5,349.7 317.5,349.7 L317.5,349.7 316.5,349.7 L316.5,351.5 315.5,351.5 L315.5,351.2 314.5,351.2 L314.5,351.3 313.5,351.3 L313.5,349.3 312.5,349.3 L312.5,346.5 311.5,346.5 L311.5,344.1 310.5,344.1 L310.5,340.0 309.5,340.0 L309.5,336.6 308.5,336.6 L308.5,337.0 307.5,337.0 L307.5,338.6 306.5,338.6 L306.5,340.6 305.5,340.6 L305.5,341.9 304.5,341.9 L304.5,342.4 303.5,342.4 L303.5,343.4 302.5,343.4 L302.5,342.0 301.5,342.0 L301.5,339.5 300.5,339.5 L300.5,337.8 299.5,337.8 L299.5,338.7 298.5,338.7 L298.5,336.0 297.5,336.0 L297.5,334.4 296.5,334.4 L296.5,333.0 295.5,333.0 L295.5,332.4 294.5,332.4 L294.5,333.9 293.5,333.9 L293.5,336.3 292.5,336.3 L292.5,338.7 291.5,338.7 L291.5,339.2 290.5,339.2 L290.5,338.2 289.5,338.2 L289.5,338.1 288.5,338.1 L288.5,336.9 287.5,336.9 L287.5,335.7 286.5,335.7 L286.5,332.7 285.5,332.7 L285.5,333.2 284.5,333.2 L284.5,335.9 283.5,335.9 L283.5,339.5 282.5,339.5 L282.5,342.4 281.5,342.4 L281.5,344.4 280.5,344.4 L280.5,346.8 279.5,346.8 L279.5,344.6 278.5,344.6 L278.5,343.6 277.5,343.6 L277.5,342.5 276.5,342.5 L276.5,343.2 275.5,343.2 L275.5,344.9 274.5,344.9 L274.5,345.5 273.5,345.5 L273.5,351.3 272.5,351.3 L272.5,352.1 271.5,352.1 L271.5,355.9 270.5,355.9 L270.5,356.8 269.5,356.8 L269.5,361.5 268.5,361.5 L268.5,358.5 267.5,358.5 L267.5,354.6 266.5,354.6 L266.5,352.9 265.5,352.9 L265.5,350.4 264.5,350.4 L264.5,347.7 263.5,347.7 L263.5,347.5 262.5,347.5 L262.5,347.6 261.5,347.6 L261.5,346.5 260.5,346.5 L260.5,345.7 259.5,345.7 L259.5,347.6 258.5,347.6 L258.5,345.5 257.5,345.5 L257.5,341.4 256.5,341.4 L256.5,341.4 255.5,341.4 L255.5,340.0 254.5,340.0 L254.5,339.1 253.5,339.1 L253.5,340.9 252.5,340.9 L252.5,340.7 251.5,340.7 L251.5,340.4 250.5,340.4 L250.5,341.2 249.5,341.2 L249.5,339.6 248.5,339.6 L248.5,337.8 247.5,337.8 L247.5,337.5 246.5,337.5 L246.5,333.9 245.5,333.9 L245.5,333.8 244.5,333.8 L244.5,332.7 243.5,332.7 L243.5,331.6 242.5,331.6 L242.5,333.3 241.5,333.3 L241.5,335.9 240.5,335.9 L240.5,338.2 239.5,338.2 L239.5,338.0 238.5,338.0 L238.5,340.6 237.5,340.6 L237.5,339.7 236.5,339.7 L236.5,341.5 235.5,341.5 L235.5,338.1 234.5,338.1 L234.5,336.2 233.5,336.2 L233.5,336.6 232.5,336.6 L232.5,334.8 231.5,334.8 L231.5,336.6 230.5,336.6 L230.5,341.2 229.5,341.2 L229.5,341.9 228.5,341.9 L228.5,346.7 227.5,346.7 L227.5,345.8 226.5,345.8 L226.5,345.8 225.5,345.8 L225.5,344.0 224.5,344.0 L224.5,344.1 223.5,344.1 L223.5,341.4 222.5,341.4 L222.5,344.8 221.5,344.8 L221.5,351.4 220.5,351.4 L220.5,354.5 219.5,354.5 L219.5,357.4 218.5,357.4 L218.5,359.0 217.5,359.0 L217.5,355.9 216.5,355.9 L216.5,353.8 215.5,353.8 L215.5,351.6 214.5,351.6 L214.5,349.6 213.5,349.6 L213.5,347.1 212.5,347.1 L212.5,347.5 211.5,347.5 L211.5,346.8 210.5,346.8 L210.5,346.8 209.5,346.8 L209.5,346.6 208.5,346.6 L208.5,345.2 207.5,345.2 L207.5,341.9 206.5,341.9 L206.5,341.1 205.5,341.1 L205.5,339.2 204.5,339.2 L204.5,336.5 203.5,336.5 L203.5,337.1 202.5,337.1 L202.5,338.8 201.5,338.8 L201.5,338.8 200.5,338.8 L200.5,338.0 199.5,338.0 L199.5,339.1 198.5,339.1 L198.5,340.4 197.5,340.4 L197.5,339.9 196.5,339.9 L196.5,339.6 195.5,339.6 L195.5,338.0 194.5,338.0 L194.5,337.7 193.5,337.7 L193.5,336.3 192.5,336.3 L192.5,337.1 191.5,337.1 L191.5,334.0 190.5,334.0 L190.5,336.7 189.5,336.7 L189.5,336.9 188.5,336.9 L188.5,336.7 187.5,336.7 L187.5,341.3 186.5,341.3 L186.5,342.2 185.5,342.2 L185.5,342.4 184.5,342.4 L184.5,343.1 183.5,343.1 L183.5,342.8 182.5,342.8 L182.5,343.3 181.5,343.3 L181.5,343.9 180.5,343.9 L180.5,343.7 179.5,343.7 L179.5,342.3 178.5,342.3 L178.5,341.5 177.5,341.5 L177.5,340.4 176.5,340.4 L176.5,343.5 175.5,343.5 L175.5,347.5 174.5,347.5 L174.5,349.3 173.5,349.3 L173.5,352.6 172.5,352.6 L172.5,355.0 171.5,355.0 L171.5,356.9 170.5,356.9 L170.5,355.4 169.5,355.4 L169.5,356.4 168.5,356.4 L168.5,353.5 167.5,353.5 L167.5,347.9 166.5,347.9 L166.5,343.2 165.5,343.2 L165.5,343.6 164.5,343.6 L164.5,345.2 163.5,345.2 L163.5,345.1 162.5,345.1 L162.5,348.5 161.5,348.5 L161.5,348.4 160.5,348.4 L160.5,347.9 159.5,347.9 L159.5,346.7 158.5,346.7 L158.5,346.8 157.5,346.8 L157.5,342.3 156.5,342.3 L156.5,342.5 155.5,342.5 L155.5,340.1 154.5,340.1 L154.5,337.1 153.5,337.1 L153.5,337.2 152.5,337.2 L152.5,339.4 151.5,339.4 L151.5,338.4 150.5,338.4 L150.5,339.8 149.5,339.8 L149.5,336.8 148.5,336.8 L148.5,334.9 147.5,334.9 L147.5,331.0 146.5,331.0 L146.5,329.1 145.5,329.1 L145.5,326.5 144.5,326.5 L144.5,327.6 143.5,327.6 L143.5,331.2 142.5,331.2 L142.5,334.8 141.5,334.8 L141.5,337.0 140.5,337.0 L140.5,340.0 139.5,340.0 L139.5,338.9 138.5,338.9 L138.5,339.5 137.5,339.5 L137.5,339.4 136.5,339.4 L136.5,338.4 135.5,338.4 L135.5,337.3 134.5,337.3 L134.5,339.0 133.5,339.0 L133.5,340.8 132.5,340.8 L132.5,343.4 131.5,343.4 L131.5,345.3 130.5,345.3 L130.5,342.6 129.5,342.6 L129.5,342.3 128.5,342.3 L128.5,343.0 127.5,343.0 L127.5,342.9 126.5,342.9 L126.5,343.5 125.5,343.5 L125.5,344.9 124.5,344.9 L124.5,347.4 123.5,347.4 L123.5,351.7 122.5,351.7 L122.5,353.8 121.5,353.8 L121.5,353.0 120.5,353.0 L120.5,353.2 119.5,353.2 L119.5,353.6 118.5,353.6 L118.5,349.2 117.5,349.2 L117.5,352.6 116.5,352.6 L116.5,350.1 115.5,350.1 L115.5,351.1 114.5,351.1 L114.5,351.6 113.5,351.6 L113.5,349.5 112.5,349.5 L112.5,345.4 111.5,345.4 L111.5,345.0 110.5,345.0 L110.5,343.0 109.5,343.0 L109.5,339.9 108.5,339.9 L108.5,341.8 107.5,341.8 L107.5,342.8 106.5,342.8 L106.5,344.4 105.5,344.4 L105.5,345.8 104.5,345.8 L104.5,343.2 103.5,343.2 L103.5,341.5 102.5,341.5 L102.5,342.3 101.5,342.3 L101.5,339.0 100.5,339.0 L100.5,336.1 99.5,336.1 L99.5,336.2 98.5,336.2 L98.5,336.8 97.5,336.8 L97.5,337.1 96.5,337.1 L96.5,336.8 95.5,336.8 L95.5,337.9 94.5,337.9 L94.5,338.3 93.5,338.3 L93.5,339.4 92.5,339.4 L92.5,338.2 91.5,338.2 L91.5,338.7 90.5,338.7 L90.5,336.5 89.5,336.5 L89.5,337.6 88.5,337.6 L88.5,337.2 87.5,337.2 L87.5,336.3 86.5,336.3 L86.5,336.6 85.5,336.6 L85.5,338.5 84.5,338.5 L84.5,340.0 83.5,340.0 L83.5,341.9 82.5,341.9 Z" fill="#888e06"/></g></g><rect x="83" y="80" width="599" height="60" fill="url(#gDark)"/><rect x="83" y="300" width="599" height="40" fill="url(#gDark)"/><use href="#markers"/></g></g>
<rect x="798" y="0" width="2" height="960" fill="#f4f4f4"/>
<rect x="0" y="478" width="1600" height="2" fill="#f4f4f4"/>
</svg></div></body></html>
